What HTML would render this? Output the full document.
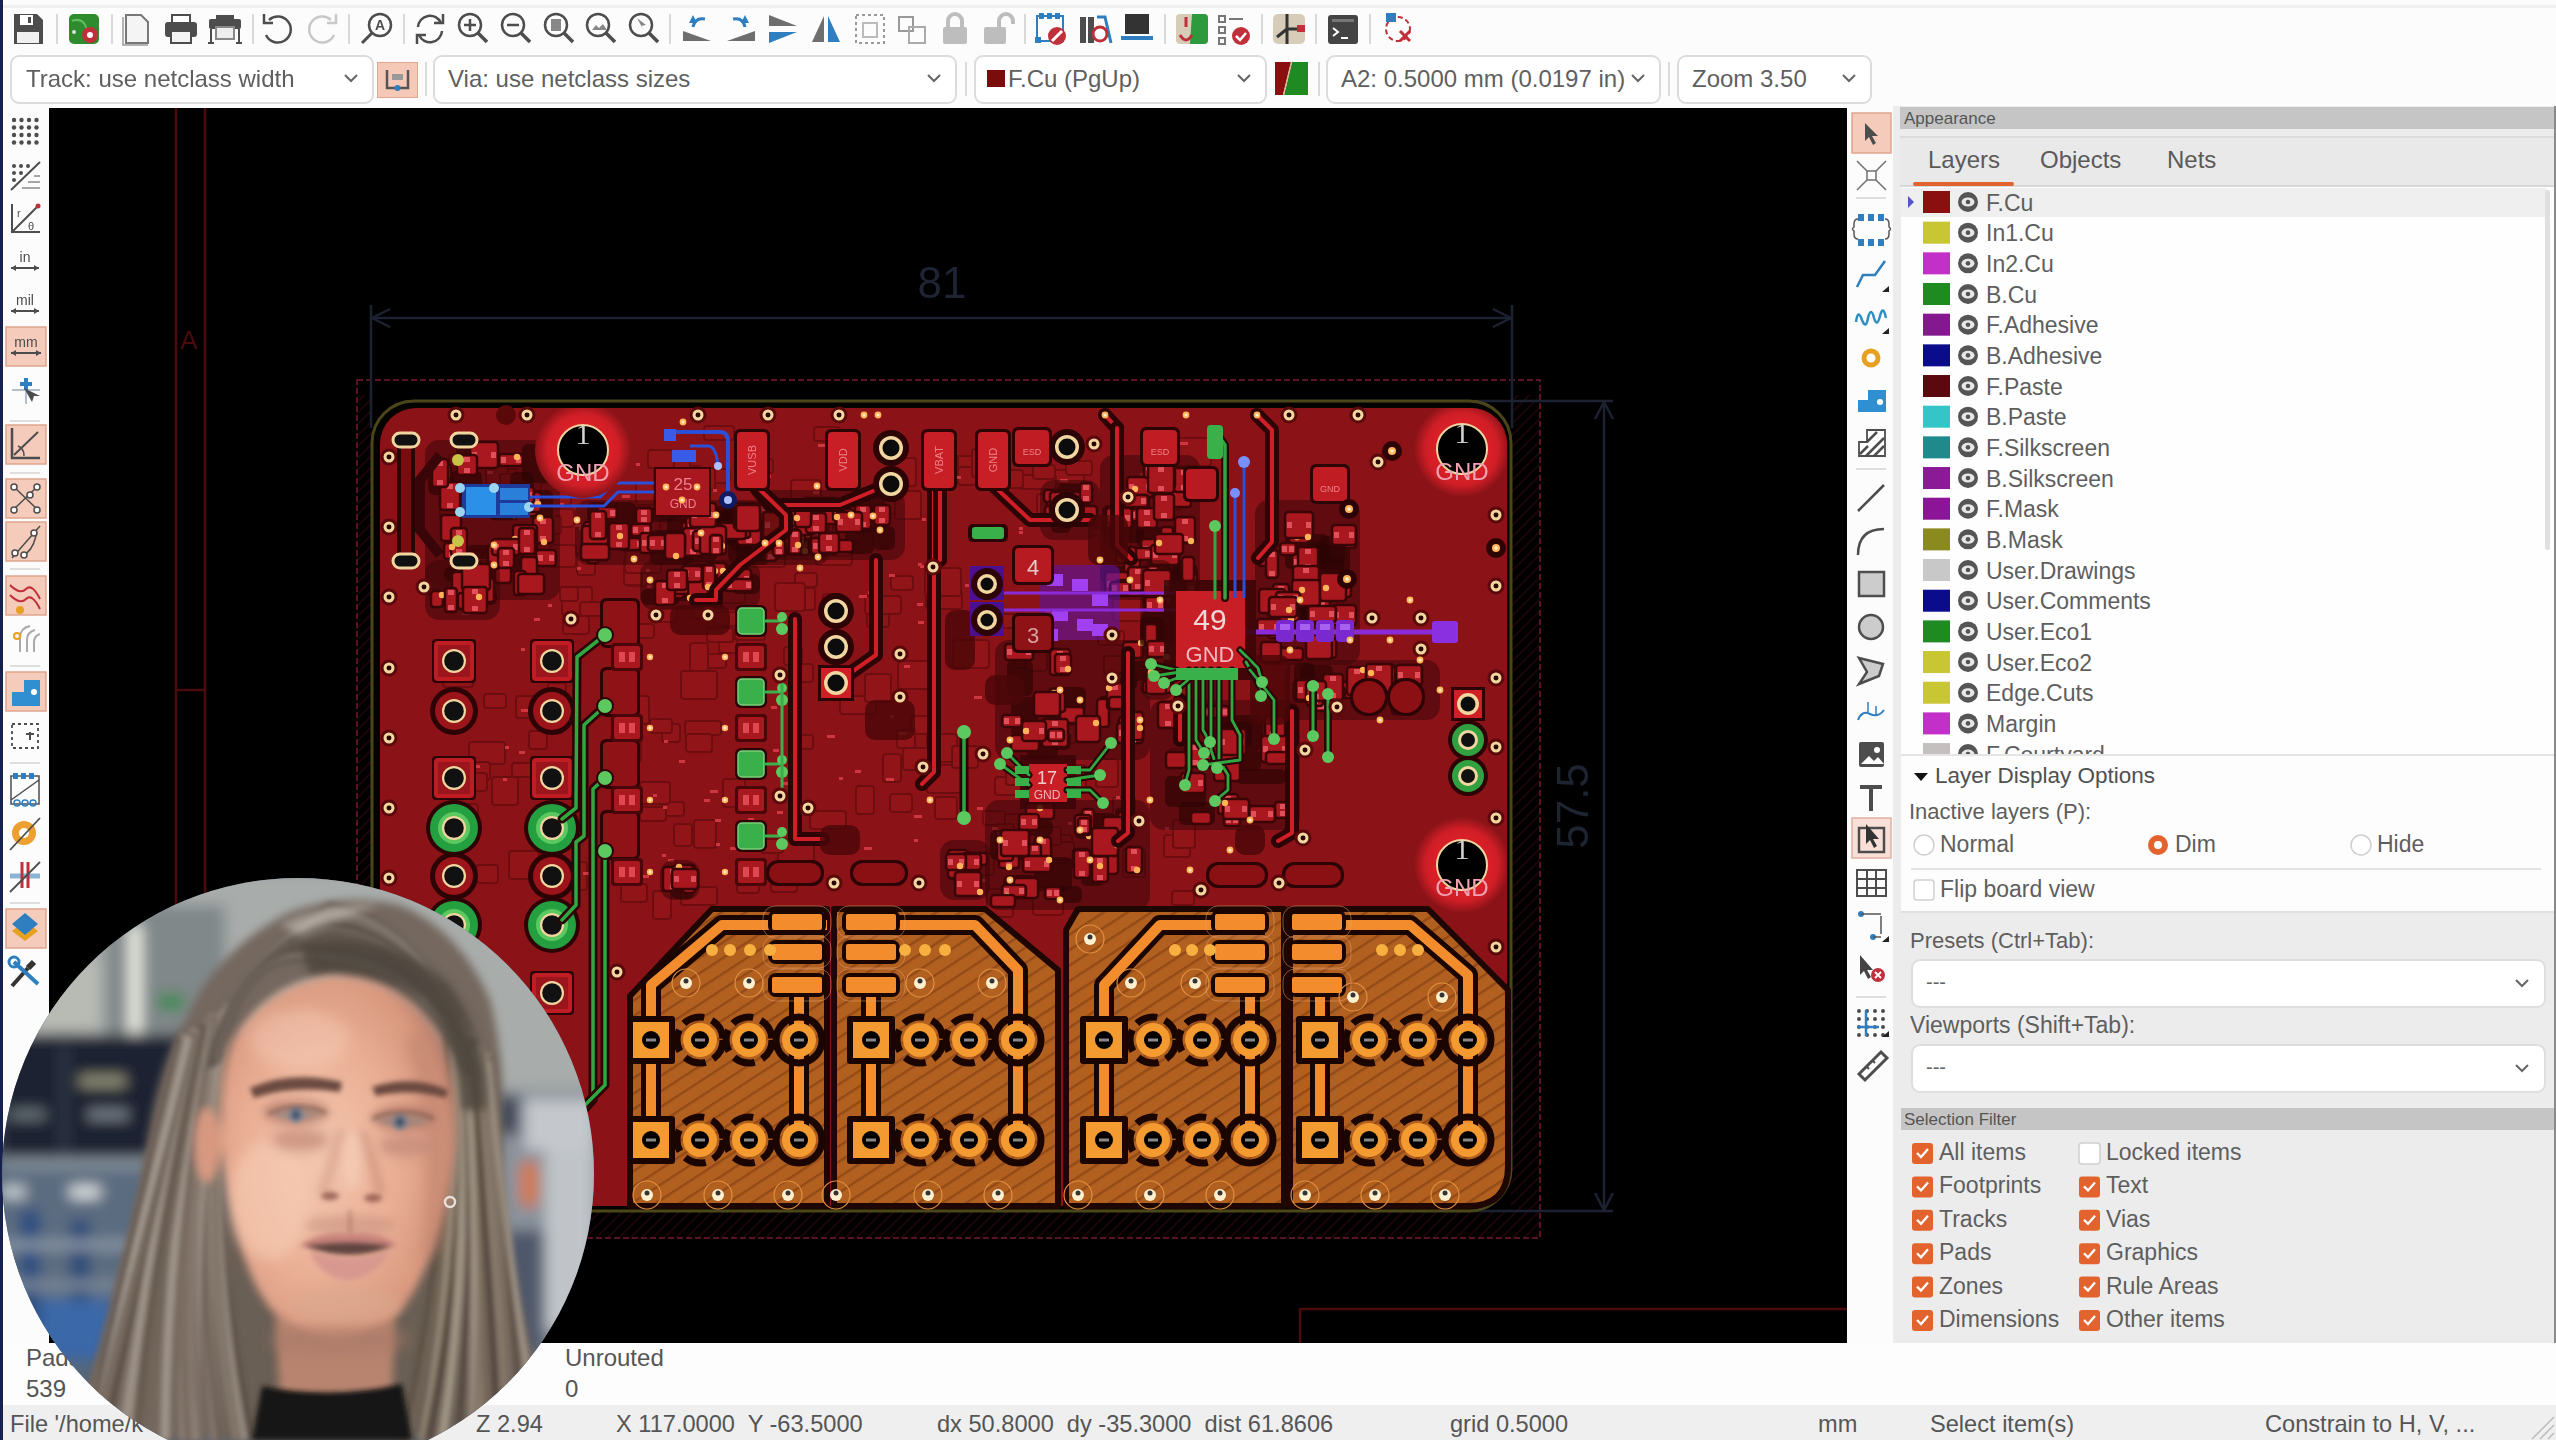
<!DOCTYPE html>
<html><head><meta charset="utf-8"><style>html,body{margin:0;padding:0;width:2556px;height:1440px;overflow:hidden;background:#fcfcfc;font-family:"Liberation Sans",sans-serif;color:#5a5a5a}
.a{position:absolute}
.t{position:absolute;white-space:nowrap;line-height:1}
.cb{position:absolute;background:#fff;border:2px solid #dcdcdc;border-radius:9px;box-sizing:border-box}
.sep{position:absolute;width:2px;background:#dadada}
</style></head><body><div id="wrap" style="position:absolute;left:0;top:0;width:2556px;height:1440px;overflow:hidden;filter:blur(0.45px)"><div class="a" style="left:0;top:0;width:3px;height:1440px;background:#16224c"></div><div class="a" style="left:3px;top:5px;width:2553px;height:3px;background:#efefef"></div><svg class="a" style="left:0;top:0" width="1420" height="52"><rect x="56" y="14" width="2" height="30" fill="#d9d9d9"/><rect x="111" y="14" width="2" height="30" fill="#d9d9d9"/><rect x="252" y="14" width="2" height="30" fill="#d9d9d9"/><rect x="348" y="14" width="2" height="30" fill="#d9d9d9"/><rect x="403" y="14" width="2" height="30" fill="#d9d9d9"/><rect x="669" y="14" width="2" height="30" fill="#d9d9d9"/><rect x="1024" y="14" width="2" height="30" fill="#d9d9d9"/><rect x="1164" y="14" width="2" height="30" fill="#d9d9d9"/><rect x="1261" y="14" width="2" height="30" fill="#d9d9d9"/><rect x="1315" y="14" width="2" height="30" fill="#d9d9d9"/><rect x="1369" y="14" width="2" height="30" fill="#d9d9d9"/><g transform="translate(28,29)"><path d="M-14 -15 H9 L15 -9 V15 H-14Z" fill="#4d4d4d"/><rect x="-8" y="-14" width="13" height="10" fill="#fff"/><rect x="-11" y="3" width="22" height="11" fill="#f0f0f0"/><rect x="0" y="-12" width="3" height="6" fill="#4d4d4d"/></g><g transform="translate(84,29)"><rect x="-15" y="-15" width="30" height="30" rx="5" fill="#2e8b2e"/><path d="M-12 -8 Q-2 -12 2 -2 Q6 8 14 6" stroke="#5fbf5f" stroke-width="2" fill="none"/><circle cx="6" cy="6" r="8" fill="#c0303a"/><circle cx="6" cy="6" r="3" fill="#fff"/><circle cx="-10" cy="3" r="2" fill="#ddd"/></g><g transform="translate(137,29)"><path d="M-11 -14 h15 l7 7 v21 h-22z" fill="#f4f4f4" stroke="#777" stroke-width="2"/><path d="M-14 -12 v28 h25" stroke="#999" stroke-width="1.5" fill="none"/></g><g transform="translate(181,29)"><rect x="-9" y="-14" width="18" height="8" fill="#fff" stroke="#4d4d4d" stroke-width="2"/><rect x="-16" y="-7" width="32" height="15" rx="3" fill="#4d4d4d"/><rect x="-10" y="2" width="20" height="12" fill="#f4f4f4" stroke="#4d4d4d" stroke-width="2"/></g><g transform="translate(225,29)"><rect x="-16" y="-10" width="32" height="10" rx="2" fill="#4d4d4d"/><rect x="-9" y="-14" width="18" height="5" fill="#4d4d4d"/><rect x="-9" y="-2" width="18" height="12" fill="#eee" stroke="#888" stroke-width="2"/><path d="M-14 0 v14 M14 0 v14 M-17 14 h6 M11 14 h6" stroke="#4d4d4d" stroke-width="2"/></g><g transform="translate(278,29)"><path d="M-9 -9 A13 13 0 1 1 -12 6" stroke="#4d4d4d" stroke-width="2.5" fill="none"/><path d="M-14 -15 v9 h9" stroke="#4d4d4d" stroke-width="2.5" fill="none"/></g><g transform="translate(322,29)"><path d="M9 -9 A13 13 0 1 0 12 6" stroke="#c8c8c8" stroke-width="2.5" fill="none"/><path d="M14 -15 v9 h-9" stroke="#c8c8c8" stroke-width="2.5" fill="none"/></g><g transform="translate(377,29)"><circle cx="3" cy="-4" r="11" stroke="#4d4d4d" stroke-width="2.5" fill="none"/><path d="M-5 4 L-15 14" stroke="#4d4d4d" stroke-width="3"/><text x="3" y="1" font-size="14" font-weight="bold" text-anchor="middle" fill="#4d4d4d" font-family="Liberation Sans">A</text></g><g transform="translate(430,29)"><path d="M-12 -2 A12 12 0 0 1 11 -6" stroke="#4d4d4d" stroke-width="2.5" fill="none"/><path d="M12 2 A12 12 0 0 1 -11 6" stroke="#4d4d4d" stroke-width="2.5" fill="none"/><path d="M13 -15 v9 h-9 M-13 15 v-9 h9" stroke="#4d4d4d" stroke-width="2.5" fill="none"/></g><g transform="translate(473,29)"><circle cx="-3" cy="-4" r="11" stroke="#4d4d4d" stroke-width="2.5" fill="none"/><path d="M5 4 L14 13" stroke="#4d4d4d" stroke-width="3.5"/><path d="M-9 -4 h12 M-3 -10 v12" stroke="#4d4d4d" stroke-width="2.5"/></g><g transform="translate(516,29)"><circle cx="-3" cy="-4" r="11" stroke="#4d4d4d" stroke-width="2.5" fill="none"/><path d="M5 4 L14 13" stroke="#4d4d4d" stroke-width="3.5"/><path d="M-9 -4 h12" stroke="#4d4d4d" stroke-width="2.5"/></g><g transform="translate(559,29)"><circle cx="-3" cy="-4" r="11" stroke="#4d4d4d" stroke-width="2.5" fill="none"/><path d="M5 4 L14 13" stroke="#4d4d4d" stroke-width="3.5"/><rect x="-8" y="-10" width="10" height="12" fill="#888"/></g><g transform="translate(601,29)"><circle cx="-3" cy="-4" r="11" stroke="#4d4d4d" stroke-width="2.5" fill="none"/><path d="M5 4 L14 13" stroke="#4d4d4d" stroke-width="3.5"/><path d="M-9 1 l4 -5 l3 3 l4 -4 l4 6z" fill="#888"/></g><g transform="translate(644,29)"><circle cx="-3" cy="-4" r="11" stroke="#4d4d4d" stroke-width="2.5" fill="none"/><path d="M5 4 L14 13" stroke="#4d4d4d" stroke-width="3.5"/><path d="M-7 -11 l9 7 l-5 1 l3 5 z" fill="#888"/></g><g transform="translate(697,29)"><path d="M-14 12 L14 12 L-14 2z" fill="#6e6e6e"/><path d="M-4 -2 Q-2 -12 8 -10" stroke="#2f7fc0" stroke-width="3" fill="none"/><path d="M-8 -6 l4 -8 l4 8z" fill="#2f7fc0"/></g><g transform="translate(741,29)"><path d="M-14 12 L14 12 L14 2z" fill="#6e6e6e"/><path d="M4 -2 Q2 -12 -8 -10" stroke="#2f7fc0" stroke-width="3" fill="none"/><path d="M8 -6 l-4 -8 l-4 8z" fill="#2f7fc0"/></g><g transform="translate(783,29)"><path d="M-14 -14 L14 -3 L-14 -3z" fill="#6e6e6e"/><path d="M-14 14 L14 3 L-14 3z" fill="#2f7fc0"/></g><g transform="translate(826,29)"><path d="M-2 -13 L-14 13 L-2 13z" fill="#6e6e6e"/><path d="M2 -13 L14 13 L2 13z" fill="#2f7fc0"/></g><g transform="translate(870,29)"><rect x="-14" y="-14" width="28" height="28" fill="none" stroke="#999" stroke-width="2" stroke-dasharray="3 3"/><rect x="-7" y="-6" width="14" height="14" fill="none" stroke="#bbb" stroke-width="2"/></g><g transform="translate(912,29)"><rect x="-13" y="-12" width="14" height="14" fill="none" stroke="#999" stroke-width="2"/><rect x="-3" y="-2" width="16" height="16" fill="none" stroke="#aaa" stroke-width="2"/></g><g transform="translate(955,29)"><path d="M-7 -2 v-6 a7 7 0 0 1 14 0 v6" stroke="#bdbdbd" stroke-width="4" fill="none"/><rect x="-12" y="-2" width="24" height="17" rx="2" fill="#bdbdbd"/></g><g transform="translate(997,29)"><path d="M2 -2 v-6 a7 7 0 0 1 14 0 v3" stroke="#bdbdbd" stroke-width="4" fill="none"/><rect x="-13" y="-2" width="22" height="17" rx="2" fill="#bdbdbd"/></g><g transform="translate(1051,29)"><rect x="-14" y="-13" width="26" height="25" fill="none" stroke="#2f7fc0" stroke-width="2"/><rect x="-12" y="-16" width="5" height="6" fill="#2f7fc0"/><rect x="-4" y="-16" width="5" height="6" fill="#2f7fc0"/><rect x="4" y="-16" width="5" height="6" fill="#2f7fc0"/><rect x="-16" y="8" width="6" height="6" fill="#2f7fc0"/><circle cx="6" cy="7" r="9" fill="#c0303a"/><path d="M1 12 l10 -10" stroke="#fff" stroke-width="3"/></g><g transform="translate(1095,29)"><rect x="-15" y="-12" width="6" height="26" fill="#4d4d4d"/><rect x="-7" y="-12" width="6" height="26" fill="#4d4d4d"/><path d="M2 -12 l8 0 l6 26" stroke="#2f7fc0" stroke-width="3" fill="none"/><circle cx="5" cy="5" r="7" stroke="#c0303a" stroke-width="3" fill="#fff"/></g><g transform="translate(1137,29)"><path d="M-12 -15 h24 v20 h-24z" fill="#333"/><rect x="-16" y="7" width="32" height="4" fill="#2f7fc0"/></g><g transform="translate(1192,29)"><rect x="-16" y="-15" width="32" height="30" rx="4" fill="#d6ccb8"/><path d="M0 -15 h12 a4 4 0 0 1 4 4 v22 a4 4 0 0 1 -4 4 h-14z" fill="#2e9a3e"/><path d="M-6 -12 v10 M-12 6 q6 10 12 0" stroke="#c0303a" stroke-width="3" fill="none"/></g><g transform="translate(1235,29)"><rect x="-16" y="-13" width="6" height="6" fill="none" stroke="#777" stroke-width="2"/><rect x="-16" y="-2" width="6" height="6" fill="none" stroke="#777" stroke-width="2"/><rect x="-16" y="9" width="6" height="6" fill="none" stroke="#777" stroke-width="2"/><path d="M-6 -10 h14" stroke="#777" stroke-width="2"/><circle cx="6" cy="7" r="9" fill="#c0303a"/><path d="M1 7 l4 4 l6 -7" stroke="#fff" stroke-width="2.5" fill="none"/></g><g transform="translate(1289,29)"><rect x="-16" y="-15" width="32" height="30" rx="5" fill="#d6ccb8"/><path d="M-2 -15 v30 M-2 0 h14 M-2 0 l-10 8" stroke="#333" stroke-width="3" fill="none"/><rect x="8" y="-4" width="8" height="7" fill="#c0303a"/></g><g transform="translate(1343,29)"><rect x="-15" y="-14" width="30" height="29" rx="3" fill="#444"/><rect x="-11" y="-10" width="22" height="3" fill="#777"/><path d="M-10 -1 l5 4 l-5 4 M-2 9 h7" stroke="#fff" stroke-width="2" fill="none"/></g><g transform="translate(1398,29)"><circle cx="0" cy="0" r="12" stroke="#c0303a" stroke-width="2" fill="none" stroke-dasharray="5 3"/><rect x="-12" y="-16" width="10" height="9" fill="#2f7fc0"/><path d="M2 2 l10 10 M12 2 l-10 10" stroke="#c0303a" stroke-width="3"/></g></svg><div class="cb" style="left:10px;top:55px;width:364px;height:49px"></div><div class="t" style="left:26px;top:67px;font-size:24px;color:#5f5f5f">Track: use netclass width</div><svg class="a" style="left:342px;top:72px" width="20" height="14"><path d="M3 3 l6 6 l6 -6" stroke="#666" stroke-width="2" fill="none"/></svg><div class="a" style="left:377px;top:62px;width:41px;height:36px;background:#f6c8b8;border:1px solid #e0a890;box-sizing:border-box"></div><svg class="a" style="left:377px;top:62px" width="41" height="36"><path d="M10 8 v18 h21 v-18" stroke="#555" stroke-width="2.5" fill="none"/><rect x="15" y="12" width="11" height="6" fill="#999"/><circle cx="20.5" cy="26" r="3" fill="#2f7fc0"/></svg><div class="sep" style="left:425px;top:62px;height:34px"></div><div class="cb" style="left:433px;top:55px;width:524px;height:49px"></div><div class="t" style="left:448px;top:67px;font-size:24px;color:#5f5f5f">Via: use netclass sizes</div><svg class="a" style="left:925px;top:72px" width="20" height="14"><path d="M3 3 l6 6 l6 -6" stroke="#666" stroke-width="2" fill="none"/></svg><div class="sep" style="left:965px;top:62px;height:34px"></div><div class="cb" style="left:974px;top:55px;width:293px;height:49px"></div><div class="t" style="left:1008px;top:67px;font-size:24px;color:#5f5f5f">F.Cu (PgUp)</div><svg class="a" style="left:1235px;top:72px" width="20" height="14"><path d="M3 3 l6 6 l6 -6" stroke="#666" stroke-width="2" fill="none"/></svg><div class="a" style="left:987px;top:70px;width:18px;height:17px;background:#7a0c0c"></div><svg class="a" style="left:1275px;top:62px" width="33" height="33"><path d="M0 0 H16 L8 33 H0Z" fill="#8a1010"/><path d="M17 0 H33 V33 H9Z" fill="#1f8a22"/><path d="M16.5 0 L8.5 33" stroke="#e8b0a0" stroke-width="1.2"/></svg><div class="sep" style="left:1318px;top:62px;height:34px"></div><div class="cb" style="left:1326px;top:55px;width:335px;height:49px"></div><div class="t" style="left:1341px;top:67px;font-size:24px;color:#5f5f5f">A2: 0.5000 mm (0.0197 in)</div><svg class="a" style="left:1629px;top:72px" width="20" height="14"><path d="M3 3 l6 6 l6 -6" stroke="#666" stroke-width="2" fill="none"/></svg><div class="sep" style="left:1668px;top:62px;height:34px"></div><div class="cb" style="left:1677px;top:55px;width:195px;height:49px"></div><div class="t" style="left:1692px;top:67px;font-size:24px;color:#5f5f5f">Zoom 3.50</div><svg class="a" style="left:1840px;top:72px" width="20" height="14"><path d="M3 3 l6 6 l6 -6" stroke="#666" stroke-width="2" fill="none"/></svg><svg class="a" style="left:0;top:0" width="49" height="1000"><g><circle cx="14.0" cy="120.0" r="2.2" fill="#4d4d4d"/><circle cx="21.5" cy="120.0" r="2.2" fill="#4d4d4d"/><circle cx="29.0" cy="120.0" r="2.2" fill="#4d4d4d"/><circle cx="36.5" cy="120.0" r="2.2" fill="#4d4d4d"/><circle cx="14.0" cy="127.5" r="2.2" fill="#4d4d4d"/><circle cx="21.5" cy="127.5" r="2.2" fill="#4d4d4d"/><circle cx="29.0" cy="127.5" r="2.2" fill="#4d4d4d"/><circle cx="36.5" cy="127.5" r="2.2" fill="#4d4d4d"/><circle cx="14.0" cy="135.0" r="2.2" fill="#4d4d4d"/><circle cx="21.5" cy="135.0" r="2.2" fill="#4d4d4d"/><circle cx="29.0" cy="135.0" r="2.2" fill="#4d4d4d"/><circle cx="36.5" cy="135.0" r="2.2" fill="#4d4d4d"/><circle cx="14.0" cy="142.5" r="2.2" fill="#4d4d4d"/><circle cx="21.5" cy="142.5" r="2.2" fill="#4d4d4d"/><circle cx="29.0" cy="142.5" r="2.2" fill="#4d4d4d"/><circle cx="36.5" cy="142.5" r="2.2" fill="#4d4d4d"/></g><g><path d="M11 190 L40 162" stroke="#4d4d4d" stroke-width="2"/><circle cx="14" cy="166" r="2" fill="#4d4d4d"/><circle cx="21" cy="166" r="2" fill="#4d4d4d"/><circle cx="28" cy="166" r="2" fill="#4d4d4d"/><circle cx="14" cy="173" r="2" fill="#4d4d4d"/><circle cx="21" cy="173" r="2" fill="#4d4d4d"/><circle cx="14" cy="180" r="2" fill="#4d4d4d"/><path d="M22 188 h18 M28 182 h12 M34 176 h6" stroke="#888" stroke-width="1.5"/></g><g><path d="M12 204 v28 h28" stroke="#4d4d4d" stroke-width="2" fill="none"/><path d="M12 232 L38 206" stroke="#4d4d4d" stroke-width="2"/><circle cx="38" cy="206" r="2.5" fill="#c0303a"/><text x="17" y="217" font-size="11" fill="#4d4d4d" font-family="Liberation Sans">r</text><text x="28" y="230" font-size="11" fill="#4d4d4d" font-family="Liberation Sans">θ</text></g><g><text x="25" y="262" font-size="14" text-anchor="middle" fill="#4d4d4d" font-family="Liberation Sans">in</text><path d="M11 268 h28" stroke="#4d4d4d" stroke-width="2"/><path d="M11 268 l5 -3 v6z M39 268 l-5 -3 v6z" fill="#4d4d4d"/></g><g><text x="25" y="305" font-size="14" text-anchor="middle" fill="#4d4d4d" font-family="Liberation Sans">mil</text><path d="M11 311 h28" stroke="#4d4d4d" stroke-width="2"/><path d="M11 311 l5 -3 v6z M39 311 l-5 -3 v6z" fill="#4d4d4d"/></g><rect x="6" y="327" width="40" height="39" fill="#f5cbbb" stroke="#dfa58e" stroke-width="1.5"/><g><text x="26" y="347" font-size="14" text-anchor="middle" fill="#4d4d4d" font-family="Liberation Sans">mm</text><path d="M11 353 h30" stroke="#4d4d4d" stroke-width="2"/><path d="M11 353 l5 -3 v6z M41 353 l-5 -3 v6z" fill="#4d4d4d"/></g><g><path d="M26 378 v26 M12 390 h28" stroke="#9ab" stroke-width="1.5"/><path d="M20 384 h12 M26 378 v12" stroke="#2f7fc0" stroke-width="4"/><path d="M24 388 l8 14 l2 -6 l6 0z" fill="#4d4d4d"/></g><rect x="10" y="420" width="30" height="2" fill="#dedede"/><rect x="6" y="425" width="40" height="39" fill="#f5cbbb" stroke="#dfa58e" stroke-width="1.5"/><g><path d="M12 428 v30 h28" stroke="#4d4d4d" stroke-width="2.5" fill="none"/><path d="M14 455 L38 432" stroke="#4d4d4d" stroke-width="2"/><path d="M18 446 a10 10 0 0 1 6 10" stroke="#4d4d4d" stroke-width="1.5" fill="none"/></g><rect x="10" y="472" width="30" height="2" fill="#dedede"/><rect x="6" y="479" width="40" height="39" fill="#f5cbbb" stroke="#dfa58e" stroke-width="1.5"/><g stroke="#4d4d4d" stroke-width="1.5" fill="#fff"><path d="M13 486 L38 510 M13 510 L38 486" /><circle cx="14" cy="487" r="3"/><circle cx="37" cy="487" r="3"/><circle cx="14" cy="510" r="3"/><circle cx="37" cy="510" r="3"/><circle cx="30" cy="495" r="3"/></g><rect x="6" y="522" width="40" height="39" fill="#f5cbbb" stroke="#dfa58e" stroke-width="1.5"/><g stroke="#4d4d4d" stroke-width="1.5" fill="#fff"><path d="M12 558 L40 526" /><circle cx="15" cy="553" r="3"/><circle cx="34" cy="533" r="3"/><path d="M22 556 q10 -4 14 -20" fill="none"/><circle cx="24" cy="555" r="3"/></g><rect x="10" y="568" width="30" height="2" fill="#dedede"/><rect x="6" y="576" width="40" height="39" fill="#f5cbbb" stroke="#dfa58e" stroke-width="1.5"/><g><path d="M10 585 q10 10 16 4 t14 10" stroke="#c0303a" stroke-width="2" fill="none"/><path d="M10 595 q10 10 16 4 t14 10" stroke="#c0303a" stroke-width="2" fill="none"/><circle cx="20" cy="610" r="4" fill="#e8a020"/></g><g stroke="#aaa" stroke-width="2" fill="none"><path d="M20 652 v-14 q0 -10 10 -12"/><path d="M27 652 v-12 q0 -8 8 -10"/><path d="M34 652 v-10 q0 -6 6 -8"/><circle cx="17" cy="636" r="3" stroke="#e8a020"/></g><rect x="10" y="665" width="30" height="2" fill="#dedede"/><rect x="6" y="672" width="40" height="39" fill="#f5cbbb" stroke="#dfa58e" stroke-width="1.5"/><g><path d="M12 706 v-14 h12 v-12 h16 v26z" fill="#2f8fd0"/><circle cx="34" cy="692" r="3" fill="#fff"/></g><g><rect x="12" y="724" width="26" height="24" fill="none" stroke="#4d4d4d" stroke-width="1.8" stroke-dasharray="3 3"/><path d="M30 732 v8 M26 734 h8" stroke="#4d4d4d" stroke-width="2"/></g><rect x="10" y="762" width="30" height="2" fill="#dedede"/><g><rect x="11" y="776" width="28" height="28" fill="none" stroke="#4d4d4d" stroke-width="1.5"/><rect x="13" y="773" width="5" height="6" fill="#2f7fc0"/><rect x="21" y="773" width="5" height="6" fill="#2f7fc0"/><rect x="29" y="773" width="5" height="6" fill="#2f7fc0"/><circle cx="17" cy="803" r="3" stroke="#2f7fc0" stroke-width="1.5" fill="none"/><circle cx="25" cy="803" r="3" stroke="#2f7fc0" stroke-width="1.5" fill="none"/><circle cx="33" cy="803" r="3" stroke="#2f7fc0" stroke-width="1.5" fill="none"/><path d="M11 800 L39 780" stroke="#4d4d4d" stroke-width="1.5"/></g><g><circle cx="24" cy="833" r="12" fill="#eba030"/><circle cx="24" cy="833" r="5" fill="#fff"/><path d="M10 850 L40 818" stroke="#4d4d4d" stroke-width="1.8"/></g><g><path d="M10 876 h30" stroke="#8ab4d4" stroke-width="5"/><path d="M22 862 v26 M28 862 v26" stroke="#c0303a" stroke-width="3"/><path d="M10 892 L40 862" stroke="#4d4d4d" stroke-width="1.8"/></g><rect x="10" y="902" width="30" height="2" fill="#dedede"/><rect x="6" y="909" width="40" height="39" fill="#f5cbbb" stroke="#dfa58e" stroke-width="1.5"/><g><path d="M25 921 l13 10 l-13 10 l-13 -10z" fill="#e8a020"/><path d="M25 913 l13 11 l-13 11 l-13 -11z" fill="#2f7fc0"/></g><g><path d="M12 986 L28 968" stroke="#333" stroke-width="4"/><path d="M28 968 l6 -6" stroke="#333" stroke-width="6"/><path d="M14 962 L38 984" stroke="#2f7fc0" stroke-width="4"/><circle cx="14" cy="962" r="5" fill="none" stroke="#2f7fc0" stroke-width="3"/></g></svg><div class="a" style="left:49px;top:108px;width:1798px;height:1235px;background:#000;overflow:hidden;filter:blur(0.6px)"><svg width="1798" height="1235" viewBox="49 108 1798 1235"><defs><pattern id="hatch" patternUnits="userSpaceOnUse" width="13" height="13" patternTransform="rotate(-33)"><rect width="13" height="13" fill="#b2601f"/><rect x="0" y="0" width="13" height="2.4" fill="#934a17"/></pattern><pattern id="thatch" patternUnits="userSpaceOnUse" width="16" height="16" patternTransform="rotate(-45)"><rect width="16" height="16" fill="#f0922a"/><rect x="0" y="0" width="16" height="1.8" fill="#a85a14"/></pattern><pattern id="chat" patternUnits="userSpaceOnUse" width="8" height="8" patternTransform="rotate(-45)"><rect width="8" height="8" fill="#000"/><rect x="0" y="0" width="8" height="1.6" fill="#4a0c18"/></pattern><radialGradient id="glow"><stop offset="0.5" stop-color="#dc2028"/><stop offset="0.75" stop-color="#d01e26"/><stop offset="1" stop-color="#8b1318"/></radialGradient><filter id="bl"><feGaussianBlur stdDeviation="0.7"/></filter><clipPath id="cu"><rect x="380" y="408" width="1127" height="798" rx="36"/></clipPath></defs><g stroke="#4a0a0e" stroke-width="2.5" fill="none"><path d="M176 108 V1343 M205 108 V1343 M176 690 H205"/></g><text x="189" y="349" font-size="26" fill="#4a0a0e" text-anchor="middle" font-family="Liberation Sans">A</text><path d="M1300 1343 V1309 H1847" stroke="#4a0a0e" stroke-width="2.5" fill="none"/><path d="M357 395 H372 V1238 H357Z M1511 395 H1540 V1238 H1511Z M372 1211 H1511 V1238 H372Z" fill="url(#chat)" opacity="0.45"/><rect x="357" y="380" width="1183" height="858" fill="none" stroke="#5a1226" stroke-width="2" stroke-dasharray="6 3"/><g stroke="#1c2232" stroke-width="2.5" fill="none"><path d="M371 318 H1512 M371 305 V428 M1512 305 V428"/><path d="M390 309 L372 318 L390 327 M1493 309 L1511 318 L1493 327"/><path d="M1604 401 V1211 M1475 401 H1613 M1475 1211 H1613"/><path d="M1595 419 L1604 402 L1613 419 M1595 1193 L1604 1210 L1613 1193"/></g><text x="942" y="298" font-size="44" fill="#1e2432" text-anchor="middle" font-family="Liberation Sans">81</text><text x="0" y="0" font-size="44" fill="#1e2432" text-anchor="middle" font-family="Liberation Sans" transform="translate(1588,806) rotate(-90)">57.5</text><rect x="372" y="401" width="1139" height="810" rx="42" fill="#050300" stroke="#4a461a" stroke-width="3"/><rect x="380" y="408" width="1127" height="798" rx="36" fill="#8b1318"/><g opacity="0.45"><rect x="680" y="497" width="18" height="14" rx="3" fill="#9a161a" stroke="#4a0608" stroke-width="2"/><rect x="1048" y="470" width="36" height="14" rx="3" fill="#9a161a" stroke="#4a0608" stroke-width="2"/><rect x="1113" y="527" width="18" height="28" rx="3" fill="#9a161a" stroke="#4a0608" stroke-width="2"/><rect x="749" y="539" width="36" height="28" rx="3" fill="#9a161a" stroke="#4a0608" stroke-width="2"/><rect x="484" y="694" width="22" height="14" rx="3" fill="#9a161a" stroke="#4a0608" stroke-width="2"/><rect x="867" y="613" width="22" height="14" rx="3" fill="#9a161a" stroke="#4a0608" stroke-width="2"/><rect x="852" y="488" width="30" height="18" rx="3" fill="#9a161a" stroke="#4a0608" stroke-width="2"/><rect x="840" y="696" width="36" height="18" rx="3" fill="#9a161a" stroke="#4a0608" stroke-width="2"/><rect x="516" y="696" width="22" height="22" rx="3" fill="#9a161a" stroke="#4a0608" stroke-width="2"/><rect x="512" y="763" width="36" height="14" rx="3" fill="#9a161a" stroke="#4a0608" stroke-width="2"/><rect x="898" y="661" width="36" height="28" rx="3" fill="#9a161a" stroke="#4a0608" stroke-width="2"/><rect x="1015" y="646" width="30" height="22" rx="3" fill="#9a161a" stroke="#4a0608" stroke-width="2"/><rect x="662" y="802" width="22" height="14" rx="3" fill="#9a161a" stroke="#4a0608" stroke-width="2"/><rect x="865" y="674" width="26" height="28" rx="3" fill="#9a161a" stroke="#4a0608" stroke-width="2"/><rect x="653" y="891" width="18" height="28" rx="3" fill="#9a161a" stroke="#4a0608" stroke-width="2"/><rect x="562" y="587" width="30" height="28" rx="3" fill="#9a161a" stroke="#4a0608" stroke-width="2"/><rect x="469" y="742" width="36" height="22" rx="3" fill="#9a161a" stroke="#4a0608" stroke-width="2"/><rect x="692" y="591" width="30" height="28" rx="3" fill="#9a161a" stroke="#4a0608" stroke-width="2"/><rect x="491" y="469" width="26" height="28" rx="3" fill="#9a161a" stroke="#4a0608" stroke-width="2"/><rect x="956" y="456" width="26" height="28" rx="3" fill="#9a161a" stroke="#4a0608" stroke-width="2"/><rect x="651" y="608" width="26" height="14" rx="3" fill="#9a161a" stroke="#4a0608" stroke-width="2"/><rect x="1136" y="594" width="36" height="14" rx="3" fill="#9a161a" stroke="#4a0608" stroke-width="2"/><rect x="805" y="529" width="26" height="18" rx="3" fill="#9a161a" stroke="#4a0608" stroke-width="2"/><rect x="986" y="614" width="30" height="14" rx="3" fill="#9a161a" stroke="#4a0608" stroke-width="2"/><rect x="563" y="616" width="26" height="18" rx="3" fill="#9a161a" stroke="#4a0608" stroke-width="2"/><rect x="1046" y="835" width="26" height="28" rx="3" fill="#9a161a" stroke="#4a0608" stroke-width="2"/><rect x="1170" y="749" width="30" height="18" rx="3" fill="#9a161a" stroke="#4a0608" stroke-width="2"/><rect x="552" y="509" width="22" height="18" rx="3" fill="#9a161a" stroke="#4a0608" stroke-width="2"/><rect x="449" y="820" width="22" height="22" rx="3" fill="#9a161a" stroke="#4a0608" stroke-width="2"/><rect x="649" y="494" width="36" height="22" rx="3" fill="#9a161a" stroke="#4a0608" stroke-width="2"/><rect x="891" y="576" width="22" height="14" rx="3" fill="#9a161a" stroke="#4a0608" stroke-width="2"/><rect x="778" y="839" width="36" height="28" rx="3" fill="#9a161a" stroke="#4a0608" stroke-width="2"/><rect x="735" y="612" width="30" height="28" rx="3" fill="#9a161a" stroke="#4a0608" stroke-width="2"/><rect x="486" y="457" width="22" height="28" rx="3" fill="#9a161a" stroke="#4a0608" stroke-width="2"/><rect x="560" y="587" width="18" height="14" rx="3" fill="#9a161a" stroke="#4a0608" stroke-width="2"/><rect x="440" y="497" width="18" height="22" rx="3" fill="#9a161a" stroke="#4a0608" stroke-width="2"/><rect x="894" y="458" width="22" height="28" rx="3" fill="#9a161a" stroke="#4a0608" stroke-width="2"/><rect x="550" y="545" width="26" height="22" rx="3" fill="#9a161a" stroke="#4a0608" stroke-width="2"/><rect x="791" y="480" width="30" height="28" rx="3" fill="#9a161a" stroke="#4a0608" stroke-width="2"/><rect x="795" y="573" width="22" height="14" rx="3" fill="#9a161a" stroke="#4a0608" stroke-width="2"/><rect x="995" y="777" width="30" height="18" rx="3" fill="#9a161a" stroke="#4a0608" stroke-width="2"/><rect x="822" y="522" width="36" height="22" rx="3" fill="#9a161a" stroke="#4a0608" stroke-width="2"/><rect x="548" y="683" width="18" height="22" rx="3" fill="#9a161a" stroke="#4a0608" stroke-width="2"/><rect x="1164" y="835" width="26" height="22" rx="3" fill="#9a161a" stroke="#4a0608" stroke-width="2"/><rect x="1112" y="594" width="22" height="22" rx="3" fill="#9a161a" stroke="#4a0608" stroke-width="2"/><rect x="911" y="716" width="22" height="18" rx="3" fill="#9a161a" stroke="#4a0608" stroke-width="2"/><rect x="1046" y="776" width="22" height="18" rx="3" fill="#9a161a" stroke="#4a0608" stroke-width="2"/><rect x="823" y="594" width="18" height="14" rx="3" fill="#9a161a" stroke="#4a0608" stroke-width="2"/><rect x="1025" y="649" width="22" height="22" rx="3" fill="#9a161a" stroke="#4a0608" stroke-width="2"/><rect x="771" y="870" width="26" height="22" rx="3" fill="#9a161a" stroke="#4a0608" stroke-width="2"/><rect x="500" y="474" width="30" height="18" rx="3" fill="#9a161a" stroke="#4a0608" stroke-width="2"/><rect x="690" y="654" width="36" height="14" rx="3" fill="#9a161a" stroke="#4a0608" stroke-width="2"/><rect x="795" y="735" width="18" height="14" rx="3" fill="#9a161a" stroke="#4a0608" stroke-width="2"/><rect x="1113" y="797" width="22" height="28" rx="3" fill="#9a161a" stroke="#4a0608" stroke-width="2"/><rect x="1098" y="631" width="26" height="14" rx="3" fill="#9a161a" stroke="#4a0608" stroke-width="2"/><rect x="1033" y="887" width="30" height="28" rx="3" fill="#9a161a" stroke="#4a0608" stroke-width="2"/><rect x="737" y="875" width="22" height="18" rx="3" fill="#9a161a" stroke="#4a0608" stroke-width="2"/><rect x="1175" y="438" width="36" height="28" rx="3" fill="#9a161a" stroke="#4a0608" stroke-width="2"/><rect x="1037" y="494" width="36" height="28" rx="3" fill="#9a161a" stroke="#4a0608" stroke-width="2"/><rect x="926" y="591" width="36" height="18" rx="3" fill="#9a161a" stroke="#4a0608" stroke-width="2"/><rect x="456" y="805" width="18" height="18" rx="3" fill="#9a161a" stroke="#4a0608" stroke-width="2"/><rect x="761" y="839" width="22" height="14" rx="3" fill="#9a161a" stroke="#4a0608" stroke-width="2"/><rect x="626" y="564" width="22" height="22" rx="3" fill="#9a161a" stroke="#4a0608" stroke-width="2"/><rect x="632" y="624" width="22" height="14" rx="3" fill="#9a161a" stroke="#4a0608" stroke-width="2"/><rect x="1113" y="593" width="30" height="28" rx="3" fill="#9a161a" stroke="#4a0608" stroke-width="2"/><rect x="1052" y="842" width="22" height="18" rx="3" fill="#9a161a" stroke="#4a0608" stroke-width="2"/><rect x="827" y="434" width="30" height="18" rx="3" fill="#9a161a" stroke="#4a0608" stroke-width="2"/><rect x="890" y="794" width="22" height="18" rx="3" fill="#9a161a" stroke="#4a0608" stroke-width="2"/><rect x="545" y="719" width="18" height="14" rx="3" fill="#9a161a" stroke="#4a0608" stroke-width="2"/><rect x="681" y="671" width="36" height="28" rx="3" fill="#9a161a" stroke="#4a0608" stroke-width="2"/><rect x="1020" y="475" width="36" height="14" rx="3" fill="#9a161a" stroke="#4a0608" stroke-width="2"/><rect x="624" y="557" width="18" height="28" rx="3" fill="#9a161a" stroke="#4a0608" stroke-width="2"/><rect x="856" y="786" width="18" height="28" rx="3" fill="#9a161a" stroke="#4a0608" stroke-width="2"/><rect x="681" y="887" width="36" height="18" rx="3" fill="#9a161a" stroke="#4a0608" stroke-width="2"/><rect x="953" y="640" width="36" height="28" rx="3" fill="#9a161a" stroke="#4a0608" stroke-width="2"/><rect x="816" y="543" width="36" height="22" rx="3" fill="#9a161a" stroke="#4a0608" stroke-width="2"/><rect x="1123" y="849" width="22" height="28" rx="3" fill="#9a161a" stroke="#4a0608" stroke-width="2"/><rect x="541" y="483" width="30" height="22" rx="3" fill="#9a161a" stroke="#4a0608" stroke-width="2"/><rect x="494" y="539" width="18" height="18" rx="3" fill="#9a161a" stroke="#4a0608" stroke-width="2"/><rect x="935" y="797" width="22" height="22" rx="3" fill="#9a161a" stroke="#4a0608" stroke-width="2"/><rect x="546" y="844" width="30" height="18" rx="3" fill="#9a161a" stroke="#4a0608" stroke-width="2"/><rect x="993" y="470" width="30" height="18" rx="3" fill="#9a161a" stroke="#4a0608" stroke-width="2"/><rect x="1173" y="820" width="22" height="28" rx="3" fill="#9a161a" stroke="#4a0608" stroke-width="2"/><rect x="1176" y="617" width="30" height="18" rx="3" fill="#9a161a" stroke="#4a0608" stroke-width="2"/><rect x="704" y="469" width="26" height="14" rx="3" fill="#9a161a" stroke="#4a0608" stroke-width="2"/><rect x="690" y="643" width="18" height="28" rx="3" fill="#9a161a" stroke="#4a0608" stroke-width="2"/><rect x="685" y="721" width="36" height="14" rx="3" fill="#9a161a" stroke="#4a0608" stroke-width="2"/><rect x="524" y="861" width="22" height="14" rx="3" fill="#9a161a" stroke="#4a0608" stroke-width="2"/><rect x="502" y="554" width="22" height="22" rx="3" fill="#9a161a" stroke="#4a0608" stroke-width="2"/><rect x="999" y="814" width="26" height="28" rx="3" fill="#9a161a" stroke="#4a0608" stroke-width="2"/><rect x="551" y="862" width="36" height="28" rx="3" fill="#9a161a" stroke="#4a0608" stroke-width="2"/><rect x="958" y="467" width="18" height="18" rx="3" fill="#9a161a" stroke="#4a0608" stroke-width="2"/><rect x="755" y="459" width="18" height="14" rx="3" fill="#9a161a" stroke="#4a0608" stroke-width="2"/><rect x="1033" y="465" width="22" height="14" rx="3" fill="#9a161a" stroke="#4a0608" stroke-width="2"/><rect x="636" y="483" width="18" height="22" rx="3" fill="#9a161a" stroke="#4a0608" stroke-width="2"/><rect x="1176" y="623" width="26" height="18" rx="3" fill="#9a161a" stroke="#4a0608" stroke-width="2"/><rect x="472" y="762" width="18" height="18" rx="3" fill="#9a161a" stroke="#4a0608" stroke-width="2"/><rect x="634" y="511" width="26" height="22" rx="3" fill="#9a161a" stroke="#4a0608" stroke-width="2"/><rect x="833" y="523" width="30" height="18" rx="3" fill="#9a161a" stroke="#4a0608" stroke-width="2"/><rect x="640" y="807" width="26" height="14" rx="3" fill="#9a161a" stroke="#4a0608" stroke-width="2"/><rect x="451" y="773" width="36" height="18" rx="3" fill="#9a161a" stroke="#4a0608" stroke-width="2"/><rect x="821" y="542" width="30" height="14" rx="3" fill="#9a161a" stroke="#4a0608" stroke-width="2"/><rect x="927" y="734" width="30" height="28" rx="3" fill="#9a161a" stroke="#4a0608" stroke-width="2"/><rect x="1158" y="571" width="22" height="18" rx="3" fill="#9a161a" stroke="#4a0608" stroke-width="2"/><rect x="694" y="820" width="22" height="28" rx="3" fill="#9a161a" stroke="#4a0608" stroke-width="2"/><rect x="1172" y="891" width="22" height="14" rx="3" fill="#9a161a" stroke="#4a0608" stroke-width="2"/><rect x="492" y="777" width="26" height="28" rx="3" fill="#9a161a" stroke="#4a0608" stroke-width="2"/><rect x="561" y="465" width="30" height="22" rx="3" fill="#9a161a" stroke="#4a0608" stroke-width="2"/><rect x="883" y="754" width="18" height="28" rx="3" fill="#9a161a" stroke="#4a0608" stroke-width="2"/><rect x="577" y="553" width="18" height="22" rx="3" fill="#9a161a" stroke="#4a0608" stroke-width="2"/><rect x="709" y="581" width="36" height="22" rx="3" fill="#9a161a" stroke="#4a0608" stroke-width="2"/><rect x="621" y="884" width="26" height="18" rx="3" fill="#9a161a" stroke="#4a0608" stroke-width="2"/><rect x="704" y="426" width="30" height="14" rx="3" fill="#9a161a" stroke="#4a0608" stroke-width="2"/><rect x="791" y="664" width="22" height="18" rx="3" fill="#9a161a" stroke="#4a0608" stroke-width="2"/><rect x="814" y="427" width="26" height="14" rx="3" fill="#9a161a" stroke="#4a0608" stroke-width="2"/><rect x="546" y="704" width="30" height="14" rx="3" fill="#9a161a" stroke="#4a0608" stroke-width="2"/><rect x="662" y="724" width="18" height="18" rx="3" fill="#9a161a" stroke="#4a0608" stroke-width="2"/><rect x="927" y="765" width="36" height="28" rx="3" fill="#9a161a" stroke="#4a0608" stroke-width="2"/><rect x="1006" y="767" width="30" height="18" rx="3" fill="#9a161a" stroke="#4a0608" stroke-width="2"/><rect x="650" y="719" width="22" height="14" rx="3" fill="#9a161a" stroke="#4a0608" stroke-width="2"/><rect x="1050" y="765" width="36" height="28" rx="3" fill="#9a161a" stroke="#4a0608" stroke-width="2"/><rect x="983" y="811" width="22" height="14" rx="3" fill="#9a161a" stroke="#4a0608" stroke-width="2"/><rect x="1052" y="702" width="22" height="14" rx="3" fill="#9a161a" stroke="#4a0608" stroke-width="2"/><rect x="463" y="488" width="26" height="14" rx="3" fill="#9a161a" stroke="#4a0608" stroke-width="2"/><rect x="719" y="639" width="18" height="14" rx="3" fill="#9a161a" stroke="#4a0608" stroke-width="2"/><rect x="903" y="748" width="30" height="22" rx="3" fill="#9a161a" stroke="#4a0608" stroke-width="2"/><rect x="442" y="804" width="36" height="14" rx="3" fill="#9a161a" stroke="#4a0608" stroke-width="2"/><rect x="928" y="456" width="30" height="22" rx="3" fill="#9a161a" stroke="#4a0608" stroke-width="2"/><rect x="1039" y="827" width="22" height="18" rx="3" fill="#9a161a" stroke="#4a0608" stroke-width="2"/><rect x="611" y="734" width="30" height="28" rx="3" fill="#9a161a" stroke="#4a0608" stroke-width="2"/><rect x="1066" y="461" width="26" height="14" rx="3" fill="#9a161a" stroke="#4a0608" stroke-width="2"/><rect x="897" y="730" width="18" height="18" rx="3" fill="#9a161a" stroke="#4a0608" stroke-width="2"/><rect x="686" y="734" width="26" height="18" rx="3" fill="#9a161a" stroke="#4a0608" stroke-width="2"/><rect x="449" y="454" width="26" height="14" rx="3" fill="#9a161a" stroke="#4a0608" stroke-width="2"/><rect x="952" y="746" width="26" height="22" rx="3" fill="#9a161a" stroke="#4a0608" stroke-width="2"/><rect x="784" y="647" width="18" height="18" rx="3" fill="#9a161a" stroke="#4a0608" stroke-width="2"/><rect x="671" y="466" width="30" height="14" rx="3" fill="#9a161a" stroke="#4a0608" stroke-width="2"/><rect x="654" y="461" width="36" height="28" rx="3" fill="#9a161a" stroke="#4a0608" stroke-width="2"/><rect x="1176" y="609" width="22" height="14" rx="3" fill="#9a161a" stroke="#4a0608" stroke-width="2"/><rect x="870" y="492" width="36" height="22" rx="3" fill="#9a161a" stroke="#4a0608" stroke-width="2"/><rect x="1145" y="488" width="36" height="22" rx="3" fill="#9a161a" stroke="#4a0608" stroke-width="2"/><rect x="1096" y="759" width="22" height="28" rx="3" fill="#9a161a" stroke="#4a0608" stroke-width="2"/><rect x="1104" y="656" width="18" height="18" rx="3" fill="#9a161a" stroke="#4a0608" stroke-width="2"/><rect x="443" y="659" width="30" height="28" rx="3" fill="#9a161a" stroke="#4a0608" stroke-width="2"/><rect x="663" y="492" width="26" height="28" rx="3" fill="#9a161a" stroke="#4a0608" stroke-width="2"/><rect x="674" y="824" width="18" height="22" rx="3" fill="#9a161a" stroke="#4a0608" stroke-width="2"/><rect x="996" y="824" width="18" height="18" rx="3" fill="#9a161a" stroke="#4a0608" stroke-width="2"/><rect x="968" y="853" width="26" height="22" rx="3" fill="#9a161a" stroke="#4a0608" stroke-width="2"/><rect x="715" y="612" width="36" height="14" rx="3" fill="#9a161a" stroke="#4a0608" stroke-width="2"/><rect x="707" y="628" width="26" height="14" rx="3" fill="#9a161a" stroke="#4a0608" stroke-width="2"/><rect x="648" y="450" width="26" height="18" rx="3" fill="#9a161a" stroke="#4a0608" stroke-width="2"/><rect x="625" y="551" width="36" height="22" rx="3" fill="#9a161a" stroke="#4a0608" stroke-width="2"/><rect x="580" y="602" width="30" height="14" rx="3" fill="#9a161a" stroke="#4a0608" stroke-width="2"/><rect x="1041" y="725" width="36" height="18" rx="3" fill="#9a161a" stroke="#4a0608" stroke-width="2"/><rect x="972" y="449" width="30" height="28" rx="3" fill="#9a161a" stroke="#4a0608" stroke-width="2"/><rect x="895" y="491" width="26" height="28" rx="3" fill="#9a161a" stroke="#4a0608" stroke-width="2"/><rect x="476" y="865" width="22" height="18" rx="3" fill="#9a161a" stroke="#4a0608" stroke-width="2"/><rect x="789" y="588" width="26" height="22" rx="3" fill="#9a161a" stroke="#4a0608" stroke-width="2"/><rect x="987" y="889" width="26" height="28" rx="3" fill="#9a161a" stroke="#4a0608" stroke-width="2"/><rect x="925" y="568" width="36" height="28" rx="3" fill="#9a161a" stroke="#4a0608" stroke-width="2"/><rect x="529" y="731" width="18" height="18" rx="3" fill="#9a161a" stroke="#4a0608" stroke-width="2"/><rect x="810" y="811" width="36" height="18" rx="3" fill="#9a161a" stroke="#4a0608" stroke-width="2"/><rect x="775" y="583" width="30" height="28" rx="3" fill="#9a161a" stroke="#4a0608" stroke-width="2"/><rect x="543" y="516" width="18" height="18" rx="3" fill="#9a161a" stroke="#4a0608" stroke-width="2"/><rect x="693" y="468" width="22" height="22" rx="3" fill="#9a161a" stroke="#4a0608" stroke-width="2"/><rect x="631" y="696" width="18" height="28" rx="3" fill="#9a161a" stroke="#4a0608" stroke-width="2"/><rect x="723" y="779" width="22" height="28" rx="3" fill="#9a161a" stroke="#4a0608" stroke-width="2"/><rect x="640" y="782" width="30" height="22" rx="3" fill="#9a161a" stroke="#4a0608" stroke-width="2"/><rect x="865" y="596" width="36" height="18" rx="3" fill="#9a161a" stroke="#4a0608" stroke-width="2"/><rect x="509" y="851" width="30" height="28" rx="3" fill="#9a161a" stroke="#4a0608" stroke-width="2"/></g><g opacity="0.8"><rect x="918" y="621" width="6" height="3" fill="#e0404a"/><rect x="1068" y="822" width="4" height="3" fill="#e0404a"/><rect x="534" y="618" width="6" height="3" fill="#e0404a"/><rect x="1157" y="648" width="4" height="3" fill="#e0404a"/><rect x="730" y="847" width="8" height="3" fill="#e0404a"/><rect x="1073" y="867" width="4" height="3" fill="#e0404a"/><rect x="1019" y="527" width="4" height="3" fill="#e0404a"/><rect x="827" y="735" width="8" height="3" fill="#e0404a"/><rect x="959" y="810" width="6" height="3" fill="#e0404a"/><rect x="503" y="778" width="4" height="3" fill="#e0404a"/><rect x="1019" y="531" width="4" height="3" fill="#e0404a"/><rect x="918" y="563" width="4" height="3" fill="#e0404a"/><rect x="904" y="665" width="6" height="3" fill="#e0404a"/><rect x="957" y="476" width="4" height="3" fill="#e0404a"/><rect x="662" y="854" width="4" height="3" fill="#e0404a"/><rect x="727" y="527" width="8" height="3" fill="#e0404a"/><rect x="441" y="670" width="6" height="3" fill="#e0404a"/><rect x="646" y="569" width="4" height="3" fill="#e0404a"/><rect x="792" y="532" width="4" height="3" fill="#e0404a"/><rect x="462" y="612" width="8" height="3" fill="#e0404a"/><rect x="667" y="435" width="6" height="3" fill="#e0404a"/><rect x="1095" y="719" width="4" height="3" fill="#e0404a"/><rect x="630" y="729" width="6" height="3" fill="#e0404a"/><rect x="608" y="441" width="6" height="3" fill="#e0404a"/><rect x="972" y="590" width="6" height="3" fill="#e0404a"/><rect x="587" y="788" width="8" height="3" fill="#e0404a"/><rect x="1065" y="456" width="6" height="3" fill="#e0404a"/><rect x="1158" y="567" width="4" height="3" fill="#e0404a"/><rect x="611" y="526" width="6" height="3" fill="#e0404a"/><rect x="521" y="709" width="8" height="3" fill="#e0404a"/><rect x="579" y="527" width="6" height="3" fill="#e0404a"/><rect x="1114" y="451" width="8" height="3" fill="#e0404a"/><rect x="548" y="604" width="4" height="3" fill="#e0404a"/><rect x="457" y="696" width="6" height="3" fill="#e0404a"/><rect x="478" y="452" width="6" height="3" fill="#e0404a"/><rect x="773" y="749" width="6" height="3" fill="#e0404a"/><rect x="982" y="879" width="4" height="3" fill="#e0404a"/><rect x="684" y="509" width="8" height="3" fill="#e0404a"/><rect x="992" y="440" width="8" height="3" fill="#e0404a"/><rect x="977" y="807" width="6" height="3" fill="#e0404a"/><rect x="767" y="475" width="4" height="3" fill="#e0404a"/><rect x="647" y="585" width="4" height="3" fill="#e0404a"/><rect x="855" y="770" width="6" height="3" fill="#e0404a"/><rect x="704" y="799" width="6" height="3" fill="#e0404a"/><rect x="505" y="746" width="4" height="3" fill="#e0404a"/><rect x="716" y="843" width="4" height="3" fill="#e0404a"/><rect x="679" y="760" width="6" height="3" fill="#e0404a"/><rect x="462" y="612" width="8" height="3" fill="#e0404a"/><rect x="1007" y="443" width="4" height="3" fill="#e0404a"/><rect x="783" y="791" width="4" height="3" fill="#e0404a"/><rect x="630" y="765" width="8" height="3" fill="#e0404a"/><rect x="691" y="549" width="8" height="3" fill="#e0404a"/><rect x="472" y="765" width="8" height="3" fill="#e0404a"/><rect x="674" y="550" width="4" height="3" fill="#e0404a"/><rect x="974" y="696" width="8" height="3" fill="#e0404a"/><rect x="1140" y="455" width="4" height="3" fill="#e0404a"/><rect x="519" y="751" width="6" height="3" fill="#e0404a"/><rect x="1146" y="601" width="6" height="3" fill="#e0404a"/><rect x="1116" y="796" width="4" height="3" fill="#e0404a"/><rect x="1127" y="508" width="8" height="3" fill="#e0404a"/><rect x="664" y="740" width="4" height="3" fill="#e0404a"/><rect x="889" y="574" width="6" height="3" fill="#e0404a"/><rect x="781" y="782" width="8" height="3" fill="#e0404a"/><rect x="498" y="515" width="4" height="3" fill="#e0404a"/><rect x="623" y="454" width="4" height="3" fill="#e0404a"/><rect x="796" y="673" width="4" height="3" fill="#e0404a"/><rect x="1165" y="827" width="4" height="3" fill="#e0404a"/><rect x="636" y="463" width="4" height="3" fill="#e0404a"/><rect x="752" y="875" width="6" height="3" fill="#e0404a"/><rect x="568" y="485" width="6" height="3" fill="#e0404a"/><rect x="899" y="732" width="8" height="3" fill="#e0404a"/><rect x="839" y="777" width="4" height="3" fill="#e0404a"/><rect x="1017" y="559" width="6" height="3" fill="#e0404a"/><rect x="859" y="595" width="8" height="3" fill="#e0404a"/><rect x="633" y="625" width="4" height="3" fill="#e0404a"/><rect x="622" y="495" width="8" height="3" fill="#e0404a"/><rect x="579" y="454" width="6" height="3" fill="#e0404a"/><rect x="1174" y="656" width="4" height="3" fill="#e0404a"/><rect x="921" y="471" width="6" height="3" fill="#e0404a"/><rect x="1173" y="472" width="6" height="3" fill="#e0404a"/><rect x="1093" y="530" width="6" height="3" fill="#e0404a"/><rect x="1117" y="443" width="6" height="3" fill="#e0404a"/><rect x="612" y="448" width="8" height="3" fill="#e0404a"/><rect x="1160" y="690" width="4" height="3" fill="#e0404a"/><rect x="715" y="819" width="6" height="3" fill="#e0404a"/><rect x="886" y="778" width="8" height="3" fill="#e0404a"/><rect x="1140" y="473" width="8" height="3" fill="#e0404a"/><rect x="965" y="584" width="4" height="3" fill="#e0404a"/><rect x="713" y="489" width="4" height="3" fill="#e0404a"/><rect x="1180" y="442" width="8" height="3" fill="#e0404a"/><rect x="922" y="518" width="4" height="3" fill="#e0404a"/><rect x="1046" y="611" width="6" height="3" fill="#e0404a"/><rect x="577" y="567" width="4" height="3" fill="#e0404a"/><rect x="463" y="651" width="6" height="3" fill="#e0404a"/><rect x="487" y="471" width="6" height="3" fill="#e0404a"/><rect x="931" y="495" width="8" height="3" fill="#e0404a"/><rect x="507" y="499" width="8" height="3" fill="#e0404a"/><rect x="641" y="875" width="8" height="3" fill="#e0404a"/><rect x="668" y="859" width="6" height="3" fill="#e0404a"/><rect x="992" y="827" width="6" height="3" fill="#e0404a"/><rect x="748" y="818" width="6" height="3" fill="#e0404a"/><rect x="917" y="603" width="6" height="3" fill="#e0404a"/><rect x="591" y="428" width="4" height="3" fill="#e0404a"/><rect x="754" y="798" width="6" height="3" fill="#e0404a"/><rect x="868" y="591" width="4" height="3" fill="#e0404a"/><rect x="536" y="449" width="4" height="3" fill="#e0404a"/><rect x="914" y="839" width="4" height="3" fill="#e0404a"/><rect x="864" y="847" width="8" height="3" fill="#e0404a"/><rect x="813" y="491" width="6" height="3" fill="#e0404a"/><rect x="560" y="503" width="4" height="3" fill="#e0404a"/><rect x="521" y="648" width="4" height="3" fill="#e0404a"/><rect x="663" y="806" width="4" height="3" fill="#e0404a"/><rect x="1162" y="645" width="4" height="3" fill="#e0404a"/><rect x="890" y="715" width="4" height="3" fill="#e0404a"/><rect x="1109" y="707" width="4" height="3" fill="#e0404a"/><rect x="914" y="815" width="8" height="3" fill="#e0404a"/><rect x="739" y="810" width="6" height="3" fill="#e0404a"/><rect x="575" y="524" width="6" height="3" fill="#e0404a"/><rect x="1135" y="496" width="6" height="3" fill="#e0404a"/><rect x="531" y="537" width="8" height="3" fill="#e0404a"/><rect x="1044" y="513" width="8" height="3" fill="#e0404a"/><rect x="1063" y="731" width="8" height="3" fill="#e0404a"/><rect x="1060" y="479" width="8" height="3" fill="#e0404a"/><rect x="777" y="811" width="6" height="3" fill="#e0404a"/><rect x="920" y="565" width="4" height="3" fill="#e0404a"/><rect x="755" y="725" width="6" height="3" fill="#e0404a"/><rect x="813" y="506" width="4" height="3" fill="#e0404a"/><rect x="898" y="648" width="4" height="3" fill="#e0404a"/><rect x="771" y="706" width="6" height="3" fill="#e0404a"/><rect x="1059" y="794" width="6" height="3" fill="#e0404a"/><rect x="519" y="483" width="6" height="3" fill="#e0404a"/><rect x="710" y="790" width="8" height="3" fill="#e0404a"/><rect x="818" y="444" width="8" height="3" fill="#e0404a"/><rect x="536" y="845" width="6" height="3" fill="#e0404a"/><rect x="1015" y="658" width="4" height="3" fill="#e0404a"/><rect x="997" y="832" width="8" height="3" fill="#e0404a"/><rect x="1144" y="487" width="4" height="3" fill="#e0404a"/><rect x="1177" y="758" width="4" height="3" fill="#e0404a"/><rect x="583" y="872" width="6" height="3" fill="#e0404a"/><rect x="653" y="794" width="4" height="3" fill="#e0404a"/></g><rect x="425" y="440" width="135" height="160" rx="14" fill="#3c0507" opacity="0.54"/><rect x="510" y="472" width="24" height="36" rx="6" fill="#2a0304" opacity="0.6"/><rect x="490" y="546" width="35" height="26" rx="6" fill="#2a0304" opacity="0.6"/><rect x="519" y="503" width="23" height="15" rx="6" fill="#2a0304" opacity="0.6"/><rect x="466" y="545" width="43" height="14" rx="6" fill="#2a0304" opacity="0.6"/><rect x="522" y="444" width="27" height="39" rx="6" fill="#2a0304" opacity="0.6"/><rect x="532" y="490" width="21" height="28" rx="6" fill="#2a0304" opacity="0.6"/><rect x="428" y="470" width="26" height="25" rx="6" fill="#2a0304" opacity="0.6"/><rect x="449" y="471" width="33" height="27" rx="6" fill="#2a0304" opacity="0.6"/><rect x="456" y="443" width="27" height="26" rx="6" fill="#2a0304" opacity="0.6"/><rect x="510" y="483" width="16" height="16" rx="3" fill="#a8181e" stroke="#3a0507" stroke-width="2.5"/><rect x="495" y="555" width="16" height="28" rx="3" fill="#a8181e" stroke="#3a0507" stroke-width="2.5"/><rect x="511" y="500" width="26" height="16" rx="3" fill="#a8181e" stroke="#3a0507" stroke-width="2.5"/><rect x="513" y="505" width="5" height="6" fill="#e0505a"/><rect x="530" y="505" width="5" height="6" fill="#e0505a"/><rect x="488" y="545" width="12" height="24" rx="3" fill="#a8181e" stroke="#3a0507" stroke-width="2.5"/><rect x="491" y="547" width="6" height="5" fill="#e0505a"/><rect x="491" y="562" width="6" height="5" fill="#e0505a"/><rect x="464" y="551" width="12" height="28" rx="3" fill="#a8181e" stroke="#3a0507" stroke-width="2.5"/><rect x="467" y="553" width="6" height="5" fill="#e0505a"/><rect x="467" y="572" width="6" height="5" fill="#e0505a"/><rect x="536" y="550" width="20" height="16" rx="3" fill="#a8181e" stroke="#3a0507" stroke-width="2.5"/><rect x="538" y="555" width="5" height="6" fill="#e0505a"/><rect x="549" y="555" width="5" height="6" fill="#e0505a"/><rect x="533" y="517" width="20" height="26" rx="3" fill="#a8181e" stroke="#3a0507" stroke-width="2.5"/><rect x="540" y="519" width="6" height="5" fill="#e0505a"/><rect x="540" y="536" width="6" height="5" fill="#e0505a"/><circle cx="544" cy="542" r="3.2" fill="#ffb45a"/><rect x="521" y="557" width="16" height="26" rx="3" fill="#a8181e" stroke="#3a0507" stroke-width="2.5"/><rect x="480" y="489" width="20" height="26" rx="3" fill="#a8181e" stroke="#3a0507" stroke-width="2.5"/><rect x="487" y="491" width="6" height="5" fill="#e0505a"/><rect x="487" y="508" width="6" height="5" fill="#e0505a"/><rect x="470" y="442" width="28" height="26" rx="3" fill="#a8181e" stroke="#3a0507" stroke-width="2.5"/><rect x="472" y="452" width="5" height="6" fill="#e0505a"/><rect x="491" y="452" width="5" height="6" fill="#e0505a"/><rect x="513" y="525" width="24" height="26" rx="3" fill="#a8181e" stroke="#3a0507" stroke-width="2.5"/><rect x="522" y="527" width="6" height="5" fill="#e0505a"/><rect x="522" y="544" width="6" height="5" fill="#e0505a"/><circle cx="515" cy="539" r="3.2" fill="#ffb45a"/><rect x="499" y="454" width="24" height="12" rx="3" fill="#a8181e" stroke="#3a0507" stroke-width="2.5"/><rect x="501" y="457" width="5" height="6" fill="#e0505a"/><rect x="516" y="457" width="5" height="6" fill="#e0505a"/><circle cx="517" cy="457" r="3.2" fill="#ffb45a"/><rect x="435" y="464" width="16" height="16" rx="3" fill="#a8181e" stroke="#3a0507" stroke-width="2.5"/><rect x="440" y="466" width="6" height="5" fill="#e0505a"/><rect x="440" y="473" width="6" height="5" fill="#e0505a"/><circle cx="439" cy="476" r="3.2" fill="#ffb45a"/><rect x="440" y="482" width="20" height="28" rx="3" fill="#a8181e" stroke="#3a0507" stroke-width="2.5"/><rect x="447" y="484" width="6" height="5" fill="#e0505a"/><rect x="447" y="503" width="6" height="5" fill="#e0505a"/><rect x="514" y="571" width="12" height="24" rx="3" fill="#a8181e" stroke="#3a0507" stroke-width="2.5"/><rect x="444" y="543" width="16" height="16" rx="3" fill="#a8181e" stroke="#3a0507" stroke-width="2.5"/><rect x="449" y="545" width="6" height="5" fill="#e0505a"/><rect x="449" y="552" width="6" height="5" fill="#e0505a"/><rect x="492" y="539" width="28" height="16" rx="3" fill="#a8181e" stroke="#3a0507" stroke-width="2.5"/><rect x="494" y="544" width="5" height="6" fill="#e0505a"/><rect x="513" y="544" width="5" height="6" fill="#e0505a"/><rect x="519" y="528" width="16" height="26" rx="3" fill="#a8181e" stroke="#3a0507" stroke-width="2.5"/><rect x="524" y="530" width="6" height="5" fill="#e0505a"/><rect x="524" y="547" width="6" height="5" fill="#e0505a"/><rect x="461" y="562" width="20" height="16" rx="3" fill="#a8181e" stroke="#3a0507" stroke-width="2.5"/><rect x="463" y="567" width="5" height="6" fill="#e0505a"/><rect x="474" y="567" width="5" height="6" fill="#e0505a"/><rect x="441" y="515" width="20" height="26" rx="3" fill="#a8181e" stroke="#3a0507" stroke-width="2.5"/><rect x="518" y="574" width="26" height="20" rx="3" fill="#a8181e" stroke="#3a0507" stroke-width="2.5"/><rect x="451" y="528" width="16" height="28" rx="3" fill="#a8181e" stroke="#3a0507" stroke-width="2.5"/><rect x="456" y="530" width="6" height="5" fill="#e0505a"/><rect x="456" y="549" width="6" height="5" fill="#e0505a"/><circle cx="452" cy="547" r="3.2" fill="#ffb45a"/><rect x="491" y="495" width="26" height="24" rx="3" fill="#a8181e" stroke="#3a0507" stroke-width="2.5"/><rect x="493" y="504" width="5" height="6" fill="#e0505a"/><rect x="510" y="504" width="5" height="6" fill="#e0505a"/><circle cx="514" cy="515" r="3.2" fill="#ffb45a"/><rect x="457" y="455" width="20" height="20" rx="3" fill="#a8181e" stroke="#3a0507" stroke-width="2.5"/><rect x="464" y="457" width="6" height="5" fill="#e0505a"/><rect x="464" y="468" width="6" height="5" fill="#e0505a"/><rect x="432" y="459" width="16" height="28" rx="3" fill="#a8181e" stroke="#3a0507" stroke-width="2.5"/><rect x="437" y="461" width="6" height="5" fill="#e0505a"/><rect x="437" y="480" width="6" height="5" fill="#e0505a"/><rect x="517" y="492" width="24" height="20" rx="3" fill="#a8181e" stroke="#3a0507" stroke-width="2.5"/><rect x="519" y="499" width="5" height="6" fill="#e0505a"/><rect x="534" y="499" width="5" height="6" fill="#e0505a"/><circle cx="538" cy="504" r="3.2" fill="#ffb45a"/><rect x="506" y="487" width="28" height="16" rx="3" fill="#a8181e" stroke="#3a0507" stroke-width="2.5"/><rect x="508" y="492" width="5" height="6" fill="#e0505a"/><rect x="527" y="492" width="5" height="6" fill="#e0505a"/><rect x="498" y="548" width="16" height="20" rx="3" fill="#a8181e" stroke="#3a0507" stroke-width="2.5"/><rect x="503" y="550" width="6" height="5" fill="#e0505a"/><rect x="503" y="561" width="6" height="5" fill="#e0505a"/><rect x="575" y="500" width="255" height="65" rx="14" fill="#3c0507" opacity="0.54"/><rect x="587" y="502" width="49" height="39" rx="6" fill="#2a0304" opacity="0.6"/><rect x="716" y="510" width="45" height="33" rx="6" fill="#2a0304" opacity="0.6"/><rect x="701" y="506" width="38" height="30" rx="6" fill="#2a0304" opacity="0.6"/><rect x="736" y="541" width="33" height="24" rx="6" fill="#2a0304" opacity="0.6"/><rect x="667" y="510" width="48" height="28" rx="6" fill="#2a0304" opacity="0.6"/><rect x="684" y="516" width="21" height="15" rx="6" fill="#2a0304" opacity="0.6"/><rect x="693" y="516" width="31" height="37" rx="6" fill="#2a0304" opacity="0.6"/><rect x="649" y="507" width="27" height="15" rx="6" fill="#2a0304" opacity="0.6"/><rect x="723" y="505" width="35" height="40" rx="6" fill="#2a0304" opacity="0.6"/><rect x="728" y="527" width="47" height="35" rx="6" fill="#2a0304" opacity="0.6"/><rect x="650" y="530" width="43" height="35" rx="6" fill="#2a0304" opacity="0.6"/><rect x="730" y="533" width="49" height="18" rx="6" fill="#2a0304" opacity="0.6"/><rect x="683" y="534" width="34" height="28" rx="6" fill="#2a0304" opacity="0.6"/><rect x="682" y="522" width="24" height="26" rx="3" fill="#a8181e" stroke="#3a0507" stroke-width="2.5"/><rect x="759" y="540" width="28" height="16" rx="3" fill="#a8181e" stroke="#3a0507" stroke-width="2.5"/><rect x="762" y="529" width="20" height="28" rx="3" fill="#a8181e" stroke="#3a0507" stroke-width="2.5"/><rect x="769" y="531" width="6" height="5" fill="#e0505a"/><rect x="769" y="550" width="6" height="5" fill="#e0505a"/><rect x="686" y="517" width="28" height="20" rx="3" fill="#a8181e" stroke="#3a0507" stroke-width="2.5"/><rect x="688" y="524" width="5" height="6" fill="#e0505a"/><rect x="707" y="524" width="5" height="6" fill="#e0505a"/><rect x="620" y="538" width="24" height="12" rx="3" fill="#a8181e" stroke="#3a0507" stroke-width="2.5"/><rect x="622" y="541" width="5" height="6" fill="#e0505a"/><rect x="637" y="541" width="5" height="6" fill="#e0505a"/><rect x="785" y="536" width="24" height="16" rx="3" fill="#a8181e" stroke="#3a0507" stroke-width="2.5"/><rect x="787" y="541" width="5" height="6" fill="#e0505a"/><rect x="802" y="541" width="5" height="6" fill="#e0505a"/><circle cx="805" cy="551" r="3.2" fill="#ffb45a"/><rect x="755" y="504" width="16" height="26" rx="3" fill="#a8181e" stroke="#3a0507" stroke-width="2.5"/><rect x="760" y="506" width="6" height="5" fill="#e0505a"/><rect x="760" y="523" width="6" height="5" fill="#e0505a"/><circle cx="756" cy="507" r="3.2" fill="#ffb45a"/><rect x="797" y="519" width="12" height="16" rx="3" fill="#a8181e" stroke="#3a0507" stroke-width="2.5"/><rect x="800" y="521" width="6" height="5" fill="#e0505a"/><rect x="800" y="528" width="6" height="5" fill="#e0505a"/><rect x="587" y="543" width="12" height="20" rx="3" fill="#a8181e" stroke="#3a0507" stroke-width="2.5"/><rect x="590" y="545" width="6" height="5" fill="#e0505a"/><rect x="590" y="556" width="6" height="5" fill="#e0505a"/><circle cx="591" cy="555" r="3.2" fill="#ffb45a"/><rect x="584" y="522" width="20" height="16" rx="3" fill="#a8181e" stroke="#3a0507" stroke-width="2.5"/><rect x="737" y="519" width="24" height="26" rx="3" fill="#a8181e" stroke="#3a0507" stroke-width="2.5"/><rect x="746" y="521" width="6" height="5" fill="#e0505a"/><rect x="746" y="538" width="6" height="5" fill="#e0505a"/><rect x="765" y="537" width="12" height="24" rx="3" fill="#a8181e" stroke="#3a0507" stroke-width="2.5"/><rect x="768" y="539" width="6" height="5" fill="#e0505a"/><rect x="768" y="554" width="6" height="5" fill="#e0505a"/><rect x="799" y="511" width="20" height="28" rx="3" fill="#a8181e" stroke="#3a0507" stroke-width="2.5"/><rect x="806" y="513" width="6" height="5" fill="#e0505a"/><rect x="806" y="532" width="6" height="5" fill="#e0505a"/><rect x="636" y="508" width="16" height="16" rx="3" fill="#a8181e" stroke="#3a0507" stroke-width="2.5"/><rect x="641" y="510" width="6" height="5" fill="#e0505a"/><rect x="641" y="517" width="6" height="5" fill="#e0505a"/><rect x="631" y="524" width="20" height="12" rx="3" fill="#a8181e" stroke="#3a0507" stroke-width="2.5"/><rect x="633" y="527" width="5" height="6" fill="#e0505a"/><rect x="644" y="527" width="5" height="6" fill="#e0505a"/><rect x="640" y="533" width="24" height="20" rx="3" fill="#a8181e" stroke="#3a0507" stroke-width="2.5"/><rect x="642" y="540" width="5" height="6" fill="#e0505a"/><rect x="657" y="540" width="5" height="6" fill="#e0505a"/><rect x="597" y="507" width="20" height="12" rx="3" fill="#a8181e" stroke="#3a0507" stroke-width="2.5"/><rect x="599" y="510" width="5" height="6" fill="#e0505a"/><rect x="610" y="510" width="5" height="6" fill="#e0505a"/><rect x="734" y="522" width="16" height="16" rx="3" fill="#a8181e" stroke="#3a0507" stroke-width="2.5"/><rect x="739" y="524" width="6" height="5" fill="#e0505a"/><rect x="739" y="531" width="6" height="5" fill="#e0505a"/><rect x="582" y="526" width="26" height="20" rx="3" fill="#a8181e" stroke="#3a0507" stroke-width="2.5"/><rect x="688" y="503" width="20" height="12" rx="3" fill="#a8181e" stroke="#3a0507" stroke-width="2.5"/><circle cx="695" cy="511" r="3.2" fill="#ffb45a"/><rect x="735" y="506" width="20" height="24" rx="3" fill="#a8181e" stroke="#3a0507" stroke-width="2.5"/><rect x="742" y="508" width="6" height="5" fill="#e0505a"/><rect x="742" y="523" width="6" height="5" fill="#e0505a"/><rect x="720" y="523" width="26" height="16" rx="3" fill="#a8181e" stroke="#3a0507" stroke-width="2.5"/><rect x="648" y="535" width="20" height="16" rx="3" fill="#a8181e" stroke="#3a0507" stroke-width="2.5"/><rect x="650" y="540" width="5" height="6" fill="#e0505a"/><rect x="661" y="540" width="5" height="6" fill="#e0505a"/><rect x="684" y="536" width="20" height="16" rx="3" fill="#a8181e" stroke="#3a0507" stroke-width="2.5"/><rect x="686" y="541" width="5" height="6" fill="#e0505a"/><rect x="697" y="541" width="5" height="6" fill="#e0505a"/><circle cx="686" cy="537" r="3.2" fill="#ffb45a"/><rect x="734" y="503" width="24" height="26" rx="3" fill="#a8181e" stroke="#3a0507" stroke-width="2.5"/><rect x="743" y="505" width="6" height="5" fill="#e0505a"/><rect x="743" y="522" width="6" height="5" fill="#e0505a"/><rect x="683" y="528" width="20" height="28" rx="3" fill="#a8181e" stroke="#3a0507" stroke-width="2.5"/><rect x="690" y="530" width="6" height="5" fill="#e0505a"/><rect x="690" y="549" width="6" height="5" fill="#e0505a"/><rect x="763" y="512" width="28" height="26" rx="3" fill="#a8181e" stroke="#3a0507" stroke-width="2.5"/><rect x="765" y="522" width="5" height="6" fill="#e0505a"/><rect x="784" y="522" width="5" height="6" fill="#e0505a"/><rect x="736" y="505" width="24" height="26" rx="3" fill="#a8181e" stroke="#3a0507" stroke-width="2.5"/><rect x="703" y="538" width="20" height="16" rx="3" fill="#a8181e" stroke="#3a0507" stroke-width="2.5"/><rect x="669" y="534" width="16" height="16" rx="3" fill="#a8181e" stroke="#3a0507" stroke-width="2.5"/><circle cx="672" cy="538" r="3.2" fill="#ffb45a"/><rect x="693" y="531" width="26" height="20" rx="3" fill="#a8181e" stroke="#3a0507" stroke-width="2.5"/><rect x="695" y="538" width="5" height="6" fill="#e0505a"/><rect x="712" y="538" width="5" height="6" fill="#e0505a"/><rect x="811" y="528" width="16" height="28" rx="3" fill="#a8181e" stroke="#3a0507" stroke-width="2.5"/><rect x="816" y="530" width="6" height="5" fill="#e0505a"/><rect x="816" y="549" width="6" height="5" fill="#e0505a"/><circle cx="818" cy="529" r="3.2" fill="#ffb45a"/><rect x="590" y="511" width="16" height="28" rx="3" fill="#a8181e" stroke="#3a0507" stroke-width="2.5"/><rect x="595" y="513" width="6" height="5" fill="#e0505a"/><rect x="595" y="532" width="6" height="5" fill="#e0505a"/><rect x="700" y="526" width="26" height="28" rx="3" fill="#a8181e" stroke="#3a0507" stroke-width="2.5"/><circle cx="722" cy="546" r="3.2" fill="#ffb45a"/><rect x="665" y="533" width="20" height="26" rx="3" fill="#a8181e" stroke="#3a0507" stroke-width="2.5"/><circle cx="676" cy="556" r="3.2" fill="#ffb45a"/><rect x="581" y="544" width="28" height="16" rx="3" fill="#a8181e" stroke="#3a0507" stroke-width="2.5"/><rect x="710" y="535" width="12" height="20" rx="3" fill="#a8181e" stroke="#3a0507" stroke-width="2.5"/><rect x="713" y="537" width="6" height="5" fill="#e0505a"/><rect x="713" y="548" width="6" height="5" fill="#e0505a"/><rect x="609" y="523" width="20" height="26" rx="3" fill="#a8181e" stroke="#3a0507" stroke-width="2.5"/><rect x="616" y="525" width="6" height="5" fill="#e0505a"/><rect x="616" y="542" width="6" height="5" fill="#e0505a"/><circle cx="620" cy="536" r="3.2" fill="#ffb45a"/><rect x="793" y="524" width="12" height="20" rx="3" fill="#a8181e" stroke="#3a0507" stroke-width="2.5"/><rect x="796" y="526" width="6" height="5" fill="#e0505a"/><rect x="796" y="537" width="6" height="5" fill="#e0505a"/><circle cx="801" cy="542" r="3.2" fill="#ffb45a"/><rect x="690" y="503" width="26" height="24" rx="3" fill="#a8181e" stroke="#3a0507" stroke-width="2.5"/><rect x="692" y="512" width="5" height="6" fill="#e0505a"/><rect x="709" y="512" width="5" height="6" fill="#e0505a"/><rect x="640" y="560" width="120" height="50" rx="14" fill="#3c0507" opacity="0.54"/><rect x="674" y="573" width="27" height="28" rx="6" fill="#2a0304" opacity="0.6"/><rect x="641" y="589" width="39" height="16" rx="6" fill="#2a0304" opacity="0.6"/><rect x="732" y="574" width="28" height="20" rx="6" fill="#2a0304" opacity="0.6"/><rect x="688" y="564" width="45" height="26" rx="6" fill="#2a0304" opacity="0.6"/><rect x="706" y="563" width="20" height="26" rx="3" fill="#a8181e" stroke="#3a0507" stroke-width="2.5"/><rect x="667" y="582" width="24" height="12" rx="3" fill="#a8181e" stroke="#3a0507" stroke-width="2.5"/><rect x="693" y="581" width="28" height="26" rx="3" fill="#a8181e" stroke="#3a0507" stroke-width="2.5"/><rect x="695" y="591" width="5" height="6" fill="#e0505a"/><rect x="714" y="591" width="5" height="6" fill="#e0505a"/><rect x="668" y="582" width="16" height="16" rx="3" fill="#a8181e" stroke="#3a0507" stroke-width="2.5"/><rect x="689" y="570" width="28" height="26" rx="3" fill="#a8181e" stroke="#3a0507" stroke-width="2.5"/><rect x="691" y="580" width="5" height="6" fill="#e0505a"/><rect x="710" y="580" width="5" height="6" fill="#e0505a"/><circle cx="715" cy="571" r="3.2" fill="#ffb45a"/><rect x="672" y="578" width="24" height="16" rx="3" fill="#a8181e" stroke="#3a0507" stroke-width="2.5"/><rect x="674" y="583" width="5" height="6" fill="#e0505a"/><rect x="689" y="583" width="5" height="6" fill="#e0505a"/><circle cx="688" cy="588" r="3.2" fill="#ffb45a"/><rect x="688" y="576" width="20" height="24" rx="3" fill="#a8181e" stroke="#3a0507" stroke-width="2.5"/><rect x="695" y="578" width="6" height="5" fill="#e0505a"/><rect x="695" y="593" width="6" height="5" fill="#e0505a"/><circle cx="690" cy="598" r="3.2" fill="#ffb45a"/><rect x="682" y="566" width="20" height="16" rx="3" fill="#a8181e" stroke="#3a0507" stroke-width="2.5"/><rect x="684" y="571" width="5" height="6" fill="#e0505a"/><rect x="695" y="571" width="5" height="6" fill="#e0505a"/><rect x="723" y="569" width="28" height="20" rx="3" fill="#a8181e" stroke="#3a0507" stroke-width="2.5"/><rect x="725" y="576" width="5" height="6" fill="#e0505a"/><rect x="744" y="576" width="5" height="6" fill="#e0505a"/><circle cx="723" cy="571" r="3.2" fill="#ffb45a"/><rect x="671" y="570" width="16" height="16" rx="3" fill="#a8181e" stroke="#3a0507" stroke-width="2.5"/><rect x="676" y="572" width="6" height="5" fill="#e0505a"/><rect x="676" y="579" width="6" height="5" fill="#e0505a"/><rect x="655" y="581" width="20" height="24" rx="3" fill="#a8181e" stroke="#3a0507" stroke-width="2.5"/><rect x="662" y="583" width="6" height="5" fill="#e0505a"/><rect x="662" y="598" width="6" height="5" fill="#e0505a"/><rect x="725" y="579" width="28" height="12" rx="3" fill="#a8181e" stroke="#3a0507" stroke-width="2.5"/><rect x="727" y="582" width="5" height="6" fill="#e0505a"/><rect x="746" y="582" width="5" height="6" fill="#e0505a"/><rect x="667" y="570" width="20" height="20" rx="3" fill="#a8181e" stroke="#3a0507" stroke-width="2.5"/><rect x="674" y="572" width="6" height="5" fill="#e0505a"/><rect x="674" y="583" width="6" height="5" fill="#e0505a"/><rect x="703" y="565" width="12" height="24" rx="3" fill="#a8181e" stroke="#3a0507" stroke-width="2.5"/><rect x="706" y="567" width="6" height="5" fill="#e0505a"/><rect x="706" y="582" width="6" height="5" fill="#e0505a"/><circle cx="708" cy="587" r="3.2" fill="#ffb45a"/><rect x="760" y="490" width="145" height="70" rx="14" fill="#3c0507" opacity="0.54"/><rect x="807" y="498" width="27" height="17" rx="6" fill="#2a0304" opacity="0.6"/><rect x="873" y="526" width="22" height="24" rx="6" fill="#2a0304" opacity="0.6"/><rect x="815" y="504" width="43" height="20" rx="6" fill="#2a0304" opacity="0.6"/><rect x="786" y="539" width="25" height="17" rx="6" fill="#2a0304" opacity="0.6"/><rect x="840" y="497" width="45" height="35" rx="6" fill="#2a0304" opacity="0.6"/><rect x="845" y="524" width="29" height="30" rx="6" fill="#2a0304" opacity="0.6"/><rect x="801" y="513" width="24" height="12" rx="3" fill="#a8181e" stroke="#3a0507" stroke-width="2.5"/><rect x="803" y="516" width="5" height="6" fill="#e0505a"/><rect x="818" y="516" width="5" height="6" fill="#e0505a"/><circle cx="808" cy="524" r="3.2" fill="#ffb45a"/><rect x="829" y="540" width="24" height="12" rx="3" fill="#a8181e" stroke="#3a0507" stroke-width="2.5"/><rect x="811" y="498" width="28" height="26" rx="3" fill="#a8181e" stroke="#3a0507" stroke-width="2.5"/><rect x="813" y="508" width="5" height="6" fill="#e0505a"/><rect x="832" y="508" width="5" height="6" fill="#e0505a"/><rect x="843" y="506" width="12" height="16" rx="3" fill="#a8181e" stroke="#3a0507" stroke-width="2.5"/><rect x="846" y="508" width="6" height="5" fill="#e0505a"/><rect x="846" y="515" width="6" height="5" fill="#e0505a"/><rect x="785" y="513" width="24" height="16" rx="3" fill="#a8181e" stroke="#3a0507" stroke-width="2.5"/><rect x="787" y="518" width="5" height="6" fill="#e0505a"/><rect x="802" y="518" width="5" height="6" fill="#e0505a"/><rect x="855" y="505" width="16" height="24" rx="3" fill="#a8181e" stroke="#3a0507" stroke-width="2.5"/><rect x="860" y="507" width="6" height="5" fill="#e0505a"/><rect x="860" y="522" width="6" height="5" fill="#e0505a"/><rect x="797" y="523" width="16" height="12" rx="3" fill="#a8181e" stroke="#3a0507" stroke-width="2.5"/><circle cx="812" cy="527" r="3.2" fill="#ffb45a"/><rect x="773" y="540" width="12" height="16" rx="3" fill="#a8181e" stroke="#3a0507" stroke-width="2.5"/><rect x="776" y="542" width="6" height="5" fill="#e0505a"/><rect x="776" y="549" width="6" height="5" fill="#e0505a"/><rect x="803" y="498" width="12" height="24" rx="3" fill="#a8181e" stroke="#3a0507" stroke-width="2.5"/><rect x="806" y="500" width="6" height="5" fill="#e0505a"/><rect x="806" y="515" width="6" height="5" fill="#e0505a"/><rect x="874" y="505" width="16" height="20" rx="3" fill="#a8181e" stroke="#3a0507" stroke-width="2.5"/><rect x="879" y="507" width="6" height="5" fill="#e0505a"/><rect x="879" y="518" width="6" height="5" fill="#e0505a"/><rect x="806" y="513" width="20" height="20" rx="3" fill="#a8181e" stroke="#3a0507" stroke-width="2.5"/><rect x="813" y="515" width="6" height="5" fill="#e0505a"/><rect x="813" y="526" width="6" height="5" fill="#e0505a"/><rect x="789" y="530" width="12" height="24" rx="3" fill="#a8181e" stroke="#3a0507" stroke-width="2.5"/><rect x="792" y="532" width="6" height="5" fill="#e0505a"/><rect x="792" y="547" width="6" height="5" fill="#e0505a"/><circle cx="798" cy="545" r="3.2" fill="#ffb45a"/><rect x="833" y="509" width="20" height="12" rx="3" fill="#a8181e" stroke="#3a0507" stroke-width="2.5"/><rect x="835" y="512" width="5" height="6" fill="#e0505a"/><rect x="846" y="512" width="5" height="6" fill="#e0505a"/><rect x="785" y="500" width="24" height="26" rx="3" fill="#a8181e" stroke="#3a0507" stroke-width="2.5"/><rect x="794" y="502" width="6" height="5" fill="#e0505a"/><rect x="794" y="519" width="6" height="5" fill="#e0505a"/><rect x="836" y="512" width="26" height="20" rx="3" fill="#a8181e" stroke="#3a0507" stroke-width="2.5"/><rect x="838" y="519" width="5" height="6" fill="#e0505a"/><rect x="855" y="519" width="5" height="6" fill="#e0505a"/><circle cx="837" cy="517" r="3.2" fill="#ffb45a"/><rect x="795" y="507" width="16" height="20" rx="3" fill="#a8181e" stroke="#3a0507" stroke-width="2.5"/><circle cx="797" cy="518" r="3.2" fill="#ffb45a"/><rect x="811" y="538" width="26" height="16" rx="3" fill="#a8181e" stroke="#3a0507" stroke-width="2.5"/><rect x="813" y="543" width="5" height="6" fill="#e0505a"/><rect x="830" y="543" width="5" height="6" fill="#e0505a"/><rect x="819" y="533" width="20" height="20" rx="3" fill="#a8181e" stroke="#3a0507" stroke-width="2.5"/><rect x="826" y="535" width="6" height="5" fill="#e0505a"/><rect x="826" y="546" width="6" height="5" fill="#e0505a"/><rect x="1100" y="455" width="100" height="145" rx="14" fill="#3c0507" opacity="0.54"/><rect x="1149" y="560" width="39" height="33" rx="6" fill="#2a0304" opacity="0.6"/><rect x="1102" y="505" width="42" height="38" rx="6" fill="#2a0304" opacity="0.6"/><rect x="1147" y="468" width="48" height="31" rx="6" fill="#2a0304" opacity="0.6"/><rect x="1136" y="527" width="34" height="20" rx="6" fill="#2a0304" opacity="0.6"/><rect x="1122" y="570" width="20" height="20" rx="6" fill="#2a0304" opacity="0.6"/><rect x="1145" y="473" width="43" height="18" rx="6" fill="#2a0304" opacity="0.6"/><rect x="1100" y="566" width="39" height="17" rx="6" fill="#2a0304" opacity="0.6"/><rect x="1172" y="564" width="26" height="20" rx="6" fill="#2a0304" opacity="0.6"/><rect x="1141" y="539" width="24" height="20" rx="3" fill="#a8181e" stroke="#3a0507" stroke-width="2.5"/><rect x="1143" y="546" width="5" height="6" fill="#e0505a"/><rect x="1158" y="546" width="5" height="6" fill="#e0505a"/><rect x="1127" y="477" width="26" height="20" rx="3" fill="#a8181e" stroke="#3a0507" stroke-width="2.5"/><rect x="1129" y="484" width="5" height="6" fill="#e0505a"/><rect x="1146" y="484" width="5" height="6" fill="#e0505a"/><circle cx="1135" cy="489" r="3.2" fill="#ffb45a"/><rect x="1129" y="495" width="20" height="16" rx="3" fill="#a8181e" stroke="#3a0507" stroke-width="2.5"/><rect x="1131" y="500" width="5" height="6" fill="#e0505a"/><rect x="1142" y="500" width="5" height="6" fill="#e0505a"/><circle cx="1138" cy="498" r="3.2" fill="#ffb45a"/><rect x="1128" y="509" width="24" height="12" rx="3" fill="#a8181e" stroke="#3a0507" stroke-width="2.5"/><rect x="1130" y="512" width="5" height="6" fill="#e0505a"/><rect x="1145" y="512" width="5" height="6" fill="#e0505a"/><rect x="1161" y="527" width="12" height="28" rx="3" fill="#a8181e" stroke="#3a0507" stroke-width="2.5"/><circle cx="1164" cy="550" r="3.2" fill="#ffb45a"/><rect x="1163" y="487" width="28" height="20" rx="3" fill="#a8181e" stroke="#3a0507" stroke-width="2.5"/><rect x="1165" y="494" width="5" height="6" fill="#e0505a"/><rect x="1184" y="494" width="5" height="6" fill="#e0505a"/><rect x="1174" y="468" width="20" height="24" rx="3" fill="#a8181e" stroke="#3a0507" stroke-width="2.5"/><rect x="1181" y="470" width="6" height="5" fill="#e0505a"/><rect x="1181" y="485" width="6" height="5" fill="#e0505a"/><rect x="1155" y="468" width="20" height="20" rx="3" fill="#a8181e" stroke="#3a0507" stroke-width="2.5"/><rect x="1162" y="470" width="6" height="5" fill="#e0505a"/><rect x="1162" y="481" width="6" height="5" fill="#e0505a"/><circle cx="1171" cy="481" r="3.2" fill="#ffb45a"/><rect x="1105" y="572" width="26" height="24" rx="3" fill="#a8181e" stroke="#3a0507" stroke-width="2.5"/><rect x="1107" y="581" width="5" height="6" fill="#e0505a"/><rect x="1124" y="581" width="5" height="6" fill="#e0505a"/><rect x="1137" y="508" width="20" height="20" rx="3" fill="#a8181e" stroke="#3a0507" stroke-width="2.5"/><rect x="1144" y="510" width="6" height="5" fill="#e0505a"/><rect x="1144" y="521" width="6" height="5" fill="#e0505a"/><rect x="1116" y="580" width="26" height="16" rx="3" fill="#a8181e" stroke="#3a0507" stroke-width="2.5"/><rect x="1118" y="585" width="5" height="6" fill="#e0505a"/><rect x="1135" y="585" width="5" height="6" fill="#e0505a"/><circle cx="1140" cy="586" r="3.2" fill="#ffb45a"/><rect x="1106" y="508" width="26" height="20" rx="3" fill="#a8181e" stroke="#3a0507" stroke-width="2.5"/><rect x="1108" y="515" width="5" height="6" fill="#e0505a"/><rect x="1125" y="515" width="5" height="6" fill="#e0505a"/><rect x="1154" y="494" width="20" height="26" rx="3" fill="#a8181e" stroke="#3a0507" stroke-width="2.5"/><rect x="1161" y="496" width="6" height="5" fill="#e0505a"/><rect x="1161" y="513" width="6" height="5" fill="#e0505a"/><rect x="1185" y="573" width="12" height="20" rx="3" fill="#a8181e" stroke="#3a0507" stroke-width="2.5"/><rect x="1188" y="575" width="6" height="5" fill="#e0505a"/><rect x="1188" y="586" width="6" height="5" fill="#e0505a"/><rect x="1124" y="548" width="16" height="24" rx="3" fill="#a8181e" stroke="#3a0507" stroke-width="2.5"/><rect x="1128" y="548" width="24" height="12" rx="3" fill="#a8181e" stroke="#3a0507" stroke-width="2.5"/><rect x="1130" y="551" width="5" height="6" fill="#e0505a"/><rect x="1145" y="551" width="5" height="6" fill="#e0505a"/><rect x="1144" y="458" width="24" height="20" rx="3" fill="#a8181e" stroke="#3a0507" stroke-width="2.5"/><rect x="1146" y="465" width="5" height="6" fill="#e0505a"/><rect x="1161" y="465" width="5" height="6" fill="#e0505a"/><circle cx="1160" cy="468" r="3.2" fill="#ffb45a"/><rect x="1128" y="567" width="20" height="24" rx="3" fill="#a8181e" stroke="#3a0507" stroke-width="2.5"/><rect x="1135" y="569" width="6" height="5" fill="#e0505a"/><rect x="1135" y="584" width="6" height="5" fill="#e0505a"/><rect x="1175" y="517" width="20" height="26" rx="3" fill="#a8181e" stroke="#3a0507" stroke-width="2.5"/><rect x="1182" y="519" width="6" height="5" fill="#e0505a"/><rect x="1182" y="536" width="6" height="5" fill="#e0505a"/><circle cx="1191" cy="541" r="3.2" fill="#ffb45a"/><rect x="1151" y="545" width="28" height="20" rx="3" fill="#a8181e" stroke="#3a0507" stroke-width="2.5"/><rect x="1153" y="552" width="5" height="6" fill="#e0505a"/><rect x="1172" y="552" width="5" height="6" fill="#e0505a"/><rect x="1155" y="534" width="28" height="20" rx="3" fill="#a8181e" stroke="#3a0507" stroke-width="2.5"/><circle cx="1159" cy="543" r="3.2" fill="#ffb45a"/><rect x="1116" y="547" width="20" height="16" rx="3" fill="#a8181e" stroke="#3a0507" stroke-width="2.5"/><rect x="1110" y="582" width="20" height="12" rx="3" fill="#a8181e" stroke="#3a0507" stroke-width="2.5"/><rect x="1112" y="585" width="5" height="6" fill="#e0505a"/><rect x="1123" y="585" width="5" height="6" fill="#e0505a"/><rect x="1148" y="465" width="26" height="28" rx="3" fill="#a8181e" stroke="#3a0507" stroke-width="2.5"/><rect x="1158" y="467" width="6" height="5" fill="#e0505a"/><rect x="1158" y="486" width="6" height="5" fill="#e0505a"/><rect x="1182" y="557" width="12" height="24" rx="3" fill="#a8181e" stroke="#3a0507" stroke-width="2.5"/><rect x="1124" y="495" width="24" height="12" rx="3" fill="#a8181e" stroke="#3a0507" stroke-width="2.5"/><rect x="1126" y="498" width="5" height="6" fill="#e0505a"/><rect x="1141" y="498" width="5" height="6" fill="#e0505a"/><rect x="1255" y="500" width="105" height="165" rx="14" fill="#3c0507" opacity="0.54"/><rect x="1285" y="534" width="44" height="35" rx="6" fill="#2a0304" opacity="0.6"/><rect x="1295" y="602" width="20" height="31" rx="6" fill="#2a0304" opacity="0.6"/><rect x="1275" y="605" width="31" height="34" rx="6" fill="#2a0304" opacity="0.6"/><rect x="1289" y="596" width="42" height="25" rx="6" fill="#2a0304" opacity="0.6"/><rect x="1319" y="536" width="26" height="28" rx="6" fill="#2a0304" opacity="0.6"/><rect x="1306" y="545" width="44" height="32" rx="6" fill="#2a0304" opacity="0.6"/><rect x="1321" y="558" width="23" height="35" rx="6" fill="#2a0304" opacity="0.6"/><rect x="1307" y="542" width="23" height="19" rx="6" fill="#2a0304" opacity="0.6"/><rect x="1266" y="589" width="49" height="29" rx="6" fill="#2a0304" opacity="0.6"/><rect x="1327" y="571" width="24" height="26" rx="3" fill="#a8181e" stroke="#3a0507" stroke-width="2.5"/><rect x="1336" y="573" width="6" height="5" fill="#e0505a"/><rect x="1336" y="590" width="6" height="5" fill="#e0505a"/><rect x="1292" y="554" width="20" height="16" rx="3" fill="#a8181e" stroke="#3a0507" stroke-width="2.5"/><rect x="1294" y="559" width="5" height="6" fill="#e0505a"/><rect x="1305" y="559" width="5" height="6" fill="#e0505a"/><rect x="1279" y="609" width="20" height="12" rx="3" fill="#a8181e" stroke="#3a0507" stroke-width="2.5"/><rect x="1281" y="612" width="5" height="6" fill="#e0505a"/><rect x="1292" y="612" width="5" height="6" fill="#e0505a"/><circle cx="1291" cy="619" r="3.2" fill="#ffb45a"/><rect x="1258" y="550" width="16" height="16" rx="3" fill="#a8181e" stroke="#3a0507" stroke-width="2.5"/><rect x="1289" y="519" width="20" height="24" rx="3" fill="#a8181e" stroke="#3a0507" stroke-width="2.5"/><circle cx="1297" cy="537" r="3.2" fill="#ffb45a"/><rect x="1275" y="648" width="28" height="12" rx="3" fill="#a8181e" stroke="#3a0507" stroke-width="2.5"/><rect x="1285" y="512" width="28" height="26" rx="3" fill="#a8181e" stroke="#3a0507" stroke-width="2.5"/><rect x="1287" y="522" width="5" height="6" fill="#e0505a"/><rect x="1306" y="522" width="5" height="6" fill="#e0505a"/><circle cx="1308" cy="537" r="3.2" fill="#ffb45a"/><rect x="1316" y="638" width="20" height="20" rx="3" fill="#a8181e" stroke="#3a0507" stroke-width="2.5"/><rect x="1323" y="640" width="6" height="5" fill="#e0505a"/><rect x="1323" y="651" width="6" height="5" fill="#e0505a"/><rect x="1298" y="547" width="20" height="24" rx="3" fill="#a8181e" stroke="#3a0507" stroke-width="2.5"/><rect x="1305" y="549" width="6" height="5" fill="#e0505a"/><rect x="1305" y="564" width="6" height="5" fill="#e0505a"/><rect x="1293" y="566" width="26" height="28" rx="3" fill="#a8181e" stroke="#3a0507" stroke-width="2.5"/><rect x="1303" y="568" width="6" height="5" fill="#e0505a"/><rect x="1303" y="587" width="6" height="5" fill="#e0505a"/><rect x="1306" y="635" width="26" height="24" rx="3" fill="#a8181e" stroke="#3a0507" stroke-width="2.5"/><rect x="1332" y="605" width="24" height="20" rx="3" fill="#a8181e" stroke="#3a0507" stroke-width="2.5"/><rect x="1334" y="612" width="5" height="6" fill="#e0505a"/><rect x="1349" y="612" width="5" height="6" fill="#e0505a"/><rect x="1273" y="584" width="16" height="26" rx="3" fill="#a8181e" stroke="#3a0507" stroke-width="2.5"/><rect x="1278" y="586" width="6" height="5" fill="#e0505a"/><rect x="1278" y="603" width="6" height="5" fill="#e0505a"/><rect x="1295" y="585" width="24" height="20" rx="3" fill="#a8181e" stroke="#3a0507" stroke-width="2.5"/><circle cx="1302" cy="585" r="3.2" fill="#ffb45a"/><rect x="1266" y="550" width="12" height="28" rx="3" fill="#a8181e" stroke="#3a0507" stroke-width="2.5"/><rect x="1269" y="552" width="6" height="5" fill="#e0505a"/><rect x="1269" y="571" width="6" height="5" fill="#e0505a"/><rect x="1314" y="600" width="16" height="24" rx="3" fill="#a8181e" stroke="#3a0507" stroke-width="2.5"/><rect x="1319" y="602" width="6" height="5" fill="#e0505a"/><rect x="1319" y="617" width="6" height="5" fill="#e0505a"/><rect x="1268" y="626" width="16" height="12" rx="3" fill="#a8181e" stroke="#3a0507" stroke-width="2.5"/><rect x="1270" y="629" width="5" height="6" fill="#e0505a"/><rect x="1277" y="629" width="5" height="6" fill="#e0505a"/><rect x="1259" y="589" width="26" height="24" rx="3" fill="#a8181e" stroke="#3a0507" stroke-width="2.5"/><circle cx="1283" cy="601" r="3.2" fill="#ffb45a"/><rect x="1292" y="580" width="28" height="26" rx="3" fill="#a8181e" stroke="#3a0507" stroke-width="2.5"/><circle cx="1302" cy="590" r="3.2" fill="#ffb45a"/><rect x="1280" y="543" width="16" height="12" rx="3" fill="#a8181e" stroke="#3a0507" stroke-width="2.5"/><rect x="1282" y="546" width="5" height="6" fill="#e0505a"/><rect x="1289" y="546" width="5" height="6" fill="#e0505a"/><rect x="1276" y="592" width="24" height="12" rx="3" fill="#a8181e" stroke="#3a0507" stroke-width="2.5"/><rect x="1278" y="595" width="5" height="6" fill="#e0505a"/><rect x="1293" y="595" width="5" height="6" fill="#e0505a"/><rect x="1261" y="642" width="20" height="20" rx="3" fill="#a8181e" stroke="#3a0507" stroke-width="2.5"/><rect x="1269" y="597" width="28" height="20" rx="3" fill="#a8181e" stroke="#3a0507" stroke-width="2.5"/><rect x="1271" y="604" width="5" height="6" fill="#e0505a"/><rect x="1290" y="604" width="5" height="6" fill="#e0505a"/><circle cx="1289" cy="610" r="3.2" fill="#ffb45a"/><rect x="1344" y="528" width="12" height="20" rx="3" fill="#a8181e" stroke="#3a0507" stroke-width="2.5"/><circle cx="1353" cy="538" r="3.2" fill="#ffb45a"/><rect x="1308" y="606" width="28" height="16" rx="3" fill="#a8181e" stroke="#3a0507" stroke-width="2.5"/><rect x="1310" y="611" width="5" height="6" fill="#e0505a"/><rect x="1329" y="611" width="5" height="6" fill="#e0505a"/><rect x="1257" y="619" width="24" height="16" rx="3" fill="#a8181e" stroke="#3a0507" stroke-width="2.5"/><rect x="1259" y="624" width="5" height="6" fill="#e0505a"/><rect x="1274" y="624" width="5" height="6" fill="#e0505a"/><rect x="1320" y="573" width="26" height="28" rx="3" fill="#a8181e" stroke="#3a0507" stroke-width="2.5"/><circle cx="1326" cy="588" r="3.2" fill="#ffb45a"/><rect x="1332" y="525" width="24" height="20" rx="3" fill="#a8181e" stroke="#3a0507" stroke-width="2.5"/><rect x="1334" y="532" width="5" height="6" fill="#e0505a"/><rect x="1349" y="532" width="5" height="6" fill="#e0505a"/><rect x="1285" y="660" width="155" height="60" rx="14" fill="#3c0507" opacity="0.54"/><rect x="1367" y="663" width="30" height="18" rx="6" fill="#2a0304" opacity="0.6"/><rect x="1292" y="679" width="36" height="24" rx="6" fill="#2a0304" opacity="0.6"/><rect x="1294" y="663" width="21" height="25" rx="6" fill="#2a0304" opacity="0.6"/><rect x="1300" y="665" width="33" height="35" rx="6" fill="#2a0304" opacity="0.6"/><rect x="1315" y="684" width="26" height="16" rx="3" fill="#a8181e" stroke="#3a0507" stroke-width="2.5"/><rect x="1317" y="689" width="5" height="6" fill="#e0505a"/><rect x="1334" y="689" width="5" height="6" fill="#e0505a"/><rect x="1379" y="666" width="16" height="20" rx="3" fill="#a8181e" stroke="#3a0507" stroke-width="2.5"/><rect x="1384" y="668" width="6" height="5" fill="#e0505a"/><rect x="1384" y="679" width="6" height="5" fill="#e0505a"/><circle cx="1381" cy="680" r="3.2" fill="#ffb45a"/><rect x="1359" y="693" width="16" height="16" rx="3" fill="#a8181e" stroke="#3a0507" stroke-width="2.5"/><rect x="1364" y="695" width="6" height="5" fill="#e0505a"/><rect x="1364" y="702" width="6" height="5" fill="#e0505a"/><rect x="1311" y="687" width="20" height="24" rx="3" fill="#a8181e" stroke="#3a0507" stroke-width="2.5"/><rect x="1318" y="689" width="6" height="5" fill="#e0505a"/><rect x="1318" y="704" width="6" height="5" fill="#e0505a"/><circle cx="1320" cy="695" r="3.2" fill="#ffb45a"/><rect x="1296" y="680" width="28" height="20" rx="3" fill="#a8181e" stroke="#3a0507" stroke-width="2.5"/><rect x="1298" y="687" width="5" height="6" fill="#e0505a"/><rect x="1317" y="687" width="5" height="6" fill="#e0505a"/><circle cx="1322" cy="689" r="3.2" fill="#ffb45a"/><rect x="1333" y="682" width="20" height="16" rx="3" fill="#a8181e" stroke="#3a0507" stroke-width="2.5"/><circle cx="1335" cy="686" r="3.2" fill="#ffb45a"/><rect x="1329" y="687" width="16" height="12" rx="3" fill="#a8181e" stroke="#3a0507" stroke-width="2.5"/><rect x="1331" y="690" width="5" height="6" fill="#e0505a"/><rect x="1338" y="690" width="5" height="6" fill="#e0505a"/><rect x="1347" y="667" width="20" height="28" rx="3" fill="#a8181e" stroke="#3a0507" stroke-width="2.5"/><rect x="1354" y="669" width="6" height="5" fill="#e0505a"/><rect x="1354" y="688" width="6" height="5" fill="#e0505a"/><circle cx="1363" cy="670" r="3.2" fill="#ffb45a"/><rect x="1396" y="665" width="26" height="20" rx="3" fill="#a8181e" stroke="#3a0507" stroke-width="2.5"/><rect x="1398" y="672" width="5" height="6" fill="#e0505a"/><rect x="1415" y="672" width="5" height="6" fill="#e0505a"/><rect x="1323" y="674" width="20" height="26" rx="3" fill="#a8181e" stroke="#3a0507" stroke-width="2.5"/><rect x="1330" y="676" width="6" height="5" fill="#e0505a"/><rect x="1330" y="693" width="6" height="5" fill="#e0505a"/><rect x="1307" y="686" width="16" height="20" rx="3" fill="#a8181e" stroke="#3a0507" stroke-width="2.5"/><rect x="1312" y="688" width="6" height="5" fill="#e0505a"/><rect x="1312" y="699" width="6" height="5" fill="#e0505a"/><rect x="1306" y="681" width="20" height="20" rx="3" fill="#a8181e" stroke="#3a0507" stroke-width="2.5"/><rect x="1313" y="683" width="6" height="5" fill="#e0505a"/><rect x="1313" y="694" width="6" height="5" fill="#e0505a"/><circle cx="1309" cy="698" r="3.2" fill="#ffb45a"/><rect x="1392" y="688" width="16" height="26" rx="3" fill="#a8181e" stroke="#3a0507" stroke-width="2.5"/><rect x="1366" y="664" width="26" height="28" rx="3" fill="#a8181e" stroke="#3a0507" stroke-width="2.5"/><rect x="1376" y="666" width="6" height="5" fill="#e0505a"/><rect x="1376" y="685" width="6" height="5" fill="#e0505a"/><circle cx="1371" cy="673" r="3.2" fill="#ffb45a"/><rect x="995" y="640" width="155" height="120" rx="14" fill="#3c0507" opacity="0.54"/><rect x="1011" y="697" width="27" height="39" rx="6" fill="#2a0304" opacity="0.6"/><rect x="1127" y="661" width="23" height="20" rx="6" fill="#2a0304" opacity="0.6"/><rect x="1047" y="687" width="39" height="26" rx="6" fill="#2a0304" opacity="0.6"/><rect x="1007" y="660" width="26" height="36" rx="6" fill="#2a0304" opacity="0.6"/><rect x="1050" y="729" width="21" height="21" rx="6" fill="#2a0304" opacity="0.6"/><rect x="1027" y="742" width="31" height="17" rx="6" fill="#2a0304" opacity="0.6"/><rect x="1045" y="699" width="22" height="30" rx="6" fill="#2a0304" opacity="0.6"/><rect x="1060" y="707" width="24" height="16" rx="3" fill="#a8181e" stroke="#3a0507" stroke-width="2.5"/><rect x="1002" y="715" width="20" height="12" rx="3" fill="#a8181e" stroke="#3a0507" stroke-width="2.5"/><rect x="1004" y="718" width="5" height="6" fill="#e0505a"/><rect x="1015" y="718" width="5" height="6" fill="#e0505a"/><rect x="1042" y="719" width="26" height="28" rx="3" fill="#a8181e" stroke="#3a0507" stroke-width="2.5"/><rect x="1052" y="721" width="6" height="5" fill="#e0505a"/><rect x="1052" y="740" width="6" height="5" fill="#e0505a"/><rect x="1125" y="723" width="16" height="20" rx="3" fill="#a8181e" stroke="#3a0507" stroke-width="2.5"/><rect x="1130" y="725" width="6" height="5" fill="#e0505a"/><rect x="1130" y="736" width="6" height="5" fill="#e0505a"/><circle cx="1128" cy="734" r="3.2" fill="#ffb45a"/><rect x="1120" y="672" width="16" height="16" rx="3" fill="#a8181e" stroke="#3a0507" stroke-width="2.5"/><rect x="1125" y="674" width="6" height="5" fill="#e0505a"/><rect x="1125" y="681" width="6" height="5" fill="#e0505a"/><circle cx="1124" cy="676" r="3.2" fill="#ffb45a"/><rect x="1011" y="735" width="28" height="16" rx="3" fill="#a8181e" stroke="#3a0507" stroke-width="2.5"/><circle cx="1039" cy="738" r="3.2" fill="#ffb45a"/><rect x="1048" y="729" width="16" height="12" rx="3" fill="#a8181e" stroke="#3a0507" stroke-width="2.5"/><rect x="1050" y="732" width="5" height="6" fill="#e0505a"/><rect x="1057" y="732" width="5" height="6" fill="#e0505a"/><rect x="1050" y="649" width="20" height="26" rx="3" fill="#a8181e" stroke="#3a0507" stroke-width="2.5"/><rect x="1057" y="651" width="6" height="5" fill="#e0505a"/><rect x="1057" y="668" width="6" height="5" fill="#e0505a"/><rect x="1100" y="697" width="16" height="12" rx="3" fill="#a8181e" stroke="#3a0507" stroke-width="2.5"/><rect x="1102" y="700" width="5" height="6" fill="#e0505a"/><rect x="1109" y="700" width="5" height="6" fill="#e0505a"/><rect x="1005" y="644" width="28" height="16" rx="3" fill="#a8181e" stroke="#3a0507" stroke-width="2.5"/><rect x="1007" y="649" width="5" height="6" fill="#e0505a"/><rect x="1026" y="649" width="5" height="6" fill="#e0505a"/><rect x="1123" y="642" width="20" height="16" rx="3" fill="#a8181e" stroke="#3a0507" stroke-width="2.5"/><circle cx="1141" cy="643" r="3.2" fill="#ffb45a"/><rect x="1055" y="654" width="16" height="20" rx="3" fill="#a8181e" stroke="#3a0507" stroke-width="2.5"/><rect x="1060" y="656" width="6" height="5" fill="#e0505a"/><rect x="1060" y="667" width="6" height="5" fill="#e0505a"/><circle cx="1068" cy="669" r="3.2" fill="#ffb45a"/><rect x="1097" y="699" width="12" height="28" rx="3" fill="#a8181e" stroke="#3a0507" stroke-width="2.5"/><rect x="1107" y="683" width="16" height="26" rx="3" fill="#a8181e" stroke="#3a0507" stroke-width="2.5"/><rect x="1112" y="685" width="6" height="5" fill="#e0505a"/><rect x="1112" y="702" width="6" height="5" fill="#e0505a"/><circle cx="1109" cy="688" r="3.2" fill="#ffb45a"/><rect x="1109" y="697" width="16" height="12" rx="3" fill="#a8181e" stroke="#3a0507" stroke-width="2.5"/><rect x="1049" y="692" width="16" height="20" rx="3" fill="#a8181e" stroke="#3a0507" stroke-width="2.5"/><rect x="1054" y="694" width="6" height="5" fill="#e0505a"/><rect x="1054" y="705" width="6" height="5" fill="#e0505a"/><circle cx="1054" cy="693" r="3.2" fill="#ffb45a"/><rect x="1034" y="692" width="26" height="24" rx="3" fill="#a8181e" stroke="#3a0507" stroke-width="2.5"/><rect x="1119" y="717" width="24" height="20" rx="3" fill="#a8181e" stroke="#3a0507" stroke-width="2.5"/><rect x="1121" y="724" width="5" height="6" fill="#e0505a"/><rect x="1136" y="724" width="5" height="6" fill="#e0505a"/><rect x="1117" y="723" width="26" height="20" rx="3" fill="#a8181e" stroke="#3a0507" stroke-width="2.5"/><rect x="1119" y="730" width="5" height="6" fill="#e0505a"/><rect x="1136" y="730" width="5" height="6" fill="#e0505a"/><circle cx="1133" cy="740" r="3.2" fill="#ffb45a"/><rect x="1022" y="721" width="24" height="20" rx="3" fill="#a8181e" stroke="#3a0507" stroke-width="2.5"/><rect x="1024" y="728" width="5" height="6" fill="#e0505a"/><rect x="1039" y="728" width="5" height="6" fill="#e0505a"/><circle cx="1026" cy="731" r="3.2" fill="#ffb45a"/><rect x="1076" y="716" width="24" height="26" rx="3" fill="#a8181e" stroke="#3a0507" stroke-width="2.5"/><circle cx="1096" cy="723" r="3.2" fill="#ffb45a"/><rect x="1127" y="712" width="16" height="28" rx="3" fill="#a8181e" stroke="#3a0507" stroke-width="2.5"/><circle cx="1140" cy="728" r="3.2" fill="#ffb45a"/><rect x="985" y="800" width="165" height="110" rx="14" fill="#3c0507" opacity="0.54"/><rect x="1003" y="875" width="34" height="24" rx="6" fill="#2a0304" opacity="0.6"/><rect x="1115" y="807" width="20" height="27" rx="6" fill="#2a0304" opacity="0.6"/><rect x="990" y="830" width="37" height="30" rx="6" fill="#2a0304" opacity="0.6"/><rect x="1075" y="813" width="41" height="26" rx="6" fill="#2a0304" opacity="0.6"/><rect x="1055" y="886" width="27" height="17" rx="6" fill="#2a0304" opacity="0.6"/><rect x="1034" y="857" width="38" height="34" rx="6" fill="#2a0304" opacity="0.6"/><rect x="1081" y="864" width="23" height="22" rx="6" fill="#2a0304" opacity="0.6"/><rect x="1020" y="820" width="33" height="16" rx="6" fill="#2a0304" opacity="0.6"/><rect x="1014" y="878" width="24" height="20" rx="3" fill="#a8181e" stroke="#3a0507" stroke-width="2.5"/><circle cx="1023" cy="888" r="3.2" fill="#ffb45a"/><rect x="1118" y="812" width="16" height="16" rx="3" fill="#a8181e" stroke="#3a0507" stroke-width="2.5"/><rect x="1123" y="814" width="6" height="5" fill="#e0505a"/><rect x="1123" y="821" width="6" height="5" fill="#e0505a"/><circle cx="1128" cy="826" r="3.2" fill="#ffb45a"/><rect x="999" y="848" width="20" height="20" rx="3" fill="#a8181e" stroke="#3a0507" stroke-width="2.5"/><rect x="1006" y="850" width="6" height="5" fill="#e0505a"/><rect x="1006" y="861" width="6" height="5" fill="#e0505a"/><circle cx="1009" cy="867" r="3.2" fill="#ffb45a"/><rect x="1082" y="809" width="12" height="28" rx="3" fill="#a8181e" stroke="#3a0507" stroke-width="2.5"/><rect x="1085" y="811" width="6" height="5" fill="#e0505a"/><rect x="1085" y="830" width="6" height="5" fill="#e0505a"/><circle cx="1089" cy="836" r="3.2" fill="#ffb45a"/><rect x="1075" y="815" width="16" height="20" rx="3" fill="#a8181e" stroke="#3a0507" stroke-width="2.5"/><rect x="1080" y="817" width="6" height="5" fill="#e0505a"/><rect x="1080" y="828" width="6" height="5" fill="#e0505a"/><rect x="1045" y="887" width="16" height="12" rx="3" fill="#a8181e" stroke="#3a0507" stroke-width="2.5"/><rect x="1047" y="890" width="5" height="6" fill="#e0505a"/><rect x="1054" y="890" width="5" height="6" fill="#e0505a"/><rect x="1002" y="885" width="24" height="12" rx="3" fill="#a8181e" stroke="#3a0507" stroke-width="2.5"/><rect x="1004" y="888" width="5" height="6" fill="#e0505a"/><rect x="1019" y="888" width="5" height="6" fill="#e0505a"/><circle cx="1007" cy="896" r="3.2" fill="#ffb45a"/><rect x="1035" y="837" width="16" height="26" rx="3" fill="#a8181e" stroke="#3a0507" stroke-width="2.5"/><rect x="1040" y="839" width="6" height="5" fill="#e0505a"/><rect x="1040" y="856" width="6" height="5" fill="#e0505a"/><rect x="1029" y="844" width="12" height="24" rx="3" fill="#a8181e" stroke="#3a0507" stroke-width="2.5"/><rect x="1032" y="846" width="6" height="5" fill="#e0505a"/><rect x="1032" y="861" width="6" height="5" fill="#e0505a"/><rect x="1092" y="846" width="26" height="28" rx="3" fill="#a8181e" stroke="#3a0507" stroke-width="2.5"/><rect x="1102" y="848" width="6" height="5" fill="#e0505a"/><rect x="1102" y="867" width="6" height="5" fill="#e0505a"/><rect x="1126" y="847" width="16" height="26" rx="3" fill="#a8181e" stroke="#3a0507" stroke-width="2.5"/><rect x="1131" y="849" width="6" height="5" fill="#e0505a"/><rect x="1131" y="866" width="6" height="5" fill="#e0505a"/><circle cx="1137" cy="870" r="3.2" fill="#ffb45a"/><rect x="1104" y="827" width="16" height="12" rx="3" fill="#a8181e" stroke="#3a0507" stroke-width="2.5"/><rect x="1106" y="830" width="5" height="6" fill="#e0505a"/><rect x="1113" y="830" width="5" height="6" fill="#e0505a"/><circle cx="1107" cy="827" r="3.2" fill="#ffb45a"/><rect x="1026" y="803" width="28" height="16" rx="3" fill="#a8181e" stroke="#3a0507" stroke-width="2.5"/><circle cx="1040" cy="808" r="3.2" fill="#ffb45a"/><rect x="997" y="841" width="16" height="20" rx="3" fill="#a8181e" stroke="#3a0507" stroke-width="2.5"/><rect x="1023" y="856" width="28" height="16" rx="3" fill="#a8181e" stroke="#3a0507" stroke-width="2.5"/><rect x="1025" y="861" width="5" height="6" fill="#e0505a"/><rect x="1044" y="861" width="5" height="6" fill="#e0505a"/><circle cx="1049" cy="860" r="3.2" fill="#ffb45a"/><rect x="1103" y="817" width="20" height="16" rx="3" fill="#a8181e" stroke="#3a0507" stroke-width="2.5"/><rect x="1073" y="849" width="16" height="20" rx="3" fill="#a8181e" stroke="#3a0507" stroke-width="2.5"/><rect x="1078" y="851" width="6" height="5" fill="#e0505a"/><rect x="1078" y="862" width="6" height="5" fill="#e0505a"/><rect x="991" y="895" width="24" height="12" rx="3" fill="#a8181e" stroke="#3a0507" stroke-width="2.5"/><rect x="1019" y="814" width="20" height="16" rx="3" fill="#a8181e" stroke="#3a0507" stroke-width="2.5"/><rect x="1021" y="819" width="5" height="6" fill="#e0505a"/><rect x="1032" y="819" width="5" height="6" fill="#e0505a"/><rect x="1092" y="856" width="16" height="26" rx="3" fill="#a8181e" stroke="#3a0507" stroke-width="2.5"/><rect x="1097" y="858" width="6" height="5" fill="#e0505a"/><rect x="1097" y="875" width="6" height="5" fill="#e0505a"/><circle cx="1100" cy="866" r="3.2" fill="#ffb45a"/><rect x="1074" y="850" width="16" height="28" rx="3" fill="#a8181e" stroke="#3a0507" stroke-width="2.5"/><rect x="1079" y="852" width="6" height="5" fill="#e0505a"/><rect x="1079" y="871" width="6" height="5" fill="#e0505a"/><rect x="1078" y="818" width="12" height="16" rx="3" fill="#a8181e" stroke="#3a0507" stroke-width="2.5"/><rect x="1081" y="820" width="6" height="5" fill="#e0505a"/><rect x="1081" y="827" width="6" height="5" fill="#e0505a"/><rect x="1092" y="828" width="26" height="28" rx="3" fill="#a8181e" stroke="#3a0507" stroke-width="2.5"/><circle cx="1117" cy="845" r="3.2" fill="#ffb45a"/><rect x="1001" y="830" width="28" height="26" rx="3" fill="#a8181e" stroke="#3a0507" stroke-width="2.5"/><rect x="1003" y="840" width="5" height="6" fill="#e0505a"/><rect x="1022" y="840" width="5" height="6" fill="#e0505a"/><rect x="1150" y="700" width="150" height="130" rx="14" fill="#3c0507" opacity="0.54"/><rect x="1215" y="722" width="37" height="25" rx="6" fill="#2a0304" opacity="0.6"/><rect x="1219" y="715" width="44" height="35" rx="6" fill="#2a0304" opacity="0.6"/><rect x="1179" y="802" width="36" height="23" rx="6" fill="#2a0304" opacity="0.6"/><rect x="1236" y="769" width="50" height="15" rx="6" fill="#2a0304" opacity="0.6"/><rect x="1230" y="750" width="31" height="21" rx="6" fill="#2a0304" opacity="0.6"/><rect x="1165" y="776" width="41" height="31" rx="6" fill="#2a0304" opacity="0.6"/><rect x="1158" y="702" width="20" height="26" rx="3" fill="#a8181e" stroke="#3a0507" stroke-width="2.5"/><rect x="1165" y="704" width="6" height="5" fill="#e0505a"/><rect x="1165" y="721" width="6" height="5" fill="#e0505a"/><rect x="1181" y="773" width="24" height="20" rx="3" fill="#a8181e" stroke="#3a0507" stroke-width="2.5"/><rect x="1183" y="780" width="5" height="6" fill="#e0505a"/><rect x="1198" y="780" width="5" height="6" fill="#e0505a"/><rect x="1270" y="728" width="24" height="16" rx="3" fill="#a8181e" stroke="#3a0507" stroke-width="2.5"/><rect x="1272" y="733" width="5" height="6" fill="#e0505a"/><rect x="1287" y="733" width="5" height="6" fill="#e0505a"/><circle cx="1285" cy="729" r="3.2" fill="#ffb45a"/><rect x="1275" y="802" width="16" height="16" rx="3" fill="#a8181e" stroke="#3a0507" stroke-width="2.5"/><rect x="1280" y="804" width="6" height="5" fill="#e0505a"/><rect x="1280" y="811" width="6" height="5" fill="#e0505a"/><rect x="1249" y="806" width="26" height="16" rx="3" fill="#a8181e" stroke="#3a0507" stroke-width="2.5"/><rect x="1251" y="811" width="5" height="6" fill="#e0505a"/><rect x="1268" y="811" width="5" height="6" fill="#e0505a"/><rect x="1218" y="794" width="20" height="20" rx="3" fill="#a8181e" stroke="#3a0507" stroke-width="2.5"/><rect x="1225" y="796" width="6" height="5" fill="#e0505a"/><rect x="1225" y="807" width="6" height="5" fill="#e0505a"/><circle cx="1231" cy="813" r="3.2" fill="#ffb45a"/><rect x="1197" y="748" width="16" height="20" rx="3" fill="#a8181e" stroke="#3a0507" stroke-width="2.5"/><rect x="1202" y="750" width="6" height="5" fill="#e0505a"/><rect x="1202" y="761" width="6" height="5" fill="#e0505a"/><rect x="1185" y="743" width="20" height="24" rx="3" fill="#a8181e" stroke="#3a0507" stroke-width="2.5"/><rect x="1192" y="745" width="6" height="5" fill="#e0505a"/><rect x="1192" y="760" width="6" height="5" fill="#e0505a"/><rect x="1269" y="732" width="28" height="16" rx="3" fill="#a8181e" stroke="#3a0507" stroke-width="2.5"/><rect x="1271" y="737" width="5" height="6" fill="#e0505a"/><rect x="1290" y="737" width="5" height="6" fill="#e0505a"/><rect x="1265" y="716" width="20" height="26" rx="3" fill="#a8181e" stroke="#3a0507" stroke-width="2.5"/><rect x="1272" y="718" width="6" height="5" fill="#e0505a"/><rect x="1272" y="735" width="6" height="5" fill="#e0505a"/><circle cx="1273" cy="734" r="3.2" fill="#ffb45a"/><rect x="1201" y="706" width="28" height="12" rx="3" fill="#a8181e" stroke="#3a0507" stroke-width="2.5"/><rect x="1203" y="709" width="5" height="6" fill="#e0505a"/><rect x="1222" y="709" width="5" height="6" fill="#e0505a"/><rect x="1166" y="752" width="20" height="16" rx="3" fill="#a8181e" stroke="#3a0507" stroke-width="2.5"/><rect x="1261" y="736" width="28" height="26" rx="3" fill="#a8181e" stroke="#3a0507" stroke-width="2.5"/><rect x="1263" y="746" width="5" height="6" fill="#e0505a"/><rect x="1282" y="746" width="5" height="6" fill="#e0505a"/><rect x="1214" y="753" width="26" height="28" rx="3" fill="#a8181e" stroke="#3a0507" stroke-width="2.5"/><circle cx="1215" cy="759" r="3.2" fill="#ffb45a"/><rect x="1266" y="752" width="28" height="12" rx="3" fill="#a8181e" stroke="#3a0507" stroke-width="2.5"/><rect x="1224" y="814" width="16" height="12" rx="3" fill="#a8181e" stroke="#3a0507" stroke-width="2.5"/><rect x="1226" y="817" width="5" height="6" fill="#e0505a"/><rect x="1233" y="817" width="5" height="6" fill="#e0505a"/><rect x="1223" y="799" width="26" height="20" rx="3" fill="#a8181e" stroke="#3a0507" stroke-width="2.5"/><rect x="1225" y="806" width="5" height="6" fill="#e0505a"/><rect x="1242" y="806" width="5" height="6" fill="#e0505a"/><circle cx="1225" cy="803" r="3.2" fill="#ffb45a"/><rect x="1191" y="812" width="20" height="12" rx="3" fill="#a8181e" stroke="#3a0507" stroke-width="2.5"/><rect x="1218" y="729" width="28" height="26" rx="3" fill="#a8181e" stroke="#3a0507" stroke-width="2.5"/><rect x="1220" y="739" width="5" height="6" fill="#e0505a"/><rect x="1239" y="739" width="5" height="6" fill="#e0505a"/><rect x="1205" y="744" width="16" height="16" rx="3" fill="#a8181e" stroke="#3a0507" stroke-width="2.5"/><circle cx="1217" cy="757" r="3.2" fill="#ffb45a"/><rect x="1140" y="560" width="35" height="140" rx="14" fill="#3c0507" opacity="0.54"/><rect x="1141" y="612" width="34" height="29" rx="6" fill="#2a0304" opacity="0.6"/><rect x="1140" y="617" width="35" height="29" rx="6" fill="#2a0304" opacity="0.6"/><rect x="1145" y="624" width="12" height="20" rx="3" fill="#a8181e" stroke="#3a0507" stroke-width="2.5"/><rect x="1144" y="579" width="28" height="26" rx="3" fill="#a8181e" stroke="#3a0507" stroke-width="2.5"/><rect x="1146" y="589" width="5" height="6" fill="#e0505a"/><rect x="1165" y="589" width="5" height="6" fill="#e0505a"/><rect x="1147" y="566" width="12" height="16" rx="3" fill="#a8181e" stroke="#3a0507" stroke-width="2.5"/><rect x="1150" y="568" width="6" height="5" fill="#e0505a"/><rect x="1150" y="575" width="6" height="5" fill="#e0505a"/><rect x="1147" y="641" width="20" height="16" rx="3" fill="#a8181e" stroke="#3a0507" stroke-width="2.5"/><rect x="1149" y="646" width="5" height="6" fill="#e0505a"/><rect x="1160" y="646" width="5" height="6" fill="#e0505a"/><circle cx="1167" cy="657" r="3.2" fill="#ffb45a"/><rect x="1145" y="597" width="20" height="16" rx="3" fill="#a8181e" stroke="#3a0507" stroke-width="2.5"/><rect x="1147" y="602" width="5" height="6" fill="#e0505a"/><rect x="1158" y="602" width="5" height="6" fill="#e0505a"/><rect x="1143" y="681" width="28" height="12" rx="3" fill="#a8181e" stroke="#3a0507" stroke-width="2.5"/><circle cx="1149" cy="692" r="3.2" fill="#ffb45a"/><rect x="1143" y="570" width="28" height="26" rx="3" fill="#a8181e" stroke="#3a0507" stroke-width="2.5"/><rect x="1145" y="580" width="5" height="6" fill="#e0505a"/><rect x="1164" y="580" width="5" height="6" fill="#e0505a"/><rect x="1146" y="670" width="20" height="24" rx="3" fill="#a8181e" stroke="#3a0507" stroke-width="2.5"/><circle cx="1151" cy="672" r="3.2" fill="#ffb45a"/><rect x="1040" y="480" width="60" height="60" rx="14" fill="#3c0507" opacity="0.54"/><rect x="1057" y="484" width="34" height="31" rx="6" fill="#2a0304" opacity="0.6"/><rect x="1051" y="509" width="20" height="24" rx="6" fill="#2a0304" opacity="0.6"/><rect x="1047" y="501" width="20" height="12" rx="3" fill="#a8181e" stroke="#3a0507" stroke-width="2.5"/><rect x="1049" y="504" width="5" height="6" fill="#e0505a"/><rect x="1060" y="504" width="5" height="6" fill="#e0505a"/><rect x="1069" y="495" width="16" height="16" rx="3" fill="#a8181e" stroke="#3a0507" stroke-width="2.5"/><rect x="1074" y="497" width="6" height="5" fill="#e0505a"/><rect x="1074" y="504" width="6" height="5" fill="#e0505a"/><rect x="1068" y="492" width="16" height="12" rx="3" fill="#a8181e" stroke="#3a0507" stroke-width="2.5"/><rect x="1069" y="506" width="28" height="12" rx="3" fill="#a8181e" stroke="#3a0507" stroke-width="2.5"/><rect x="1045" y="506" width="16" height="16" rx="3" fill="#a8181e" stroke="#3a0507" stroke-width="2.5"/><rect x="1050" y="508" width="6" height="5" fill="#e0505a"/><rect x="1050" y="515" width="6" height="5" fill="#e0505a"/><rect x="1044" y="490" width="28" height="12" rx="3" fill="#a8181e" stroke="#3a0507" stroke-width="2.5"/><circle cx="1071" cy="501" r="3.2" fill="#ffb45a"/><rect x="1050" y="492" width="20" height="28" rx="3" fill="#a8181e" stroke="#3a0507" stroke-width="2.5"/><rect x="1057" y="494" width="6" height="5" fill="#e0505a"/><rect x="1057" y="513" width="6" height="5" fill="#e0505a"/><rect x="1080" y="483" width="12" height="20" rx="3" fill="#a8181e" stroke="#3a0507" stroke-width="2.5"/><rect x="1083" y="485" width="6" height="5" fill="#e0505a"/><rect x="1083" y="496" width="6" height="5" fill="#e0505a"/><rect x="660" y="860" width="40" height="40" rx="14" fill="#3c0507" opacity="0.54"/><rect x="671" y="867" width="23" height="32" rx="6" fill="#2a0304" opacity="0.6"/><rect x="663" y="867" width="20" height="24" rx="3" fill="#a8181e" stroke="#3a0507" stroke-width="2.5"/><rect x="670" y="869" width="6" height="5" fill="#e0505a"/><rect x="670" y="884" width="6" height="5" fill="#e0505a"/><rect x="683" y="865" width="12" height="28" rx="3" fill="#a8181e" stroke="#3a0507" stroke-width="2.5"/><rect x="673" y="865" width="20" height="16" rx="3" fill="#a8181e" stroke="#3a0507" stroke-width="2.5"/><rect x="675" y="870" width="5" height="6" fill="#e0505a"/><rect x="686" y="870" width="5" height="6" fill="#e0505a"/><circle cx="679" cy="867" r="3.2" fill="#ffb45a"/><rect x="672" y="869" width="26" height="20" rx="3" fill="#a8181e" stroke="#3a0507" stroke-width="2.5"/><rect x="674" y="876" width="5" height="6" fill="#e0505a"/><rect x="691" y="876" width="5" height="6" fill="#e0505a"/><rect x="425" y="560" width="75" height="60" rx="14" fill="#3c0507" opacity="0.54"/><rect x="444" y="567" width="49" height="14" rx="6" fill="#2a0304" opacity="0.6"/><rect x="447" y="591" width="50" height="14" rx="6" fill="#2a0304" opacity="0.6"/><rect x="453" y="573" width="16" height="24" rx="3" fill="#a8181e" stroke="#3a0507" stroke-width="2.5"/><rect x="458" y="575" width="6" height="5" fill="#e0505a"/><rect x="458" y="590" width="6" height="5" fill="#e0505a"/><circle cx="468" cy="578" r="3.2" fill="#ffb45a"/><rect x="474" y="578" width="20" height="24" rx="3" fill="#a8181e" stroke="#3a0507" stroke-width="2.5"/><rect x="481" y="580" width="6" height="5" fill="#e0505a"/><rect x="481" y="595" width="6" height="5" fill="#e0505a"/><rect x="452" y="572" width="26" height="28" rx="3" fill="#a8181e" stroke="#3a0507" stroke-width="2.5"/><rect x="462" y="574" width="6" height="5" fill="#e0505a"/><rect x="462" y="593" width="6" height="5" fill="#e0505a"/><rect x="462" y="564" width="28" height="26" rx="3" fill="#a8181e" stroke="#3a0507" stroke-width="2.5"/><rect x="458" y="593" width="20" height="16" rx="3" fill="#a8181e" stroke="#3a0507" stroke-width="2.5"/><circle cx="469" cy="596" r="3.2" fill="#ffb45a"/><rect x="431" y="591" width="12" height="16" rx="3" fill="#a8181e" stroke="#3a0507" stroke-width="2.5"/><circle cx="442" cy="595" r="3.2" fill="#ffb45a"/><rect x="445" y="588" width="12" height="24" rx="3" fill="#a8181e" stroke="#3a0507" stroke-width="2.5"/><rect x="448" y="590" width="6" height="5" fill="#e0505a"/><rect x="448" y="605" width="6" height="5" fill="#e0505a"/><rect x="463" y="587" width="24" height="26" rx="3" fill="#a8181e" stroke="#3a0507" stroke-width="2.5"/><rect x="472" y="589" width="6" height="5" fill="#e0505a"/><rect x="472" y="606" width="6" height="5" fill="#e0505a"/><circle cx="479" cy="597" r="3.2" fill="#ffb45a"/><rect x="940" y="840" width="50" height="60" rx="14" fill="#3c0507" opacity="0.54"/><rect x="948" y="855" width="31" height="26" rx="6" fill="#2a0304" opacity="0.6"/><rect x="948" y="850" width="20" height="28" rx="3" fill="#a8181e" stroke="#3a0507" stroke-width="2.5"/><rect x="963" y="853" width="24" height="12" rx="3" fill="#a8181e" stroke="#3a0507" stroke-width="2.5"/><rect x="955" y="854" width="26" height="16" rx="3" fill="#a8181e" stroke="#3a0507" stroke-width="2.5"/><rect x="957" y="859" width="5" height="6" fill="#e0505a"/><rect x="974" y="859" width="5" height="6" fill="#e0505a"/><circle cx="961" cy="866" r="3.2" fill="#ffb45a"/><rect x="955" y="872" width="26" height="24" rx="3" fill="#a8181e" stroke="#3a0507" stroke-width="2.5"/><rect x="957" y="881" width="5" height="6" fill="#e0505a"/><rect x="974" y="881" width="5" height="6" fill="#e0505a"/><circle cx="980" cy="892" r="3.2" fill="#ffb45a"/><rect x="946" y="854" width="20" height="16" rx="3" fill="#a8181e" stroke="#3a0507" stroke-width="2.5"/><rect x="948" y="859" width="5" height="6" fill="#e0505a"/><rect x="959" y="859" width="5" height="6" fill="#e0505a"/><circle cx="960" cy="866" r="3.2" fill="#ffb45a"/><path d="M934 470 L934 772 L922 784" stroke="#2c0406" stroke-width="14" fill="none" stroke-linejoin="round" stroke-linecap="round"/><path d="M934 470 L934 772 L922 784" stroke="#d01e26" stroke-width="4" fill="none" stroke-linejoin="round" stroke-linecap="round"/><path d="M1117 428 L1105 415" stroke="#2c0406" stroke-width="14" fill="none" stroke-linejoin="round" stroke-linecap="round"/><path d="M1117 428 L1105 415" stroke="#d01e26" stroke-width="4" fill="none" stroke-linejoin="round" stroke-linecap="round"/><path d="M1117 428 L1117 545 L1131 559" stroke="#2c0406" stroke-width="14" fill="none" stroke-linejoin="round" stroke-linecap="round"/><path d="M1117 428 L1117 545 L1131 559" stroke="#d01e26" stroke-width="4" fill="none" stroke-linejoin="round" stroke-linecap="round"/><path d="M1257 415 L1272 430 L1272 542 L1258 558" stroke="#2c0406" stroke-width="14" fill="none" stroke-linejoin="round" stroke-linecap="round"/><path d="M1257 415 L1272 430 L1272 542 L1258 558" stroke="#d01e26" stroke-width="4" fill="none" stroke-linejoin="round" stroke-linecap="round"/><path d="M1128 653 L1128 833 L1118 841" stroke="#2c0406" stroke-width="14" fill="none" stroke-linejoin="round" stroke-linecap="round"/><path d="M1128 653 L1128 833 L1118 841" stroke="#d01e26" stroke-width="4" fill="none" stroke-linejoin="round" stroke-linecap="round"/><path d="M1292 711 L1292 833 L1278 841" stroke="#2c0406" stroke-width="14" fill="none" stroke-linejoin="round" stroke-linecap="round"/><path d="M1292 711 L1292 833 L1278 841" stroke="#d01e26" stroke-width="4" fill="none" stroke-linejoin="round" stroke-linecap="round"/><path d="M795 619 L795 839 L823 839" stroke="#2c0406" stroke-width="14" fill="none" stroke-linejoin="round" stroke-linecap="round"/><path d="M795 619 L795 839 L823 839" stroke="#d01e26" stroke-width="4" fill="none" stroke-linejoin="round" stroke-linecap="round"/><path d="M836 683 L876 655 L876 560" stroke="#2c0406" stroke-width="14" fill="none" stroke-linejoin="round" stroke-linecap="round"/><path d="M836 683 L876 655 L876 560" stroke="#d01e26" stroke-width="4" fill="none" stroke-linejoin="round" stroke-linecap="round"/><path d="M756 488 L770 505 L840 505 L890 484" stroke="#2c0406" stroke-width="14" fill="none" stroke-linejoin="round" stroke-linecap="round"/><path d="M756 488 L770 505 L840 505 L890 484" stroke="#d01e26" stroke-width="4" fill="none" stroke-linejoin="round" stroke-linecap="round"/><path d="M940 487 L940 560" stroke="#2c0406" stroke-width="14" fill="none" stroke-linejoin="round" stroke-linecap="round"/><path d="M940 487 L940 560" stroke="#d01e26" stroke-width="4" fill="none" stroke-linejoin="round" stroke-linecap="round"/><path d="M995 487 L1030 520 L1090 520" stroke="#2c0406" stroke-width="14" fill="none" stroke-linejoin="round" stroke-linecap="round"/><path d="M995 487 L1030 520 L1090 520" stroke="#d01e26" stroke-width="4" fill="none" stroke-linejoin="round" stroke-linecap="round"/><path d="M757 487 L786 515 L786 530 L740 565 L716 590 L716 600 L696 600" stroke="#2c0406" stroke-width="14" fill="none" stroke-linejoin="round" stroke-linecap="round"/><path d="M757 487 L786 515 L786 530 L740 565 L716 590 L716 600 L696 600" stroke="#d01e26" stroke-width="4" fill="none" stroke-linejoin="round" stroke-linecap="round"/><path d="M1180 700 L1180 740" stroke="#2c0406" stroke-width="14" fill="none" stroke-linejoin="round" stroke-linecap="round"/><path d="M1180 700 L1180 740" stroke="#d01e26" stroke-width="4" fill="none" stroke-linejoin="round" stroke-linecap="round"/><rect x="1250.0" y="655.0" width="40" height="70" rx="10" fill="#4a0608" opacity="0.8"/><rect x="1088.0" y="515.0" width="40" height="50" rx="10" fill="#4a0608" opacity="0.8"/><rect x="1235.0" y="825.0" width="30" height="30" rx="10" fill="#4a0608" opacity="0.8"/><rect x="865.0" y="700.0" width="50" height="40" rx="10" fill="#4a0608" opacity="0.8"/><rect x="670.0" y="605.0" width="60" height="30" rx="10" fill="#4a0608" opacity="0.8"/><rect x="985.0" y="675.0" width="40" height="30" rx="10" fill="#4a0608" opacity="0.8"/><rect x="820.0" y="825.0" width="40" height="30" rx="10" fill="#4a0608" opacity="0.8"/><rect x="945.0" y="610.0" width="30" height="60" rx="10" fill="#4a0608" opacity="0.8"/><rect x="397" y="440" width="18" height="121" fill="#2c0406"/><rect x="401" y="445" width="10" height="111" fill="#7a0c10"/><rect x="393" y="433" width="26" height="14" rx="7" fill="#111" stroke="#f1d6a0" stroke-width="3"/><rect x="451" y="433" width="26" height="14" rx="7" fill="#111" stroke="#f1d6a0" stroke-width="3"/><rect x="393" y="554" width="26" height="14" rx="7" fill="#111" stroke="#f1d6a0" stroke-width="3"/><rect x="451" y="554" width="26" height="14" rx="7" fill="#111" stroke="#f1d6a0" stroke-width="3"/><path d="M440 455 L420 480 L420 530 L440 555" stroke="#3a0508" stroke-width="10" fill="none"/><circle cx="458" cy="460" r="6" fill="#c8c448"/><circle cx="458" cy="541" r="6" fill="#c8c448"/><rect x="462" y="484" width="68" height="34" fill="#1e3a9a"/><rect x="466" y="487" width="30" height="28" fill="#2a90e8"/><rect x="500" y="488" width="28" height="12" fill="#2a80d8"/><rect x="500" y="503" width="28" height="12" fill="#2a80d8"/><circle cx="460" cy="488" r="5" fill="#9ad4ee"/><circle cx="460" cy="512" r="5" fill="#9ad4ee"/><circle cx="494" cy="488" r="5" fill="#9ad4ee"/><circle cx="529" cy="507" r="5" fill="#9ad4ee"/><path d="M530 497 H600 L614 483 H662 M530 506 H604 L618 492 H662" stroke="#2a4fd8" stroke-width="3" fill="none"/><rect x="663" y="480" width="10" height="16" fill="#3a5ad8" opacity="0.8"/><path d="M672 432 H720 Q728 432 728 442 V500" stroke="#2a4fd8" stroke-width="4" fill="none"/><path d="M690 446 H708 Q716 446 718 466" stroke="#2a4fd8" stroke-width="3" fill="none"/><rect x="664" y="429" width="12" height="12" fill="#3a5ae8"/><rect x="672" y="450" width="24" height="12" fill="#3a5ae8"/><circle cx="728" cy="500" r="9" fill="#101a60"/><circle cx="728" cy="500" r="4" fill="#b0c0ff"/><circle cx="718" cy="466" r="4" fill="#b0c0ff"/><rect x="655" y="468" width="55" height="48" fill="#a8181e" stroke="#3a0507" stroke-width="2"/><text x="683" y="490" font-size="17" fill="#f08090" text-anchor="middle" font-family="Liberation Sans">25</text><text x="683" y="508" font-size="12" fill="#f08090" text-anchor="middle" font-family="Liberation Sans">GND</text><rect x="734.0" y="429.0" width="36" height="62" rx="6" fill="#2c0406"/><rect x="737.0" y="432.0" width="30" height="56" rx="4" fill="#c81e26"/><text x="0" y="0" font-size="11" fill="#f08088" text-anchor="middle" font-family="Liberation Sans" transform="translate(756,460) rotate(-90)">VUSB</text><rect x="825.0" y="429.0" width="36" height="62" rx="6" fill="#2c0406"/><rect x="828.0" y="432.0" width="30" height="56" rx="4" fill="#c81e26"/><text x="0" y="0" font-size="11" fill="#f08088" text-anchor="middle" font-family="Liberation Sans" transform="translate(847,460) rotate(-90)">VDD</text><rect x="921.0" y="429.0" width="36" height="62" rx="6" fill="#2c0406"/><rect x="924.0" y="432.0" width="30" height="56" rx="4" fill="#c81e26"/><text x="0" y="0" font-size="11" fill="#f08088" text-anchor="middle" font-family="Liberation Sans" transform="translate(943,460) rotate(-90)">VBAT</text><rect x="975.0" y="429.0" width="36" height="62" rx="6" fill="#2c0406"/><rect x="978.0" y="432.0" width="30" height="56" rx="4" fill="#c81e26"/><text x="0" y="0" font-size="11" fill="#f08088" text-anchor="middle" font-family="Liberation Sans" transform="translate(997,460) rotate(-90)">GND</text><rect x="1012.0" y="427.0" width="40" height="40" rx="6" fill="#2c0406"/><rect x="1015.0" y="430.0" width="34" height="34" rx="4" fill="#c01c24"/><text x="1032" y="455" font-size="9" fill="#f08088" text-anchor="middle" font-family="Liberation Sans">ESD</text><rect x="1140.0" y="427.0" width="40" height="40" rx="6" fill="#2c0406"/><rect x="1143.0" y="430.0" width="34" height="34" rx="4" fill="#c01c24"/><text x="1160" y="455" font-size="9" fill="#f08088" text-anchor="middle" font-family="Liberation Sans">ESD</text><rect x="1310.0" y="464.0" width="40" height="40" rx="6" fill="#2c0406"/><rect x="1313.0" y="467.0" width="34" height="34" rx="4" fill="#c01c24"/><text x="1330" y="492" font-size="9" fill="#f08088" text-anchor="middle" font-family="Liberation Sans">GND</text><rect x="1183.0" y="466.0" width="36" height="36" rx="6" fill="#2c0406"/><rect x="1186.0" y="469.0" width="30" height="30" rx="4" fill="#b81a22"/><circle cx="891" cy="448" r="18" fill="#2c0406"/><circle cx="891" cy="448" r="12" fill="#f1d6a0"/><circle cx="891" cy="448" r="8.5" fill="#0c0c0c"/><circle cx="891" cy="484" r="18" fill="#2c0406"/><circle cx="891" cy="484" r="12" fill="#f1d6a0"/><circle cx="891" cy="484" r="8.5" fill="#0c0c0c"/><circle cx="1067" cy="447" r="18" fill="#2c0406"/><circle cx="1067" cy="447" r="12" fill="#f1d6a0"/><circle cx="1067" cy="447" r="8.5" fill="#0c0c0c"/><circle cx="1067" cy="510" r="18" fill="#2c0406"/><circle cx="1067" cy="510" r="12" fill="#f1d6a0"/><circle cx="1067" cy="510" r="8.5" fill="#0c0c0c"/><circle cx="836" cy="611" r="18" fill="#2c0406"/><circle cx="836" cy="611" r="12" fill="#f1d6a0"/><circle cx="836" cy="611" r="8.5" fill="#0c0c0c"/><circle cx="836" cy="647" r="18" fill="#2c0406"/><circle cx="836" cy="647" r="12" fill="#f1d6a0"/><circle cx="836" cy="647" r="8.5" fill="#0c0c0c"/><rect x="818" y="665" width="36" height="36" fill="#2c0406"/><rect x="821" y="668" width="30" height="30" fill="#d01e26"/><circle cx="836" cy="683" r="12" fill="#f1d6a0"/><circle cx="836" cy="683" r="8.5" fill="#0c0c0c"/><rect x="432.0" y="639.0" width="44" height="44" rx="4" fill="#2c0406"/><rect x="436.0" y="643.0" width="36" height="36" rx="2" fill="#9a161c" stroke="#c01c24" stroke-width="4"/><circle cx="454" cy="661" r="12" fill="#f1d6a0"/><circle cx="454" cy="661" r="9.8" fill="#111"/><circle cx="454" cy="711" r="24.0" fill="#2c0406"/><circle cx="454" cy="711" r="19.0" fill="#9a141a"/><circle cx="454" cy="711" r="12" fill="#f1d6a0"/><circle cx="454" cy="711" r="9.8" fill="#111"/><rect x="432.0" y="756.0" width="44" height="44" rx="4" fill="#2c0406"/><rect x="436.0" y="760.0" width="36" height="36" rx="2" fill="#9a161c" stroke="#c01c24" stroke-width="4"/><circle cx="454" cy="778" r="12" fill="#f1d6a0"/><circle cx="454" cy="778" r="9.8" fill="#111"/><circle cx="454" cy="828" r="28" fill="#2c0406"/><circle cx="454" cy="828" r="24" fill="#25a040"/><circle cx="454" cy="828" r="16" fill="#5cc860"/><circle cx="454" cy="828" r="12" fill="#f1d6a0"/><circle cx="454" cy="828" r="9.8" fill="#111"/><circle cx="454" cy="876" r="24.0" fill="#2c0406"/><circle cx="454" cy="876" r="19.0" fill="#9a141a"/><circle cx="454" cy="876" r="12" fill="#f1d6a0"/><circle cx="454" cy="876" r="9.8" fill="#111"/><circle cx="454" cy="925" r="28" fill="#2c0406"/><circle cx="454" cy="925" r="24" fill="#25a040"/><circle cx="454" cy="925" r="16" fill="#5cc860"/><circle cx="454" cy="925" r="12" fill="#f1d6a0"/><circle cx="454" cy="925" r="9.8" fill="#111"/><rect x="530.0" y="639.0" width="44" height="44" rx="4" fill="#2c0406"/><rect x="534.0" y="643.0" width="36" height="36" rx="2" fill="#9a161c" stroke="#c01c24" stroke-width="4"/><circle cx="552" cy="661" r="12" fill="#f1d6a0"/><circle cx="552" cy="661" r="9.8" fill="#111"/><circle cx="552" cy="711" r="24.0" fill="#2c0406"/><circle cx="552" cy="711" r="19.0" fill="#9a141a"/><circle cx="552" cy="711" r="12" fill="#f1d6a0"/><circle cx="552" cy="711" r="9.8" fill="#111"/><rect x="530.0" y="756.0" width="44" height="44" rx="4" fill="#2c0406"/><rect x="534.0" y="760.0" width="36" height="36" rx="2" fill="#9a161c" stroke="#c01c24" stroke-width="4"/><circle cx="552" cy="778" r="12" fill="#f1d6a0"/><circle cx="552" cy="778" r="9.8" fill="#111"/><circle cx="552" cy="828" r="28" fill="#2c0406"/><circle cx="552" cy="828" r="24" fill="#25a040"/><circle cx="552" cy="828" r="16" fill="#5cc860"/><circle cx="552" cy="828" r="12" fill="#f1d6a0"/><circle cx="552" cy="828" r="9.8" fill="#111"/><circle cx="552" cy="876" r="24.0" fill="#2c0406"/><circle cx="552" cy="876" r="19.0" fill="#9a141a"/><circle cx="552" cy="876" r="12" fill="#f1d6a0"/><circle cx="552" cy="876" r="9.8" fill="#111"/><circle cx="552" cy="925" r="28" fill="#2c0406"/><circle cx="552" cy="925" r="24" fill="#25a040"/><circle cx="552" cy="925" r="16" fill="#5cc860"/><circle cx="552" cy="925" r="12" fill="#f1d6a0"/><circle cx="552" cy="925" r="9.8" fill="#111"/><rect x="530.0" y="971.0" width="44" height="44" rx="4" fill="#2c0406"/><rect x="534.0" y="975.0" width="36" height="36" rx="2" fill="#9a161c" stroke="#c01c24" stroke-width="4"/><circle cx="552" cy="993" r="12" fill="#f1d6a0"/><circle cx="552" cy="993" r="9.8" fill="#111"/><rect x="600.0" y="598.0" width="40" height="50" rx="6" fill="#2c0406"/><rect x="603.0" y="601.0" width="34" height="44" rx="4" fill="#8e1216"/><rect x="600.0" y="667.0" width="40" height="50" rx="6" fill="#2c0406"/><rect x="603.0" y="670.0" width="34" height="44" rx="4" fill="#8e1216"/><rect x="600.0" y="739.0" width="40" height="50" rx="6" fill="#2c0406"/><rect x="603.0" y="742.0" width="34" height="44" rx="4" fill="#8e1216"/><rect x="600.0" y="810.0" width="40" height="50" rx="6" fill="#2c0406"/><rect x="603.0" y="813.0" width="34" height="44" rx="4" fill="#8e1216"/><rect x="611.0" y="643.0" width="32" height="28" rx="4" fill="#4a0608"/><rect x="614.0" y="646.0" width="26" height="22" rx="2" fill="#a8181e"/><rect x="619" y="652" width="6" height="10" fill="#e04850"/><rect x="629" y="652" width="6" height="10" fill="#e04850"/><circle cx="650" cy="657" r="3.2" fill="#ffb45a"/><circle cx="650" cy="657" r="1.4400000000000002" fill="#fff0c8"/><rect x="735.0" y="643.0" width="32" height="28" rx="4" fill="#4a0608"/><rect x="738.0" y="646.0" width="26" height="22" rx="2" fill="#a8181e"/><rect x="743" y="652" width="6" height="10" fill="#e04850"/><rect x="753" y="652" width="6" height="10" fill="#e04850"/><circle cx="725" cy="657" r="3.2" fill="#ffb45a"/><circle cx="725" cy="657" r="1.4400000000000002" fill="#fff0c8"/><rect x="611.0" y="714.0" width="32" height="28" rx="4" fill="#4a0608"/><rect x="614.0" y="717.0" width="26" height="22" rx="2" fill="#a8181e"/><rect x="619" y="723" width="6" height="10" fill="#e04850"/><rect x="629" y="723" width="6" height="10" fill="#e04850"/><circle cx="650" cy="728" r="3.2" fill="#ffb45a"/><circle cx="650" cy="728" r="1.4400000000000002" fill="#fff0c8"/><rect x="735.0" y="714.0" width="32" height="28" rx="4" fill="#4a0608"/><rect x="738.0" y="717.0" width="26" height="22" rx="2" fill="#a8181e"/><rect x="743" y="723" width="6" height="10" fill="#e04850"/><rect x="753" y="723" width="6" height="10" fill="#e04850"/><circle cx="725" cy="728" r="3.2" fill="#ffb45a"/><circle cx="725" cy="728" r="1.4400000000000002" fill="#fff0c8"/><rect x="611.0" y="786.0" width="32" height="28" rx="4" fill="#4a0608"/><rect x="614.0" y="789.0" width="26" height="22" rx="2" fill="#a8181e"/><rect x="619" y="795" width="6" height="10" fill="#e04850"/><rect x="629" y="795" width="6" height="10" fill="#e04850"/><circle cx="650" cy="800" r="3.2" fill="#ffb45a"/><circle cx="650" cy="800" r="1.4400000000000002" fill="#fff0c8"/><rect x="735.0" y="786.0" width="32" height="28" rx="4" fill="#4a0608"/><rect x="738.0" y="789.0" width="26" height="22" rx="2" fill="#a8181e"/><rect x="743" y="795" width="6" height="10" fill="#e04850"/><rect x="753" y="795" width="6" height="10" fill="#e04850"/><circle cx="725" cy="800" r="3.2" fill="#ffb45a"/><circle cx="725" cy="800" r="1.4400000000000002" fill="#fff0c8"/><rect x="611.0" y="858.0" width="32" height="28" rx="4" fill="#4a0608"/><rect x="614.0" y="861.0" width="26" height="22" rx="2" fill="#a8181e"/><rect x="619" y="867" width="6" height="10" fill="#e04850"/><rect x="629" y="867" width="6" height="10" fill="#e04850"/><circle cx="650" cy="872" r="3.2" fill="#ffb45a"/><circle cx="650" cy="872" r="1.4400000000000002" fill="#fff0c8"/><rect x="735.0" y="858.0" width="32" height="28" rx="4" fill="#4a0608"/><rect x="738.0" y="861.0" width="26" height="22" rx="2" fill="#a8181e"/><rect x="743" y="867" width="6" height="10" fill="#e04850"/><rect x="753" y="867" width="6" height="10" fill="#e04850"/><circle cx="725" cy="872" r="3.2" fill="#ffb45a"/><circle cx="725" cy="872" r="1.4400000000000002" fill="#fff0c8"/><path d="M605 635 L577 657 L576 808 L562 819" stroke="#2c0406" stroke-width="9" fill="none" stroke-linejoin="round" stroke-linecap="round"/><path d="M605 635 L577 657 L576 808 L562 819" stroke="#2fa842" stroke-width="3.5" fill="none" stroke-linejoin="round" stroke-linecap="round"/><path d="M605 706 L584 725 L584 836 L576 842 L576 905 L562 920" stroke="#2c0406" stroke-width="9" fill="none" stroke-linejoin="round" stroke-linecap="round"/><path d="M605 706 L584 725 L584 836 L576 842 L576 905 L562 920" stroke="#2fa842" stroke-width="3.5" fill="none" stroke-linejoin="round" stroke-linecap="round"/><path d="M605 778 L593 789 L593 1100 L570 1125" stroke="#2c0406" stroke-width="9" fill="none" stroke-linejoin="round" stroke-linecap="round"/><path d="M605 778 L593 789 L593 1100 L570 1125" stroke="#2fa842" stroke-width="3.5" fill="none" stroke-linejoin="round" stroke-linecap="round"/><path d="M605 851 L605 1085 L578 1112" stroke="#2c0406" stroke-width="9" fill="none" stroke-linejoin="round" stroke-linecap="round"/><path d="M605 851 L605 1085 L578 1112" stroke="#2fa842" stroke-width="3.5" fill="none" stroke-linejoin="round" stroke-linecap="round"/><circle cx="605" cy="635" r="9" fill="#2c0406"/><circle cx="605" cy="635" r="7" fill="#5cc860"/><circle cx="605" cy="706" r="9" fill="#2c0406"/><circle cx="605" cy="706" r="7" fill="#5cc860"/><circle cx="605" cy="778" r="9" fill="#2c0406"/><circle cx="605" cy="778" r="7" fill="#5cc860"/><circle cx="605" cy="851" r="9" fill="#2c0406"/><circle cx="605" cy="851" r="7" fill="#5cc860"/><rect x="735" y="605" width="32" height="32" rx="6" fill="#2c0406"/><rect x="738" y="608" width="26" height="26" rx="4" fill="#3ab04a" stroke="#7ad07a" stroke-width="1.5"/><path d="M764 621 H782" stroke="#3ab04a" stroke-width="3"/><circle cx="782" cy="629" r="6" fill="#5cc860"/><circle cx="782" cy="617" r="5" fill="#5cc860"/><rect x="735" y="676" width="32" height="32" rx="6" fill="#2c0406"/><rect x="738" y="679" width="26" height="26" rx="4" fill="#3ab04a" stroke="#7ad07a" stroke-width="1.5"/><path d="M764 692 H782" stroke="#3ab04a" stroke-width="3"/><circle cx="782" cy="700" r="6" fill="#5cc860"/><circle cx="782" cy="688" r="5" fill="#5cc860"/><rect x="735" y="748" width="32" height="32" rx="6" fill="#2c0406"/><rect x="738" y="751" width="26" height="26" rx="4" fill="#3ab04a" stroke="#7ad07a" stroke-width="1.5"/><path d="M764 764 H782" stroke="#3ab04a" stroke-width="3"/><circle cx="782" cy="772" r="6" fill="#5cc860"/><circle cx="782" cy="760" r="5" fill="#5cc860"/><rect x="735" y="820" width="32" height="32" rx="6" fill="#2c0406"/><rect x="738" y="823" width="26" height="26" rx="4" fill="#3ab04a" stroke="#7ad07a" stroke-width="1.5"/><path d="M764 836 H782" stroke="#3ab04a" stroke-width="3"/><circle cx="782" cy="844" r="6" fill="#5cc860"/><circle cx="782" cy="832" r="5" fill="#5cc860"/><path d="M782 680 V800" stroke="#3ab04a" stroke-width="3"/><path d="M964 732 L964 818" stroke="#2c0406" stroke-width="9" fill="none" stroke-linejoin="round" stroke-linecap="round"/><path d="M964 732 L964 818" stroke="#2fa842" stroke-width="3.5" fill="none" stroke-linejoin="round" stroke-linecap="round"/><circle cx="964" cy="732" r="7" fill="#5cc860"/><circle cx="964" cy="818" r="7" fill="#5cc860"/><rect x="766.0" y="860.0" width="58" height="26" rx="12" fill="#2c0406"/><rect x="769.0" y="863.0" width="52" height="20" rx="10" fill="#8a1014"/><rect x="850.0" y="860.0" width="58" height="26" rx="12" fill="#2c0406"/><rect x="853.0" y="863.0" width="52" height="20" rx="10" fill="#8a1014"/><rect x="1206.0" y="862.0" width="62" height="26" rx="12" fill="#2c0406"/><rect x="1209.0" y="865.0" width="56" height="20" rx="10" fill="#8a1014"/><rect x="1282.0" y="862.0" width="62" height="26" rx="12" fill="#2c0406"/><rect x="1285.0" y="865.0" width="56" height="20" rx="10" fill="#8a1014"/><rect x="968" y="524" width="40" height="18" rx="5" fill="#2c0406"/><rect x="972" y="527" width="32" height="12" rx="3" fill="#3ab04a"/><rect x="1040" y="565" width="80" height="75" rx="8" fill="#5a14a0" opacity="0.6"/><rect x="1047" y="574" width="16" height="12" fill="#a040f0"/><rect x="1072" y="579" width="16" height="12" fill="#a040f0"/><rect x="1092" y="594" width="16" height="12" fill="#a040f0"/><rect x="1052" y="609" width="16" height="12" fill="#a040f0"/><rect x="1077" y="619" width="16" height="12" fill="#a040f0"/><rect x="1042" y="629" width="16" height="12" fill="#a040f0"/><rect x="1092" y="624" width="16" height="12" fill="#a040f0"/><path d="M1000 593 H1178 M1000 610 H1178" stroke="#8a2ad8" stroke-width="3"/><rect x="970" y="566" width="34" height="34" fill="#4a1090"/><rect x="970" y="602" width="34" height="34" fill="#4a1090"/><circle cx="987" cy="584" r="16" fill="#2c0406"/><circle cx="987" cy="584" r="10" fill="#f1d6a0"/><circle cx="987" cy="584" r="6.5" fill="#0c0c0c"/><circle cx="987" cy="620" r="16" fill="#2c0406"/><circle cx="987" cy="620" r="10" fill="#f1d6a0"/><circle cx="987" cy="620" r="6.5" fill="#0c0c0c"/><rect x="1012.0" y="545.0" width="42" height="40" rx="6" fill="#2c0406"/><rect x="1015.0" y="548.0" width="36" height="34" rx="4" fill="#b81a22"/><text x="1033" y="575" font-size="22" fill="#e8c8c8" text-anchor="middle" font-family="Liberation Sans">4</text><rect x="1012.0" y="613.0" width="42" height="40" rx="6" fill="#2c0406"/><rect x="1015.0" y="616.0" width="36" height="34" rx="4" fill="#8e1216"/><text x="1033" y="643" font-size="22" fill="#d8a0a0" text-anchor="middle" font-family="Liberation Sans">3</text><path d="M1244 632 H1455" stroke="#8a2ad8" stroke-width="5"/><rect x="1276" y="620" width="18" height="22" rx="4" fill="#7a28d0"/><rect x="1280" y="624" width="10" height="6" fill="#a860f0"/><rect x="1296" y="620" width="18" height="22" rx="4" fill="#7a28d0"/><rect x="1300" y="624" width="10" height="6" fill="#a860f0"/><rect x="1316" y="620" width="18" height="22" rx="4" fill="#7a28d0"/><rect x="1320" y="624" width="10" height="6" fill="#a860f0"/><rect x="1336" y="620" width="18" height="22" rx="4" fill="#7a28d0"/><rect x="1340" y="624" width="10" height="6" fill="#a860f0"/><rect x="1432" y="621" width="26" height="22" rx="3" fill="#8a30e0"/><rect x="1164" y="580" width="92" height="100" fill="#3a0507" opacity="0.9"/><rect x="1176" y="591" width="69" height="77" fill="#c81e26"/><text x="1210" y="630" font-size="30" fill="#f0d8d8" text-anchor="middle" font-family="Liberation Sans">49</text><text x="1210" y="662" font-size="22" fill="#f4b8c0" text-anchor="middle" font-family="Liberation Sans">GND</text><path d="M1214 429 L1225 445 L1225 598" stroke="#2c0406" stroke-width="8" fill="none" stroke-linejoin="round" stroke-linecap="round"/><path d="M1214 429 L1225 445 L1225 598" stroke="#2fa842" stroke-width="3.5" fill="none" stroke-linejoin="round" stroke-linecap="round"/><rect x="1207" y="425" width="16" height="34" rx="4" fill="#3ab04a"/><path d="M1215 526 L1215 598" stroke="#2fa842" stroke-width="3" fill="none" stroke-linejoin="round" stroke-linecap="round"/><circle cx="1215" cy="526" r="6" fill="#5cc860"/><path d="M1235 493 V598 M1244 462 V598" stroke="#2a4fd8" stroke-width="3"/><circle cx="1244" cy="462" r="6" fill="#7890ff"/><circle cx="1235" cy="493" r="5" fill="#7890ff"/><path d="M1189 670 L1189 770 L1185 785" stroke="#2c0406" stroke-width="7" fill="none" stroke-linejoin="round" stroke-linecap="round"/><path d="M1189 670 L1189 770 L1185 785" stroke="#2fa842" stroke-width="2.8" fill="none" stroke-linejoin="round" stroke-linecap="round"/><path d="M1196 670 L1196 740 L1204 753" stroke="#2c0406" stroke-width="7" fill="none" stroke-linejoin="round" stroke-linecap="round"/><path d="M1196 670 L1196 740 L1204 753" stroke="#2fa842" stroke-width="2.8" fill="none" stroke-linejoin="round" stroke-linecap="round"/><path d="M1203 670 L1203 730 L1210 742" stroke="#2c0406" stroke-width="7" fill="none" stroke-linejoin="round" stroke-linecap="round"/><path d="M1203 670 L1203 730 L1210 742" stroke="#2fa842" stroke-width="2.8" fill="none" stroke-linejoin="round" stroke-linecap="round"/><path d="M1211 670 L1211 750 L1217 768" stroke="#2c0406" stroke-width="7" fill="none" stroke-linejoin="round" stroke-linecap="round"/><path d="M1211 670 L1211 750 L1217 768" stroke="#2fa842" stroke-width="2.8" fill="none" stroke-linejoin="round" stroke-linecap="round"/><path d="M1219 670 L1219 760 L1228 775 L1228 790 L1215 801" stroke="#2c0406" stroke-width="7" fill="none" stroke-linejoin="round" stroke-linecap="round"/><path d="M1219 670 L1219 760 L1228 775 L1228 790 L1215 801" stroke="#2fa842" stroke-width="2.8" fill="none" stroke-linejoin="round" stroke-linecap="round"/><path d="M1232 670 L1232 720 L1240 735 L1240 760 L1203 765" stroke="#2c0406" stroke-width="7" fill="none" stroke-linejoin="round" stroke-linecap="round"/><path d="M1232 670 L1232 720 L1240 735 L1240 760 L1203 765" stroke="#2fa842" stroke-width="2.8" fill="none" stroke-linejoin="round" stroke-linecap="round"/><path d="M1240 650 L1258 668 L1262 682" stroke="#2c0406" stroke-width="7" fill="none" stroke-linejoin="round" stroke-linecap="round"/><path d="M1240 650 L1258 668 L1262 682" stroke="#2fa842" stroke-width="2.8" fill="none" stroke-linejoin="round" stroke-linecap="round"/><path d="M1246 662 L1262 690 L1261 696" stroke="#2c0406" stroke-width="7" fill="none" stroke-linejoin="round" stroke-linecap="round"/><path d="M1246 662 L1262 690 L1261 696" stroke="#2fa842" stroke-width="2.8" fill="none" stroke-linejoin="round" stroke-linecap="round"/><path d="M1250 670 L1274 700 L1274 739" stroke="#2c0406" stroke-width="7" fill="none" stroke-linejoin="round" stroke-linecap="round"/><path d="M1250 670 L1274 700 L1274 739" stroke="#2fa842" stroke-width="2.8" fill="none" stroke-linejoin="round" stroke-linecap="round"/><path d="M1176 670 L1151 664" stroke="#2c0406" stroke-width="7" fill="none" stroke-linejoin="round" stroke-linecap="round"/><path d="M1176 670 L1151 664" stroke="#2fa842" stroke-width="2.8" fill="none" stroke-linejoin="round" stroke-linecap="round"/><path d="M1180 672 L1154 676" stroke="#2c0406" stroke-width="7" fill="none" stroke-linejoin="round" stroke-linecap="round"/><path d="M1180 672 L1154 676" stroke="#2fa842" stroke-width="2.8" fill="none" stroke-linejoin="round" stroke-linecap="round"/><path d="M1185 675 L1164 683" stroke="#2c0406" stroke-width="7" fill="none" stroke-linejoin="round" stroke-linecap="round"/><path d="M1185 675 L1164 683" stroke="#2fa842" stroke-width="2.8" fill="none" stroke-linejoin="round" stroke-linecap="round"/><path d="M1188 680 L1176 690" stroke="#2c0406" stroke-width="7" fill="none" stroke-linejoin="round" stroke-linecap="round"/><path d="M1188 680 L1176 690" stroke="#2fa842" stroke-width="2.8" fill="none" stroke-linejoin="round" stroke-linecap="round"/><circle cx="1185" cy="785" r="6" fill="#5cc860"/><circle cx="1215" cy="801" r="6" fill="#5cc860"/><circle cx="1203" cy="765" r="6" fill="#5cc860"/><circle cx="1217" cy="768" r="6" fill="#5cc860"/><circle cx="1210" cy="742" r="6" fill="#5cc860"/><circle cx="1204" cy="753" r="6" fill="#5cc860"/><circle cx="1151" cy="664" r="6" fill="#5cc860"/><circle cx="1154" cy="676" r="6" fill="#5cc860"/><circle cx="1164" cy="683" r="6" fill="#5cc860"/><circle cx="1176" cy="690" r="6" fill="#5cc860"/><circle cx="1262" cy="682" r="6" fill="#5cc860"/><circle cx="1261" cy="696" r="6" fill="#5cc860"/><circle cx="1274" cy="739" r="6" fill="#5cc860"/><rect x="1176" y="668" width="62" height="12" fill="#3ab04a"/><path d="M1313 686 L1313 736" stroke="#2c0406" stroke-width="8" fill="none" stroke-linejoin="round" stroke-linecap="round"/><path d="M1313 686 L1313 736" stroke="#2fa842" stroke-width="3" fill="none" stroke-linejoin="round" stroke-linecap="round"/><path d="M1328 694 L1328 757" stroke="#2c0406" stroke-width="8" fill="none" stroke-linejoin="round" stroke-linecap="round"/><path d="M1328 694 L1328 757" stroke="#2fa842" stroke-width="3" fill="none" stroke-linejoin="round" stroke-linecap="round"/><circle cx="1313" cy="686" r="6" fill="#5cc860"/><circle cx="1313" cy="736" r="6" fill="#5cc860"/><circle cx="1328" cy="694" r="6" fill="#5cc860"/><circle cx="1328" cy="757" r="6" fill="#5cc860"/><rect x="1020" y="755" width="56" height="54" fill="#3a0507" opacity="0.85"/><rect x="1029" y="764" width="38" height="38" fill="#c81e26"/><text x="1047" y="784" font-size="18" fill="#f0c8c8" text-anchor="middle" font-family="Liberation Sans">17</text><text x="1047" y="799" font-size="12" fill="#f4b0b8" text-anchor="middle" font-family="Liberation Sans">GND</text><path d="M1067 770 L1090 770 L1111 743" stroke="#2c0406" stroke-width="7" fill="none" stroke-linejoin="round" stroke-linecap="round"/><path d="M1067 770 L1090 770 L1111 743" stroke="#2fa842" stroke-width="2.8" fill="none" stroke-linejoin="round" stroke-linecap="round"/><path d="M1067 780 L1100 775" stroke="#2c0406" stroke-width="7" fill="none" stroke-linejoin="round" stroke-linecap="round"/><path d="M1067 780 L1100 775" stroke="#2fa842" stroke-width="2.8" fill="none" stroke-linejoin="round" stroke-linecap="round"/><path d="M1067 790 L1090 790 L1103 803" stroke="#2c0406" stroke-width="7" fill="none" stroke-linejoin="round" stroke-linecap="round"/><path d="M1067 790 L1090 790 L1103 803" stroke="#2fa842" stroke-width="2.8" fill="none" stroke-linejoin="round" stroke-linecap="round"/><path d="M1029 775 L1007 753" stroke="#2c0406" stroke-width="7" fill="none" stroke-linejoin="round" stroke-linecap="round"/><path d="M1029 775 L1007 753" stroke="#2fa842" stroke-width="2.8" fill="none" stroke-linejoin="round" stroke-linecap="round"/><path d="M1029 785 L1000 764" stroke="#2c0406" stroke-width="7" fill="none" stroke-linejoin="round" stroke-linecap="round"/><path d="M1029 785 L1000 764" stroke="#2fa842" stroke-width="2.8" fill="none" stroke-linejoin="round" stroke-linecap="round"/><circle cx="1111" cy="743" r="6" fill="#5cc860"/><circle cx="1100" cy="775" r="6" fill="#5cc860"/><circle cx="1103" cy="803" r="6" fill="#5cc860"/><circle cx="1007" cy="753" r="6" fill="#5cc860"/><circle cx="1000" cy="764" r="6" fill="#5cc860"/><rect x="1067" y="766" width="14" height="8" fill="#3ab04a"/><rect x="1015" y="766" width="14" height="8" fill="#3ab04a"/><rect x="1067" y="778" width="14" height="8" fill="#3ab04a"/><rect x="1015" y="778" width="14" height="8" fill="#3ab04a"/><rect x="1067" y="790" width="14" height="8" fill="#3ab04a"/><rect x="1015" y="790" width="14" height="8" fill="#3ab04a"/><rect x="1451" y="687" width="34" height="34" fill="#2c0406"/><rect x="1454" y="690" width="28" height="28" fill="#d01e26"/><circle cx="1468" cy="704" r="11" fill="#f1d6a0"/><circle cx="1468" cy="704" r="7.5" fill="#0c0c0c"/><circle cx="1468" cy="740" r="20" fill="#2c0406"/><circle cx="1468" cy="740" r="16" fill="#30a040"/><circle cx="1468" cy="740" r="10" fill="#f1d6a0"/><circle cx="1468" cy="740" r="7" fill="#111"/><circle cx="1468" cy="776" r="20" fill="#2c0406"/><circle cx="1468" cy="776" r="16" fill="#30a040"/><circle cx="1468" cy="776" r="10" fill="#f1d6a0"/><circle cx="1468" cy="776" r="7" fill="#111"/><rect x="1350.0" y="678.0" width="38" height="38" rx="18" fill="#2c0406"/><rect x="1353.0" y="681.0" width="32" height="32" rx="16" fill="#8a1014"/><rect x="1387.0" y="678.0" width="38" height="38" rx="18" fill="#2c0406"/><rect x="1390.0" y="681.0" width="32" height="32" rx="16" fill="#8a1014"/><circle cx="1392" cy="451" r="10" fill="#2c0406"/><circle cx="1392" cy="451" r="4" fill="#ffb45a"/><circle cx="1392" cy="451" r="1.8" fill="#fff0c8"/><circle cx="1349" cy="509" r="10" fill="#2c0406"/><circle cx="1349" cy="509" r="4" fill="#ffb45a"/><circle cx="1349" cy="509" r="1.8" fill="#fff0c8"/><circle cx="1347" cy="579" r="10" fill="#2c0406"/><circle cx="1347" cy="579" r="4" fill="#ffb45a"/><circle cx="1347" cy="579" r="1.8" fill="#fff0c8"/><circle cx="1496" cy="548" r="10" fill="#2c0406"/><circle cx="1496" cy="548" r="4" fill="#ffb45a"/><circle cx="1496" cy="548" r="1.8" fill="#fff0c8"/><circle cx="456" cy="415" r="8.5" fill="#5a080a"/><circle cx="456" cy="415" r="5.5" fill="#f1d6a0"/><circle cx="456" cy="415" r="2.475" fill="#2a0404"/><circle cx="527" cy="415" r="8.5" fill="#5a080a"/><circle cx="527" cy="415" r="5.5" fill="#f1d6a0"/><circle cx="527" cy="415" r="2.475" fill="#2a0404"/><circle cx="698" cy="415" r="8.5" fill="#5a080a"/><circle cx="698" cy="415" r="5.5" fill="#f1d6a0"/><circle cx="698" cy="415" r="2.475" fill="#2a0404"/><circle cx="768" cy="415" r="8.5" fill="#5a080a"/><circle cx="768" cy="415" r="5.5" fill="#f1d6a0"/><circle cx="768" cy="415" r="2.475" fill="#2a0404"/><circle cx="839" cy="415" r="8.5" fill="#5a080a"/><circle cx="839" cy="415" r="5.5" fill="#f1d6a0"/><circle cx="839" cy="415" r="2.475" fill="#2a0404"/><circle cx="1289" cy="415" r="8.5" fill="#5a080a"/><circle cx="1289" cy="415" r="5.5" fill="#f1d6a0"/><circle cx="1289" cy="415" r="2.475" fill="#2a0404"/><circle cx="1358" cy="415" r="8.5" fill="#5a080a"/><circle cx="1358" cy="415" r="5.5" fill="#f1d6a0"/><circle cx="1358" cy="415" r="2.475" fill="#2a0404"/><circle cx="389" cy="457" r="8.5" fill="#5a080a"/><circle cx="389" cy="457" r="5.5" fill="#f1d6a0"/><circle cx="389" cy="457" r="2.475" fill="#2a0404"/><circle cx="389" cy="527" r="8.5" fill="#5a080a"/><circle cx="389" cy="527" r="5.5" fill="#f1d6a0"/><circle cx="389" cy="527" r="2.475" fill="#2a0404"/><circle cx="389" cy="597" r="8.5" fill="#5a080a"/><circle cx="389" cy="597" r="5.5" fill="#f1d6a0"/><circle cx="389" cy="597" r="2.475" fill="#2a0404"/><circle cx="389" cy="668" r="8.5" fill="#5a080a"/><circle cx="389" cy="668" r="5.5" fill="#f1d6a0"/><circle cx="389" cy="668" r="2.475" fill="#2a0404"/><circle cx="389" cy="738" r="8.5" fill="#5a080a"/><circle cx="389" cy="738" r="5.5" fill="#f1d6a0"/><circle cx="389" cy="738" r="2.475" fill="#2a0404"/><circle cx="389" cy="808" r="8.5" fill="#5a080a"/><circle cx="389" cy="808" r="5.5" fill="#f1d6a0"/><circle cx="389" cy="808" r="2.475" fill="#2a0404"/><circle cx="389" cy="878" r="8.5" fill="#5a080a"/><circle cx="389" cy="878" r="5.5" fill="#f1d6a0"/><circle cx="389" cy="878" r="2.475" fill="#2a0404"/><circle cx="389" cy="932" r="8.5" fill="#5a080a"/><circle cx="389" cy="932" r="5.5" fill="#f1d6a0"/><circle cx="389" cy="932" r="2.475" fill="#2a0404"/><circle cx="424" cy="587" r="8.5" fill="#5a080a"/><circle cx="424" cy="587" r="5.5" fill="#f1d6a0"/><circle cx="424" cy="587" r="2.475" fill="#2a0404"/><circle cx="571" cy="619" r="8.5" fill="#5a080a"/><circle cx="571" cy="619" r="5.5" fill="#f1d6a0"/><circle cx="571" cy="619" r="2.475" fill="#2a0404"/><circle cx="656" cy="615" r="8.5" fill="#5a080a"/><circle cx="656" cy="615" r="5.5" fill="#f1d6a0"/><circle cx="656" cy="615" r="2.475" fill="#2a0404"/><circle cx="708" cy="615" r="8.5" fill="#5a080a"/><circle cx="708" cy="615" r="5.5" fill="#f1d6a0"/><circle cx="708" cy="615" r="2.475" fill="#2a0404"/><circle cx="780" cy="675" r="8.5" fill="#5a080a"/><circle cx="780" cy="675" r="5.5" fill="#f1d6a0"/><circle cx="780" cy="675" r="2.475" fill="#2a0404"/><circle cx="780" cy="796" r="8.5" fill="#5a080a"/><circle cx="780" cy="796" r="5.5" fill="#f1d6a0"/><circle cx="780" cy="796" r="2.475" fill="#2a0404"/><circle cx="808" cy="808" r="8.5" fill="#5a080a"/><circle cx="808" cy="808" r="5.5" fill="#f1d6a0"/><circle cx="808" cy="808" r="2.475" fill="#2a0404"/><circle cx="617" cy="972" r="8.5" fill="#5a080a"/><circle cx="617" cy="972" r="5.5" fill="#f1d6a0"/><circle cx="617" cy="972" r="2.475" fill="#2a0404"/><circle cx="834" cy="883" r="8.5" fill="#5a080a"/><circle cx="834" cy="883" r="5.5" fill="#f1d6a0"/><circle cx="834" cy="883" r="2.475" fill="#2a0404"/><circle cx="919" cy="883" r="8.5" fill="#5a080a"/><circle cx="919" cy="883" r="5.5" fill="#f1d6a0"/><circle cx="919" cy="883" r="2.475" fill="#2a0404"/><circle cx="900" cy="654" r="8.5" fill="#5a080a"/><circle cx="900" cy="654" r="5.5" fill="#f1d6a0"/><circle cx="900" cy="654" r="2.475" fill="#2a0404"/><circle cx="900" cy="697" r="8.5" fill="#5a080a"/><circle cx="900" cy="697" r="5.5" fill="#f1d6a0"/><circle cx="900" cy="697" r="2.475" fill="#2a0404"/><circle cx="923" cy="767" r="8.5" fill="#5a080a"/><circle cx="923" cy="767" r="5.5" fill="#f1d6a0"/><circle cx="923" cy="767" r="2.475" fill="#2a0404"/><circle cx="983" cy="754" r="8.5" fill="#5a080a"/><circle cx="983" cy="754" r="5.5" fill="#f1d6a0"/><circle cx="983" cy="754" r="2.475" fill="#2a0404"/><circle cx="1094" cy="444" r="8.5" fill="#5a080a"/><circle cx="1094" cy="444" r="5.5" fill="#f1d6a0"/><circle cx="1094" cy="444" r="2.475" fill="#2a0404"/><circle cx="1128" cy="497" r="8.5" fill="#5a080a"/><circle cx="1128" cy="497" r="5.5" fill="#f1d6a0"/><circle cx="1128" cy="497" r="2.475" fill="#2a0404"/><circle cx="1378" cy="462" r="8.5" fill="#5a080a"/><circle cx="1378" cy="462" r="5.5" fill="#f1d6a0"/><circle cx="1378" cy="462" r="2.475" fill="#2a0404"/><circle cx="1496" cy="515" r="8.5" fill="#5a080a"/><circle cx="1496" cy="515" r="5.5" fill="#f1d6a0"/><circle cx="1496" cy="515" r="2.475" fill="#2a0404"/><circle cx="1496" cy="586" r="8.5" fill="#5a080a"/><circle cx="1496" cy="586" r="5.5" fill="#f1d6a0"/><circle cx="1496" cy="586" r="2.475" fill="#2a0404"/><circle cx="1372" cy="618" r="8.5" fill="#5a080a"/><circle cx="1372" cy="618" r="5.5" fill="#f1d6a0"/><circle cx="1372" cy="618" r="2.475" fill="#2a0404"/><circle cx="1421" cy="618" r="8.5" fill="#5a080a"/><circle cx="1421" cy="618" r="5.5" fill="#f1d6a0"/><circle cx="1421" cy="618" r="2.475" fill="#2a0404"/><circle cx="1421" cy="649" r="8.5" fill="#5a080a"/><circle cx="1421" cy="649" r="5.5" fill="#f1d6a0"/><circle cx="1421" cy="649" r="2.475" fill="#2a0404"/><circle cx="1496" cy="678" r="8.5" fill="#5a080a"/><circle cx="1496" cy="678" r="5.5" fill="#f1d6a0"/><circle cx="1496" cy="678" r="2.475" fill="#2a0404"/><circle cx="1337" cy="707" r="8.5" fill="#5a080a"/><circle cx="1337" cy="707" r="5.5" fill="#f1d6a0"/><circle cx="1337" cy="707" r="2.475" fill="#2a0404"/><circle cx="1305" cy="750" r="8.5" fill="#5a080a"/><circle cx="1305" cy="750" r="5.5" fill="#f1d6a0"/><circle cx="1305" cy="750" r="2.475" fill="#2a0404"/><circle cx="1496" cy="747" r="8.5" fill="#5a080a"/><circle cx="1496" cy="747" r="5.5" fill="#f1d6a0"/><circle cx="1496" cy="747" r="2.475" fill="#2a0404"/><circle cx="1496" cy="818" r="8.5" fill="#5a080a"/><circle cx="1496" cy="818" r="5.5" fill="#f1d6a0"/><circle cx="1496" cy="818" r="2.475" fill="#2a0404"/><circle cx="1303" cy="838" r="8.5" fill="#5a080a"/><circle cx="1303" cy="838" r="5.5" fill="#f1d6a0"/><circle cx="1303" cy="838" r="2.475" fill="#2a0404"/><circle cx="1201" cy="890" r="8.5" fill="#5a080a"/><circle cx="1201" cy="890" r="5.5" fill="#f1d6a0"/><circle cx="1201" cy="890" r="2.475" fill="#2a0404"/><circle cx="1279" cy="883" r="8.5" fill="#5a080a"/><circle cx="1279" cy="883" r="5.5" fill="#f1d6a0"/><circle cx="1279" cy="883" r="2.475" fill="#2a0404"/><circle cx="1496" cy="947" r="8.5" fill="#5a080a"/><circle cx="1496" cy="947" r="5.5" fill="#f1d6a0"/><circle cx="1496" cy="947" r="2.475" fill="#2a0404"/><circle cx="1112" cy="635" r="8.5" fill="#5a080a"/><circle cx="1112" cy="635" r="5.5" fill="#f1d6a0"/><circle cx="1112" cy="635" r="2.475" fill="#2a0404"/><circle cx="1112" cy="678" r="8.5" fill="#5a080a"/><circle cx="1112" cy="678" r="5.5" fill="#f1d6a0"/><circle cx="1112" cy="678" r="2.475" fill="#2a0404"/><circle cx="1178" cy="706" r="8.5" fill="#5a080a"/><circle cx="1178" cy="706" r="5.5" fill="#f1d6a0"/><circle cx="1178" cy="706" r="2.475" fill="#2a0404"/><circle cx="1139" cy="821" r="8.5" fill="#5a080a"/><circle cx="1139" cy="821" r="5.5" fill="#f1d6a0"/><circle cx="1139" cy="821" r="2.475" fill="#2a0404"/><circle cx="933" cy="567" r="8.5" fill="#5a080a"/><circle cx="933" cy="567" r="5.5" fill="#f1d6a0"/><circle cx="933" cy="567" r="2.475" fill="#2a0404"/><circle cx="506" cy="415" r="10" fill="#5a080a"/><circle cx="864" cy="415" r="3.4" fill="#ffb45a"/><circle cx="864" cy="415" r="1.53" fill="#fff0c8"/><circle cx="878" cy="415" r="3.4" fill="#ffb45a"/><circle cx="878" cy="415" r="1.53" fill="#fff0c8"/><circle cx="1105" cy="415" r="3.4" fill="#ffb45a"/><circle cx="1105" cy="415" r="1.53" fill="#fff0c8"/><circle cx="1186" cy="415" r="3.4" fill="#ffb45a"/><circle cx="1186" cy="415" r="1.53" fill="#fff0c8"/><circle cx="1257" cy="415" r="3.4" fill="#ffb45a"/><circle cx="1257" cy="415" r="1.53" fill="#fff0c8"/><circle cx="817" cy="486" r="3.4" fill="#ffb45a"/><circle cx="817" cy="486" r="1.53" fill="#fff0c8"/><circle cx="851" cy="515" r="3.4" fill="#ffb45a"/><circle cx="851" cy="515" r="1.53" fill="#fff0c8"/><circle cx="873" cy="516" r="3.4" fill="#ffb45a"/><circle cx="873" cy="516" r="1.53" fill="#fff0c8"/><circle cx="880" cy="530" r="3.4" fill="#ffb45a"/><circle cx="880" cy="530" r="1.53" fill="#fff0c8"/><circle cx="701" cy="533" r="3.4" fill="#ffb45a"/><circle cx="701" cy="533" r="1.53" fill="#fff0c8"/><circle cx="716" cy="515" r="3.4" fill="#ffb45a"/><circle cx="716" cy="515" r="1.53" fill="#fff0c8"/><circle cx="682" cy="500" r="3.4" fill="#ffb45a"/><circle cx="682" cy="500" r="1.53" fill="#fff0c8"/><circle cx="666" cy="487" r="3.4" fill="#ffb45a"/><circle cx="666" cy="487" r="1.53" fill="#fff0c8"/><circle cx="697" cy="487" r="3.4" fill="#ffb45a"/><circle cx="697" cy="487" r="1.53" fill="#fff0c8"/><circle cx="650" cy="580" r="3.4" fill="#ffb45a"/><circle cx="650" cy="580" r="1.53" fill="#fff0c8"/><circle cx="634" cy="559" r="3.4" fill="#ffb45a"/><circle cx="634" cy="559" r="1.53" fill="#fff0c8"/><circle cx="683" cy="422" r="3.4" fill="#ffb45a"/><circle cx="683" cy="422" r="1.53" fill="#fff0c8"/><circle cx="765" cy="543" r="3.4" fill="#ffb45a"/><circle cx="765" cy="543" r="1.53" fill="#fff0c8"/><circle cx="779" cy="543" r="3.4" fill="#ffb45a"/><circle cx="779" cy="543" r="1.53" fill="#fff0c8"/><circle cx="800" cy="568" r="3.4" fill="#ffb45a"/><circle cx="800" cy="568" r="1.53" fill="#fff0c8"/><circle cx="818" cy="557" r="3.4" fill="#ffb45a"/><circle cx="818" cy="557" r="1.53" fill="#fff0c8"/><circle cx="577" cy="520" r="3.4" fill="#ffb45a"/><circle cx="577" cy="520" r="1.53" fill="#fff0c8"/><circle cx="540" cy="518" r="3.4" fill="#ffb45a"/><circle cx="540" cy="518" r="1.53" fill="#fff0c8"/><circle cx="494" cy="545" r="3.4" fill="#ffb45a"/><circle cx="494" cy="545" r="1.53" fill="#fff0c8"/><circle cx="494" cy="565" r="3.4" fill="#ffb45a"/><circle cx="494" cy="565" r="1.53" fill="#fff0c8"/><circle cx="1060" cy="690" r="3.4" fill="#ffb45a"/><circle cx="1060" cy="690" r="1.53" fill="#fff0c8"/><circle cx="1080" cy="700" r="3.4" fill="#ffb45a"/><circle cx="1080" cy="700" r="1.53" fill="#fff0c8"/><circle cx="1140" cy="720" r="3.4" fill="#ffb45a"/><circle cx="1140" cy="720" r="1.53" fill="#fff0c8"/><circle cx="1160" cy="600" r="3.4" fill="#ffb45a"/><circle cx="1160" cy="600" r="1.53" fill="#fff0c8"/><circle cx="1130" cy="580" r="3.4" fill="#ffb45a"/><circle cx="1130" cy="580" r="1.53" fill="#fff0c8"/><circle cx="1100" cy="560" r="3.4" fill="#ffb45a"/><circle cx="1100" cy="560" r="1.53" fill="#fff0c8"/><circle cx="1290" cy="650" r="3.4" fill="#ffb45a"/><circle cx="1290" cy="650" r="1.53" fill="#fff0c8"/><circle cx="1300" cy="600" r="3.4" fill="#ffb45a"/><circle cx="1300" cy="600" r="1.53" fill="#fff0c8"/><circle cx="1350" cy="640" r="3.4" fill="#ffb45a"/><circle cx="1350" cy="640" r="1.53" fill="#fff0c8"/><circle cx="1390" cy="640" r="3.4" fill="#ffb45a"/><circle cx="1390" cy="640" r="1.53" fill="#fff0c8"/><circle cx="1410" cy="600" r="3.4" fill="#ffb45a"/><circle cx="1410" cy="600" r="1.53" fill="#fff0c8"/><circle cx="1420" cy="660" r="3.4" fill="#ffb45a"/><circle cx="1420" cy="660" r="1.53" fill="#fff0c8"/><circle cx="1440" cy="690" r="3.4" fill="#ffb45a"/><circle cx="1440" cy="690" r="1.53" fill="#fff0c8"/><circle cx="1380" cy="720" r="3.4" fill="#ffb45a"/><circle cx="1380" cy="720" r="1.53" fill="#fff0c8"/><circle cx="1250" cy="820" r="3.4" fill="#ffb45a"/><circle cx="1250" cy="820" r="1.53" fill="#fff0c8"/><circle cx="1230" cy="850" r="3.4" fill="#ffb45a"/><circle cx="1230" cy="850" r="1.53" fill="#fff0c8"/><circle cx="1190" cy="870" r="3.4" fill="#ffb45a"/><circle cx="1190" cy="870" r="1.53" fill="#fff0c8"/><circle cx="1080" cy="830" r="3.4" fill="#ffb45a"/><circle cx="1080" cy="830" r="1.53" fill="#fff0c8"/><circle cx="1010" cy="740" r="3.4" fill="#ffb45a"/><circle cx="1010" cy="740" r="1.53" fill="#fff0c8"/><circle cx="1040" cy="840" r="3.4" fill="#ffb45a"/><circle cx="1040" cy="840" r="1.53" fill="#fff0c8"/><circle cx="1090" cy="860" r="3.4" fill="#ffb45a"/><circle cx="1090" cy="860" r="1.53" fill="#fff0c8"/><circle cx="1060" cy="900" r="3.4" fill="#ffb45a"/><circle cx="1060" cy="900" r="1.53" fill="#fff0c8"/><circle cx="1010" cy="880" r="3.4" fill="#ffb45a"/><circle cx="1010" cy="880" r="1.53" fill="#fff0c8"/><circle cx="930" cy="800" r="3.4" fill="#ffb45a"/><circle cx="930" cy="800" r="1.53" fill="#fff0c8"/><circle cx="1000" cy="840" r="3.4" fill="#ffb45a"/><circle cx="1000" cy="840" r="1.53" fill="#fff0c8"/><circle cx="1150" cy="800" r="3.4" fill="#ffb45a"/><circle cx="1150" cy="800" r="1.53" fill="#fff0c8"/><circle cx="583" cy="450" r="48" fill="url(#glow)" clip-path="url(#cu)"/><circle cx="583" cy="450" r="25" fill="#000" stroke="#f1d6a0" stroke-width="2"/><text x="583" y="444" font-size="30" fill="#d8d0d0" text-anchor="middle" font-family="Liberation Serif">1</text><text x="583" y="481" font-size="24" fill="#f0a0b0" text-anchor="middle" font-family="Liberation Sans">GND</text><circle cx="1462" cy="449" r="48" fill="url(#glow)" clip-path="url(#cu)"/><circle cx="1462" cy="449" r="25" fill="#000" stroke="#f1d6a0" stroke-width="2"/><text x="1462" y="443" font-size="30" fill="#d8d0d0" text-anchor="middle" font-family="Liberation Serif">1</text><text x="1462" y="480" font-size="24" fill="#f0a0b0" text-anchor="middle" font-family="Liberation Sans">GND</text><circle cx="1462" cy="865" r="48" fill="url(#glow)" clip-path="url(#cu)"/><circle cx="1462" cy="865" r="25" fill="#000" stroke="#f1d6a0" stroke-width="2"/><text x="1462" y="859" font-size="30" fill="#d8d0d0" text-anchor="middle" font-family="Liberation Serif">1</text><text x="1462" y="896" font-size="24" fill="#f0a0b0" text-anchor="middle" font-family="Liberation Sans">GND</text><path d="M630 996 L712 909 L827 909 L827 1206 L630 1206Z" fill="url(#hatch)" stroke="#1e0602" stroke-width="6" stroke-linejoin="round"/><path d="M834 909 L985 909 L1058 970 L1058 1206 L834 1206Z" fill="url(#hatch)" stroke="#1e0602" stroke-width="6" stroke-linejoin="round"/><path d="M1066 930 L1078 909 L1284 909 L1284 1206 L1066 1206Z" fill="url(#hatch)" stroke="#1e0602" stroke-width="6" stroke-linejoin="round"/><path d="M1290 909 L1428 909 L1508 990 L1508 1166 Q1508 1206 1468 1206 L1290 1206Z" fill="url(#hatch)" stroke="#1e0602" stroke-width="6" stroke-linejoin="round"/><path d="M651 1140 L651 985 L722 925 L827 925" stroke="#1a0500" stroke-width="20" fill="none" stroke-linejoin="round"/><path d="M799 985 L799 1140" stroke="#1a0500" stroke-width="20" fill="none" stroke-linejoin="round"/><path d="M871 1140 L871 985" stroke="#1a0500" stroke-width="20" fill="none" stroke-linejoin="round"/><path d="M1018 1140 L1018 970 L975 925 L845 925" stroke="#1a0500" stroke-width="20" fill="none" stroke-linejoin="round"/><path d="M1104 1140 L1104 985 L1160 925 L1265 925" stroke="#1a0500" stroke-width="20" fill="none" stroke-linejoin="round"/><path d="M1250 985 L1250 1140" stroke="#1a0500" stroke-width="20" fill="none" stroke-linejoin="round"/><path d="M1320 1140 L1320 985" stroke="#1a0500" stroke-width="20" fill="none" stroke-linejoin="round"/><path d="M1468 1140 L1468 975 L1410 925 L1290 925" stroke="#1a0500" stroke-width="20" fill="none" stroke-linejoin="round"/><path d="M651 1140 L651 985 L722 925 L827 925" stroke="#f28c2c" stroke-width="10" fill="none" stroke-linejoin="round"/><path d="M799 985 L799 1140" stroke="#f28c2c" stroke-width="10" fill="none" stroke-linejoin="round"/><path d="M871 1140 L871 985" stroke="#f28c2c" stroke-width="10" fill="none" stroke-linejoin="round"/><path d="M1018 1140 L1018 970 L975 925 L845 925" stroke="#f28c2c" stroke-width="10" fill="none" stroke-linejoin="round"/><path d="M1104 1140 L1104 985 L1160 925 L1265 925" stroke="#f28c2c" stroke-width="10" fill="none" stroke-linejoin="round"/><path d="M1250 985 L1250 1140" stroke="#f28c2c" stroke-width="10" fill="none" stroke-linejoin="round"/><path d="M1320 1140 L1320 985" stroke="#f28c2c" stroke-width="10" fill="none" stroke-linejoin="round"/><path d="M1468 1140 L1468 975 L1410 925 L1290 925" stroke="#f28c2c" stroke-width="10" fill="none" stroke-linejoin="round"/><rect x="768" y="910" width="58" height="24" rx="8" fill="#1a0500"/><rect x="772" y="914" width="50" height="16" rx="2" fill="#f28c2c"/><rect x="763" y="906" width="68" height="32" rx="12" fill="none" stroke="#e8a070" stroke-width="1" opacity="0.5"/><rect x="768" y="940" width="58" height="24" rx="8" fill="#1a0500"/><rect x="772" y="944" width="50" height="16" rx="2" fill="#f28c2c"/><rect x="763" y="936" width="68" height="32" rx="12" fill="none" stroke="#e8a070" stroke-width="1" opacity="0.5"/><rect x="768" y="973" width="58" height="24" rx="8" fill="#1a0500"/><rect x="772" y="977" width="50" height="16" rx="2" fill="#f28c2c"/><rect x="763" y="969" width="68" height="32" rx="12" fill="none" stroke="#e8a070" stroke-width="1" opacity="0.5"/><rect x="842" y="910" width="58" height="24" rx="8" fill="#1a0500"/><rect x="846" y="914" width="50" height="16" rx="2" fill="#f28c2c"/><rect x="837" y="906" width="68" height="32" rx="12" fill="none" stroke="#e8a070" stroke-width="1" opacity="0.5"/><rect x="842" y="940" width="58" height="24" rx="8" fill="#1a0500"/><rect x="846" y="944" width="50" height="16" rx="2" fill="#f28c2c"/><rect x="837" y="936" width="68" height="32" rx="12" fill="none" stroke="#e8a070" stroke-width="1" opacity="0.5"/><rect x="842" y="973" width="58" height="24" rx="8" fill="#1a0500"/><rect x="846" y="977" width="50" height="16" rx="2" fill="#f28c2c"/><rect x="837" y="969" width="68" height="32" rx="12" fill="none" stroke="#e8a070" stroke-width="1" opacity="0.5"/><rect x="1211" y="910" width="58" height="24" rx="8" fill="#1a0500"/><rect x="1215" y="914" width="50" height="16" rx="2" fill="#f28c2c"/><rect x="1206" y="906" width="68" height="32" rx="12" fill="none" stroke="#e8a070" stroke-width="1" opacity="0.5"/><rect x="1211" y="940" width="58" height="24" rx="8" fill="#1a0500"/><rect x="1215" y="944" width="50" height="16" rx="2" fill="#f28c2c"/><rect x="1206" y="936" width="68" height="32" rx="12" fill="none" stroke="#e8a070" stroke-width="1" opacity="0.5"/><rect x="1211" y="973" width="58" height="24" rx="8" fill="#1a0500"/><rect x="1215" y="977" width="50" height="16" rx="2" fill="#f28c2c"/><rect x="1206" y="969" width="68" height="32" rx="12" fill="none" stroke="#e8a070" stroke-width="1" opacity="0.5"/><rect x="1288" y="910" width="58" height="24" rx="8" fill="#1a0500"/><rect x="1292" y="914" width="50" height="16" rx="2" fill="#f28c2c"/><rect x="1283" y="906" width="68" height="32" rx="12" fill="none" stroke="#e8a070" stroke-width="1" opacity="0.5"/><rect x="1288" y="940" width="58" height="24" rx="8" fill="#1a0500"/><rect x="1292" y="944" width="50" height="16" rx="2" fill="#f28c2c"/><rect x="1283" y="936" width="68" height="32" rx="12" fill="none" stroke="#e8a070" stroke-width="1" opacity="0.5"/><rect x="1288" y="973" width="58" height="24" rx="8" fill="#1a0500"/><rect x="1292" y="977" width="50" height="16" rx="2" fill="#f28c2c"/><rect x="1283" y="969" width="68" height="32" rx="12" fill="none" stroke="#e8a070" stroke-width="1" opacity="0.5"/><circle cx="712" cy="950" r="6" fill="#f7b040"/><circle cx="730" cy="950" r="6" fill="#f7b040"/><circle cx="750" cy="950" r="6" fill="#f7b040"/><circle cx="770" cy="950" r="6" fill="#f7b040"/><circle cx="905" cy="950" r="6" fill="#f7b040"/><circle cx="925" cy="950" r="6" fill="#f7b040"/><circle cx="945" cy="950" r="6" fill="#f7b040"/><circle cx="1175" cy="950" r="6" fill="#f7b040"/><circle cx="1192" cy="950" r="6" fill="#f7b040"/><circle cx="1210" cy="950" r="6" fill="#f7b040"/><circle cx="1382" cy="950" r="6" fill="#f7b040"/><circle cx="1400" cy="950" r="6" fill="#f7b040"/><circle cx="1418" cy="950" r="6" fill="#f7b040"/><rect x="627" y="1016" width="48" height="48" rx="3" fill="#1a0500"/><rect x="633" y="1022" width="36" height="36" fill="#f39a30"/><circle cx="651" cy="1040" r="9" fill="#050000"/><rect x="646" y="1038.5" width="10" height="3" fill="#888"/><circle cx="700" cy="1040" r="23" fill="none" stroke="#1a0500" stroke-width="7" stroke-dasharray="22 8"/><circle cx="700" cy="1040" r="17" fill="#f39a30"/><circle cx="700" cy="1040" r="9" fill="#050000"/><rect x="695" y="1038.5" width="10" height="3" fill="#888"/><circle cx="749" cy="1040" r="23" fill="none" stroke="#1a0500" stroke-width="7" stroke-dasharray="22 8"/><circle cx="749" cy="1040" r="17" fill="#f39a30"/><circle cx="749" cy="1040" r="9" fill="#050000"/><rect x="744" y="1038.5" width="10" height="3" fill="#888"/><circle cx="799" cy="1040" r="23" fill="none" stroke="#1a0500" stroke-width="7" stroke-dasharray="200 0"/><circle cx="799" cy="1040" r="17" fill="#f39a30"/><circle cx="799" cy="1040" r="9" fill="#050000"/><rect x="794" y="1038.5" width="10" height="3" fill="#888"/><rect x="627" y="1116" width="48" height="48" rx="3" fill="#1a0500"/><rect x="633" y="1122" width="36" height="36" fill="#f39a30"/><circle cx="651" cy="1140" r="9" fill="#050000"/><rect x="646" y="1138.5" width="10" height="3" fill="#888"/><circle cx="700" cy="1140" r="23" fill="none" stroke="#1a0500" stroke-width="7" stroke-dasharray="22 8"/><circle cx="700" cy="1140" r="17" fill="#f39a30"/><circle cx="700" cy="1140" r="9" fill="#050000"/><rect x="695" y="1138.5" width="10" height="3" fill="#888"/><circle cx="749" cy="1140" r="23" fill="none" stroke="#1a0500" stroke-width="7" stroke-dasharray="22 8"/><circle cx="749" cy="1140" r="17" fill="#f39a30"/><circle cx="749" cy="1140" r="9" fill="#050000"/><rect x="744" y="1138.5" width="10" height="3" fill="#888"/><circle cx="799" cy="1140" r="23" fill="none" stroke="#1a0500" stroke-width="7" stroke-dasharray="200 0"/><circle cx="799" cy="1140" r="17" fill="#f39a30"/><circle cx="799" cy="1140" r="9" fill="#050000"/><rect x="794" y="1138.5" width="10" height="3" fill="#888"/><rect x="847" y="1016" width="48" height="48" rx="3" fill="#1a0500"/><rect x="853" y="1022" width="36" height="36" fill="#f39a30"/><circle cx="871" cy="1040" r="9" fill="#050000"/><rect x="866" y="1038.5" width="10" height="3" fill="#888"/><circle cx="920" cy="1040" r="23" fill="none" stroke="#1a0500" stroke-width="7" stroke-dasharray="22 8"/><circle cx="920" cy="1040" r="17" fill="#f39a30"/><circle cx="920" cy="1040" r="9" fill="#050000"/><rect x="915" y="1038.5" width="10" height="3" fill="#888"/><circle cx="969" cy="1040" r="23" fill="none" stroke="#1a0500" stroke-width="7" stroke-dasharray="22 8"/><circle cx="969" cy="1040" r="17" fill="#f39a30"/><circle cx="969" cy="1040" r="9" fill="#050000"/><rect x="964" y="1038.5" width="10" height="3" fill="#888"/><circle cx="1018" cy="1040" r="23" fill="none" stroke="#1a0500" stroke-width="7" stroke-dasharray="200 0"/><circle cx="1018" cy="1040" r="17" fill="#f39a30"/><circle cx="1018" cy="1040" r="9" fill="#050000"/><rect x="1013" y="1038.5" width="10" height="3" fill="#888"/><rect x="847" y="1116" width="48" height="48" rx="3" fill="#1a0500"/><rect x="853" y="1122" width="36" height="36" fill="#f39a30"/><circle cx="871" cy="1140" r="9" fill="#050000"/><rect x="866" y="1138.5" width="10" height="3" fill="#888"/><circle cx="920" cy="1140" r="23" fill="none" stroke="#1a0500" stroke-width="7" stroke-dasharray="22 8"/><circle cx="920" cy="1140" r="17" fill="#f39a30"/><circle cx="920" cy="1140" r="9" fill="#050000"/><rect x="915" y="1138.5" width="10" height="3" fill="#888"/><circle cx="969" cy="1140" r="23" fill="none" stroke="#1a0500" stroke-width="7" stroke-dasharray="22 8"/><circle cx="969" cy="1140" r="17" fill="#f39a30"/><circle cx="969" cy="1140" r="9" fill="#050000"/><rect x="964" y="1138.5" width="10" height="3" fill="#888"/><circle cx="1018" cy="1140" r="23" fill="none" stroke="#1a0500" stroke-width="7" stroke-dasharray="200 0"/><circle cx="1018" cy="1140" r="17" fill="#f39a30"/><circle cx="1018" cy="1140" r="9" fill="#050000"/><rect x="1013" y="1138.5" width="10" height="3" fill="#888"/><rect x="1080" y="1016" width="48" height="48" rx="3" fill="#1a0500"/><rect x="1086" y="1022" width="36" height="36" fill="#f39a30"/><circle cx="1104" cy="1040" r="9" fill="#050000"/><rect x="1099" y="1038.5" width="10" height="3" fill="#888"/><circle cx="1153" cy="1040" r="23" fill="none" stroke="#1a0500" stroke-width="7" stroke-dasharray="22 8"/><circle cx="1153" cy="1040" r="17" fill="#f39a30"/><circle cx="1153" cy="1040" r="9" fill="#050000"/><rect x="1148" y="1038.5" width="10" height="3" fill="#888"/><circle cx="1202" cy="1040" r="23" fill="none" stroke="#1a0500" stroke-width="7" stroke-dasharray="22 8"/><circle cx="1202" cy="1040" r="17" fill="#f39a30"/><circle cx="1202" cy="1040" r="9" fill="#050000"/><rect x="1197" y="1038.5" width="10" height="3" fill="#888"/><circle cx="1250" cy="1040" r="23" fill="none" stroke="#1a0500" stroke-width="7" stroke-dasharray="200 0"/><circle cx="1250" cy="1040" r="17" fill="#f39a30"/><circle cx="1250" cy="1040" r="9" fill="#050000"/><rect x="1245" y="1038.5" width="10" height="3" fill="#888"/><rect x="1080" y="1116" width="48" height="48" rx="3" fill="#1a0500"/><rect x="1086" y="1122" width="36" height="36" fill="#f39a30"/><circle cx="1104" cy="1140" r="9" fill="#050000"/><rect x="1099" y="1138.5" width="10" height="3" fill="#888"/><circle cx="1153" cy="1140" r="23" fill="none" stroke="#1a0500" stroke-width="7" stroke-dasharray="22 8"/><circle cx="1153" cy="1140" r="17" fill="#f39a30"/><circle cx="1153" cy="1140" r="9" fill="#050000"/><rect x="1148" y="1138.5" width="10" height="3" fill="#888"/><circle cx="1202" cy="1140" r="23" fill="none" stroke="#1a0500" stroke-width="7" stroke-dasharray="22 8"/><circle cx="1202" cy="1140" r="17" fill="#f39a30"/><circle cx="1202" cy="1140" r="9" fill="#050000"/><rect x="1197" y="1138.5" width="10" height="3" fill="#888"/><circle cx="1250" cy="1140" r="23" fill="none" stroke="#1a0500" stroke-width="7" stroke-dasharray="200 0"/><circle cx="1250" cy="1140" r="17" fill="#f39a30"/><circle cx="1250" cy="1140" r="9" fill="#050000"/><rect x="1245" y="1138.5" width="10" height="3" fill="#888"/><rect x="1296" y="1016" width="48" height="48" rx="3" fill="#1a0500"/><rect x="1302" y="1022" width="36" height="36" fill="#f39a30"/><circle cx="1320" cy="1040" r="9" fill="#050000"/><rect x="1315" y="1038.5" width="10" height="3" fill="#888"/><circle cx="1369" cy="1040" r="23" fill="none" stroke="#1a0500" stroke-width="7" stroke-dasharray="22 8"/><circle cx="1369" cy="1040" r="17" fill="#f39a30"/><circle cx="1369" cy="1040" r="9" fill="#050000"/><rect x="1364" y="1038.5" width="10" height="3" fill="#888"/><circle cx="1418" cy="1040" r="23" fill="none" stroke="#1a0500" stroke-width="7" stroke-dasharray="22 8"/><circle cx="1418" cy="1040" r="17" fill="#f39a30"/><circle cx="1418" cy="1040" r="9" fill="#050000"/><rect x="1413" y="1038.5" width="10" height="3" fill="#888"/><circle cx="1468" cy="1040" r="23" fill="none" stroke="#1a0500" stroke-width="7" stroke-dasharray="200 0"/><circle cx="1468" cy="1040" r="17" fill="#f39a30"/><circle cx="1468" cy="1040" r="9" fill="#050000"/><rect x="1463" y="1038.5" width="10" height="3" fill="#888"/><rect x="1296" y="1116" width="48" height="48" rx="3" fill="#1a0500"/><rect x="1302" y="1122" width="36" height="36" fill="#f39a30"/><circle cx="1320" cy="1140" r="9" fill="#050000"/><rect x="1315" y="1138.5" width="10" height="3" fill="#888"/><circle cx="1369" cy="1140" r="23" fill="none" stroke="#1a0500" stroke-width="7" stroke-dasharray="22 8"/><circle cx="1369" cy="1140" r="17" fill="#f39a30"/><circle cx="1369" cy="1140" r="9" fill="#050000"/><rect x="1364" y="1138.5" width="10" height="3" fill="#888"/><circle cx="1418" cy="1140" r="23" fill="none" stroke="#1a0500" stroke-width="7" stroke-dasharray="22 8"/><circle cx="1418" cy="1140" r="17" fill="#f39a30"/><circle cx="1418" cy="1140" r="9" fill="#050000"/><rect x="1413" y="1138.5" width="10" height="3" fill="#888"/><circle cx="1468" cy="1140" r="23" fill="none" stroke="#1a0500" stroke-width="7" stroke-dasharray="200 0"/><circle cx="1468" cy="1140" r="17" fill="#f39a30"/><circle cx="1468" cy="1140" r="9" fill="#050000"/><rect x="1463" y="1138.5" width="10" height="3" fill="#888"/><circle cx="647" cy="1195" r="14" fill="none" stroke="#e09040" stroke-width="1.2"/><circle cx="647" cy="1195" r="6" fill="#fff0d0"/><circle cx="647" cy="1193" r="2.5" fill="#333"/><circle cx="718" cy="1195" r="14" fill="none" stroke="#e09040" stroke-width="1.2"/><circle cx="718" cy="1195" r="6" fill="#fff0d0"/><circle cx="718" cy="1193" r="2.5" fill="#333"/><circle cx="788" cy="1195" r="14" fill="none" stroke="#e09040" stroke-width="1.2"/><circle cx="788" cy="1195" r="6" fill="#fff0d0"/><circle cx="788" cy="1193" r="2.5" fill="#333"/><circle cx="836" cy="1195" r="14" fill="none" stroke="#e09040" stroke-width="1.2"/><circle cx="836" cy="1195" r="6" fill="#fff0d0"/><circle cx="836" cy="1193" r="2.5" fill="#333"/><circle cx="928" cy="1195" r="14" fill="none" stroke="#e09040" stroke-width="1.2"/><circle cx="928" cy="1195" r="6" fill="#fff0d0"/><circle cx="928" cy="1193" r="2.5" fill="#333"/><circle cx="998" cy="1195" r="14" fill="none" stroke="#e09040" stroke-width="1.2"/><circle cx="998" cy="1195" r="6" fill="#fff0d0"/><circle cx="998" cy="1193" r="2.5" fill="#333"/><circle cx="1078" cy="1195" r="14" fill="none" stroke="#e09040" stroke-width="1.2"/><circle cx="1078" cy="1195" r="6" fill="#fff0d0"/><circle cx="1078" cy="1193" r="2.5" fill="#333"/><circle cx="1150" cy="1195" r="14" fill="none" stroke="#e09040" stroke-width="1.2"/><circle cx="1150" cy="1195" r="6" fill="#fff0d0"/><circle cx="1150" cy="1193" r="2.5" fill="#333"/><circle cx="1220" cy="1195" r="14" fill="none" stroke="#e09040" stroke-width="1.2"/><circle cx="1220" cy="1195" r="6" fill="#fff0d0"/><circle cx="1220" cy="1193" r="2.5" fill="#333"/><circle cx="1305" cy="1195" r="14" fill="none" stroke="#e09040" stroke-width="1.2"/><circle cx="1305" cy="1195" r="6" fill="#fff0d0"/><circle cx="1305" cy="1193" r="2.5" fill="#333"/><circle cx="1375" cy="1195" r="14" fill="none" stroke="#e09040" stroke-width="1.2"/><circle cx="1375" cy="1195" r="6" fill="#fff0d0"/><circle cx="1375" cy="1193" r="2.5" fill="#333"/><circle cx="1445" cy="1195" r="14" fill="none" stroke="#e09040" stroke-width="1.2"/><circle cx="1445" cy="1195" r="6" fill="#fff0d0"/><circle cx="1445" cy="1193" r="2.5" fill="#333"/><circle cx="686" cy="983" r="14" fill="none" stroke="#e09040" stroke-width="1.2"/><circle cx="686" cy="983" r="6" fill="#fff0d0"/><circle cx="686" cy="981" r="2.5" fill="#333"/><circle cx="749" cy="983" r="14" fill="none" stroke="#e09040" stroke-width="1.2"/><circle cx="749" cy="983" r="6" fill="#fff0d0"/><circle cx="749" cy="981" r="2.5" fill="#333"/><circle cx="920" cy="983" r="14" fill="none" stroke="#e09040" stroke-width="1.2"/><circle cx="920" cy="983" r="6" fill="#fff0d0"/><circle cx="920" cy="981" r="2.5" fill="#333"/><circle cx="992" cy="983" r="14" fill="none" stroke="#e09040" stroke-width="1.2"/><circle cx="992" cy="983" r="6" fill="#fff0d0"/><circle cx="992" cy="981" r="2.5" fill="#333"/><circle cx="1131" cy="983" r="14" fill="none" stroke="#e09040" stroke-width="1.2"/><circle cx="1131" cy="983" r="6" fill="#fff0d0"/><circle cx="1131" cy="981" r="2.5" fill="#333"/><circle cx="1195" cy="983" r="14" fill="none" stroke="#e09040" stroke-width="1.2"/><circle cx="1195" cy="983" r="6" fill="#fff0d0"/><circle cx="1195" cy="981" r="2.5" fill="#333"/><circle cx="1353" cy="997" r="14" fill="none" stroke="#e09040" stroke-width="1.2"/><circle cx="1353" cy="997" r="6" fill="#fff0d0"/><circle cx="1353" cy="995" r="2.5" fill="#333"/><circle cx="1442" cy="997" r="14" fill="none" stroke="#e09040" stroke-width="1.2"/><circle cx="1442" cy="997" r="6" fill="#fff0d0"/><circle cx="1442" cy="995" r="2.5" fill="#333"/><circle cx="1090" cy="939" r="14" fill="none" stroke="#e09040" stroke-width="1.2"/><circle cx="1090" cy="939" r="6" fill="#fff0d0"/><circle cx="1090" cy="937" r="2.5" fill="#333"/></svg></div><svg class="a" style="left:0;top:0;pointer-events:none" width="1900" height="1100"><rect x="1852" y="113" width="39" height="40" fill="#f5cbbb" stroke="#dfa58e" stroke-width="1.5"/><path d="M1865 123 l0 18 l4 -4 l4 8 l3 -2 l-4 -7 l6 0z" fill="#4d4d4d"/><g stroke="#707070" stroke-width="1.5" fill="none"><path d="M1857 161 L1867 171 M1876 180 L1886 190 M1886 161 L1876 171 M1867 180 L1857 190"/><rect x="1867" y="171" width="9" height="9" fill="#fff"/></g><rect x="1856" y="197" width="30" height="2" fill="#dedede"/><g><path d="M1858 219 q-4 0 -4 5 v3 q-3 2 0 4 v3 q0 5 4 5" stroke="#555" stroke-width="1.5" fill="none"/><path d="M1885 219 q4 0 4 5 v3 q3 2 0 4 v3 q0 5 -4 5" stroke="#555" stroke-width="1.5" fill="none"/><rect x="1858" y="214" width="6" height="7" fill="#2f7fc0"/><rect x="1868" y="214" width="6" height="7" fill="#2f7fc0"/><rect x="1878" y="214" width="6" height="7" fill="#2f7fc0"/><rect x="1858" y="239" width="6" height="7" fill="#2f7fc0"/><rect x="1868" y="239" width="6" height="7" fill="#2f7fc0"/><rect x="1878" y="239" width="6" height="7" fill="#2f7fc0"/></g><g><path d="M1857 287 l6 -12 h12 l10 -14" stroke="#2f7fc0" stroke-width="2.5" fill="none"/><path d="M1882 292 l7 -6 v6z" fill="#222"/></g><g><path d="M1856 322 q2 -14 6 -2 q4 10 6 -2 q3 -12 6 0 q3 10 6 -2 q3 -12 6 2" stroke="#2f8fc0" stroke-width="2.5" fill="none"/><path d="M1882 334 l7 -6 v6z" fill="#222"/></g><circle cx="1871" cy="358" r="7" fill="none" stroke="#e8a020" stroke-width="5"/><path d="M1858 412 v-12 h10 v-10 h18 v22z" fill="#2f8fd0"/><circle cx="1880" cy="402" r="3" fill="#fff"/><g><path d="M1859 456 v-14 h8 v-12 h18 v26z" fill="#fff" stroke="#4d4d4d" stroke-width="1.8"/><path d="M1860 454 l8 -8 M1866 456 l18 -18 M1874 456 l10 -10 M1867 442 l10 -10" stroke="#4d4d4d" stroke-width="2.5"/></g><rect x="1856" y="468" width="30" height="2" fill="#dedede"/><path d="M1858 511 L1884 485" stroke="#4d4d4d" stroke-width="2.5"/><path d="M1858 555 q0 -26 26 -26" stroke="#4d4d4d" stroke-width="2.5" fill="none"/><rect x="1859" y="572" width="25" height="24" fill="#ccc" stroke="#4d4d4d" stroke-width="2.5"/><circle cx="1871" cy="627" r="12" fill="#ccc" stroke="#4d4d4d" stroke-width="2.5"/><path d="M1859 658 l24 6 l-4 12 l-20 8 l8 -12z" fill="#ccc" stroke="#4d4d4d" stroke-width="2.5"/><path d="M1858 720 q4 -10 12 -6 q8 4 14 -4" stroke="#2f7fc0" stroke-width="2" fill="none"/><path d="M1868 702 v10 M1876 706 v10" stroke="#2f7fc0" stroke-width="1.5"/><g><rect x="1859" y="742" width="25" height="25" rx="2" fill="#4d4d4d"/><path d="M1861 764 l8 -8 l5 5 l4 -4 l6 7z" fill="#fff"/><circle cx="1877" cy="750" r="3" fill="#fff"/></g><path d="M1860 787 h22 M1871 787 v24" stroke="#4d4d4d" stroke-width="4"/><rect x="1852" y="818" width="39" height="40" fill="#f8e0d8" stroke="#e0b0a0" stroke-width="1.5"/><g><rect x="1859" y="828" width="25" height="24" fill="none" stroke="#4d4d4d" stroke-width="2.5"/><path d="M1866 824 l0 20 l4 -4 l4 8 l3 -2 l-4 -7 l6 0z" fill="#333"/></g><g stroke="#4d4d4d" stroke-width="2" fill="none"><rect x="1857" y="870" width="29" height="26"/><path d="M1857 879 h29 M1857 888 h29 M1867 870 v26 M1876 870 v26"/></g><g><circle cx="1861" cy="914" r="3" fill="#2f7fc0"/><circle cx="1873" cy="937" r="3" fill="#2f7fc0"/><path d="M1861 914 h20 M1881 916 v18 M1873 937 h8" stroke="#555" stroke-width="1.5"/><path d="M1882 942 l7 -6 v6z" fill="#222"/></g><g><path d="M1860 955 l0 20 l4 -4 l4 8 l3 -2 l-4 -7 l6 0z" fill="#444"/><circle cx="1878" cy="975" r="7" fill="#c0303a"/><path d="M1875 972 l6 6 M1881 972 l-6 6" stroke="#fff" stroke-width="1.8"/></g><rect x="1856" y="996" width="30" height="2" fill="#dedede"/><g><circle cx="1859" cy="1011" r="2" fill="#4d4d4d"/><circle cx="1867" cy="1011" r="2" fill="#4d4d4d"/><circle cx="1875" cy="1011" r="2" fill="#4d4d4d"/><circle cx="1883" cy="1011" r="2" fill="#4d4d4d"/><circle cx="1859" cy="1019" r="2" fill="#4d4d4d"/><circle cx="1867" cy="1019" r="2" fill="#4d4d4d"/><circle cx="1875" cy="1019" r="2" fill="#4d4d4d"/><circle cx="1883" cy="1019" r="2" fill="#4d4d4d"/><circle cx="1859" cy="1027" r="2" fill="#4d4d4d"/><circle cx="1867" cy="1027" r="2" fill="#4d4d4d"/><circle cx="1875" cy="1027" r="2" fill="#4d4d4d"/><circle cx="1883" cy="1027" r="2" fill="#4d4d4d"/><circle cx="1859" cy="1035" r="2" fill="#4d4d4d"/><circle cx="1867" cy="1035" r="2" fill="#4d4d4d"/><circle cx="1875" cy="1035" r="2" fill="#4d4d4d"/><circle cx="1883" cy="1035" r="2" fill="#4d4d4d"/><path d="M1857 1027 h22 M1866 1010 v26" stroke="#2f7fc0" stroke-width="2.5"/><path d="M1882 1037 l7 -6 v6z" fill="#222"/></g><g><path d="M1859 1074 l22 -22 l6 6 l-22 22z" fill="none" stroke="#4d4d4d" stroke-width="3"/><path d="M1866 1066 l3 3 M1872 1060 l3 3" stroke="#4d4d4d" stroke-width="2"/></g></svg><div class="a" style="left:1893px;top:106px;width:663px;height:1237px;background:#ececec"></div><div class="a" style="left:2554px;top:106px;width:2px;height:1237px;background:#8a8a8a"></div><div class="a" style="left:1900px;top:107px;width:654px;height:22px;background:#c5c5c5"></div><div class="t" style="left:1904px;top:110px;font-size:17px;color:#555;">Appearance</div><div class="a" style="left:1900px;top:136px;width:654px;height:2px;background:#dcdcdc"></div><div class="a" style="left:1900px;top:138px;width:654px;height:48px;background:#e9e9e9"></div><div class="a" style="left:1900px;top:185px;width:654px;height:2px;background:#d8d8d8"></div><div class="t" style="left:1928px;top:148px;font-size:24px;color:#5a5a5a;">Layers</div><div class="t" style="left:2040px;top:148px;font-size:24px;color:#5a5a5a;">Objects</div><div class="t" style="left:2167px;top:148px;font-size:24px;color:#5a5a5a;">Nets</div><div class="a" style="left:1913px;top:182px;width:101px;height:4px;background:#e2632e;border-radius:2px"></div><div class="a" style="left:1901px;top:187px;width:653px;height:568px;background:#fefefe"></div><div class="a" style="left:1901px;top:188px;width:645px;height:29px;background:#efefef"></div><div class="a" style="left:2545px;top:190px;width:5px;height:360px;background:#e0e0e0;border-radius:2px"></div><svg class="a" style="left:1901px;top:187px" width="653" height="568"><defs><clipPath id="lc"><rect x="0" y="0" width="653" height="568"/></clipPath></defs><g clip-path="url(#lc)"><rect x="22" y="4.0" width="27" height="22" fill="#8a1010"/><circle cx="67" cy="15.0" r="10" fill="#555"/><ellipse cx="67" cy="15.0" rx="6.5" ry="4.5" fill="#e8e8e8"/><circle cx="67" cy="15.0" r="2.3" fill="#555"/><text x="85" y="23.5" font-size="23" fill="#5e5e5e" font-family="Liberation Sans">F.Cu</text><rect x="22" y="34.670000000000016" width="27" height="22" fill="#c9c634"/><circle cx="67" cy="45.670000000000016" r="10" fill="#555"/><ellipse cx="67" cy="45.670000000000016" rx="6.5" ry="4.5" fill="#e8e8e8"/><circle cx="67" cy="45.670000000000016" r="2.3" fill="#555"/><text x="85" y="54.170000000000016" font-size="23" fill="#5e5e5e" font-family="Liberation Sans">In1.Cu</text><rect x="22" y="65.34000000000003" width="27" height="22" fill="#c330c9"/><circle cx="67" cy="76.34000000000003" r="10" fill="#555"/><ellipse cx="67" cy="76.34000000000003" rx="6.5" ry="4.5" fill="#e8e8e8"/><circle cx="67" cy="76.34000000000003" r="2.3" fill="#555"/><text x="85" y="84.84000000000003" font-size="23" fill="#5e5e5e" font-family="Liberation Sans">In2.Cu</text><rect x="22" y="96.00999999999999" width="27" height="22" fill="#1f8a22"/><circle cx="67" cy="107.00999999999999" r="10" fill="#555"/><ellipse cx="67" cy="107.00999999999999" rx="6.5" ry="4.5" fill="#e8e8e8"/><circle cx="67" cy="107.00999999999999" r="2.3" fill="#555"/><text x="85" y="115.50999999999999" font-size="23" fill="#5e5e5e" font-family="Liberation Sans">B.Cu</text><rect x="22" y="126.68" width="27" height="22" fill="#84198f"/><circle cx="67" cy="137.68" r="10" fill="#555"/><ellipse cx="67" cy="137.68" rx="6.5" ry="4.5" fill="#e8e8e8"/><circle cx="67" cy="137.68" r="2.3" fill="#555"/><text x="85" y="146.18" font-size="23" fill="#5e5e5e" font-family="Liberation Sans">F.Adhesive</text><rect x="22" y="157.35000000000002" width="27" height="22" fill="#0b0c8c"/><circle cx="67" cy="168.35000000000002" r="10" fill="#555"/><ellipse cx="67" cy="168.35000000000002" rx="6.5" ry="4.5" fill="#e8e8e8"/><circle cx="67" cy="168.35000000000002" r="2.3" fill="#555"/><text x="85" y="176.85000000000002" font-size="23" fill="#5e5e5e" font-family="Liberation Sans">B.Adhesive</text><rect x="22" y="188.01999999999998" width="27" height="22" fill="#5a0a0e"/><circle cx="67" cy="199.01999999999998" r="10" fill="#555"/><ellipse cx="67" cy="199.01999999999998" rx="6.5" ry="4.5" fill="#e8e8e8"/><circle cx="67" cy="199.01999999999998" r="2.3" fill="#555"/><text x="85" y="207.51999999999998" font-size="23" fill="#5e5e5e" font-family="Liberation Sans">F.Paste</text><rect x="22" y="218.69" width="27" height="22" fill="#34c5c8"/><circle cx="67" cy="229.69" r="10" fill="#555"/><ellipse cx="67" cy="229.69" rx="6.5" ry="4.5" fill="#e8e8e8"/><circle cx="67" cy="229.69" r="2.3" fill="#555"/><text x="85" y="238.19" font-size="23" fill="#5e5e5e" font-family="Liberation Sans">B.Paste</text><rect x="22" y="249.36" width="27" height="22" fill="#1e8a8c"/><circle cx="67" cy="260.36" r="10" fill="#555"/><ellipse cx="67" cy="260.36" rx="6.5" ry="4.5" fill="#e8e8e8"/><circle cx="67" cy="260.36" r="2.3" fill="#555"/><text x="85" y="268.86" font-size="23" fill="#5e5e5e" font-family="Liberation Sans">F.Silkscreen</text><rect x="22" y="280.03000000000003" width="27" height="22" fill="#8a1a96"/><circle cx="67" cy="291.03000000000003" r="10" fill="#555"/><ellipse cx="67" cy="291.03000000000003" rx="6.5" ry="4.5" fill="#e8e8e8"/><circle cx="67" cy="291.03000000000003" r="2.3" fill="#555"/><text x="85" y="299.53000000000003" font-size="23" fill="#5e5e5e" font-family="Liberation Sans">B.Silkscreen</text><rect x="22" y="310.70000000000005" width="27" height="22" fill="#8c1496"/><circle cx="67" cy="321.70000000000005" r="10" fill="#555"/><ellipse cx="67" cy="321.70000000000005" rx="6.5" ry="4.5" fill="#e8e8e8"/><circle cx="67" cy="321.70000000000005" r="2.3" fill="#555"/><text x="85" y="330.20000000000005" font-size="23" fill="#5e5e5e" font-family="Liberation Sans">F.Mask</text><rect x="22" y="341.37" width="27" height="22" fill="#8a8a1e"/><circle cx="67" cy="352.37" r="10" fill="#555"/><ellipse cx="67" cy="352.37" rx="6.5" ry="4.5" fill="#e8e8e8"/><circle cx="67" cy="352.37" r="2.3" fill="#555"/><text x="85" y="360.87" font-size="23" fill="#5e5e5e" font-family="Liberation Sans">B.Mask</text><rect x="22" y="372.03999999999996" width="27" height="22" fill="#c8c8c8"/><circle cx="67" cy="383.03999999999996" r="10" fill="#555"/><ellipse cx="67" cy="383.03999999999996" rx="6.5" ry="4.5" fill="#e8e8e8"/><circle cx="67" cy="383.03999999999996" r="2.3" fill="#555"/><text x="85" y="391.53999999999996" font-size="23" fill="#5e5e5e" font-family="Liberation Sans">User.Drawings</text><rect x="22" y="402.71000000000004" width="27" height="22" fill="#0b0c8c"/><circle cx="67" cy="413.71000000000004" r="10" fill="#555"/><ellipse cx="67" cy="413.71000000000004" rx="6.5" ry="4.5" fill="#e8e8e8"/><circle cx="67" cy="413.71000000000004" r="2.3" fill="#555"/><text x="85" y="422.21000000000004" font-size="23" fill="#5e5e5e" font-family="Liberation Sans">User.Comments</text><rect x="22" y="433.38" width="27" height="22" fill="#1f8a22"/><circle cx="67" cy="444.38" r="10" fill="#555"/><ellipse cx="67" cy="444.38" rx="6.5" ry="4.5" fill="#e8e8e8"/><circle cx="67" cy="444.38" r="2.3" fill="#555"/><text x="85" y="452.88" font-size="23" fill="#5e5e5e" font-family="Liberation Sans">User.Eco1</text><rect x="22" y="464.04999999999995" width="27" height="22" fill="#c9c634"/><circle cx="67" cy="475.04999999999995" r="10" fill="#555"/><ellipse cx="67" cy="475.04999999999995" rx="6.5" ry="4.5" fill="#e8e8e8"/><circle cx="67" cy="475.04999999999995" r="2.3" fill="#555"/><text x="85" y="483.54999999999995" font-size="23" fill="#5e5e5e" font-family="Liberation Sans">User.Eco2</text><rect x="22" y="494.72" width="27" height="22" fill="#c9c634"/><circle cx="67" cy="505.72" r="10" fill="#555"/><ellipse cx="67" cy="505.72" rx="6.5" ry="4.5" fill="#e8e8e8"/><circle cx="67" cy="505.72" r="2.3" fill="#555"/><text x="85" y="514.22" font-size="23" fill="#5e5e5e" font-family="Liberation Sans">Edge.Cuts</text><rect x="22" y="525.39" width="27" height="22" fill="#c330c9"/><circle cx="67" cy="536.39" r="10" fill="#555"/><ellipse cx="67" cy="536.39" rx="6.5" ry="4.5" fill="#e8e8e8"/><circle cx="67" cy="536.39" r="2.3" fill="#555"/><text x="85" y="544.89" font-size="23" fill="#5e5e5e" font-family="Liberation Sans">Margin</text><rect x="22" y="556.0600000000001" width="27" height="22" fill="#c4c0c0"/><circle cx="67" cy="567.0600000000001" r="10" fill="#555"/><ellipse cx="67" cy="567.0600000000001" rx="6.5" ry="4.5" fill="#e8e8e8"/><circle cx="67" cy="567.0600000000001" r="2.3" fill="#555"/><text x="85" y="575.5600000000001" font-size="23" fill="#5e5e5e" font-family="Liberation Sans">F.Courtyard</text><path d="M7 9 l6 6 l-6 6z" fill="#5555cc" transform="translate(0,0)"/></g></svg><div class="a" style="left:1901px;top:754px;width:653px;height:2px;background:#e4e4e4"></div><div class="a" style="left:1901px;top:756px;width:653px;height:156px;background:#fdfdfd"></div><svg class="a" style="left:1913px;top:770px" width="20" height="14"><path d="M1 3 h14 l-7 8z" fill="#111"/></svg><div class="t" style="left:1935px;top:765px;font-size:22.5px;color:#505050;">Layer Display Options</div><div class="t" style="left:1909px;top:801px;font-size:22px;color:#5e5e5e;">Inactive layers (P):</div><svg class="a" style="left:1901px;top:825px" width="653" height="90"><circle cx="23" cy="20" r="10" fill="#fff" stroke="#cfcfcf" stroke-width="1.5"/><circle cx="257" cy="20" r="10" fill="#e2632e"/><circle cx="257" cy="20" r="4" fill="#fff"/><circle cx="460" cy="20" r="10" fill="#fff" stroke="#cfcfcf" stroke-width="1.5"/><rect x="10" y="43" width="630" height="2" fill="#e2e2e2"/><rect x="13" y="55" width="20" height="20" rx="3" fill="#fff" stroke="#cfcfcf" stroke-width="1.5"/></svg><div class="t" style="left:1940px;top:833px;font-size:23px;color:#5e5e5e;">Normal</div><div class="t" style="left:2175px;top:833px;font-size:23px;color:#5e5e5e;">Dim</div><div class="t" style="left:2377px;top:833px;font-size:23px;color:#5e5e5e;">Hide</div><div class="t" style="left:1940px;top:878px;font-size:23px;color:#5e5e5e;">Flip board view</div><div class="a" style="left:1901px;top:911px;width:653px;height:2px;background:#e0e0e0"></div><div class="t" style="left:1910px;top:930px;font-size:22px;color:#5e5e5e;">Presets (Ctrl+Tab):</div><div class="cb" style="left:1911px;top:959px;width:635px;height:49px;border-color:#dedede"></div><div class="t" style="left:1926px;top:972px;font-size:20px;color:#666;">---</div><svg class="a" style="left:2513px;top:977px" width="20" height="14"><path d="M3 3 l6 6 l6 -6" stroke="#666" stroke-width="2" fill="none"/></svg><div class="t" style="left:1910px;top:1014px;font-size:23px;color:#5e5e5e;">Viewports (Shift+Tab):</div><div class="cb" style="left:1911px;top:1044px;width:635px;height:49px;border-color:#dedede"></div><div class="t" style="left:1926px;top:1057px;font-size:20px;color:#666;">---</div><svg class="a" style="left:2513px;top:1062px" width="20" height="14"><path d="M3 3 l6 6 l6 -6" stroke="#666" stroke-width="2" fill="none"/></svg><div class="a" style="left:1901px;top:1108px;width:653px;height:22px;background:#c5c5c5"></div><div class="t" style="left:1904px;top:1111px;font-size:17px;color:#555;">Selection Filter</div><svg class="a" style="left:1901px;top:1130px" width="400" height="213"><rect x="11" y="13.0" width="21" height="21" rx="3" fill="#e2632e"/><path d="M16 23.0 l4 4 l7 -8" stroke="#fff" stroke-width="2.3" fill="none"/><rect x="178" y="13.0" width="21" height="21" rx="3" fill="#fff" stroke="#cfcfcf" stroke-width="1.5"/><rect x="11" y="46.40000000000009" width="21" height="21" rx="3" fill="#e2632e"/><path d="M16 56.40000000000009 l4 4 l7 -8" stroke="#fff" stroke-width="2.3" fill="none"/><rect x="178" y="46.40000000000009" width="21" height="21" rx="3" fill="#e2632e"/><path d="M183 56.40000000000009 l4 4 l7 -8" stroke="#fff" stroke-width="2.3" fill="none"/><rect x="11" y="79.79999999999995" width="21" height="21" rx="3" fill="#e2632e"/><path d="M16 89.79999999999995 l4 4 l7 -8" stroke="#fff" stroke-width="2.3" fill="none"/><rect x="178" y="79.79999999999995" width="21" height="21" rx="3" fill="#e2632e"/><path d="M183 89.79999999999995 l4 4 l7 -8" stroke="#fff" stroke-width="2.3" fill="none"/><rect x="11" y="113.20000000000005" width="21" height="21" rx="3" fill="#e2632e"/><path d="M16 123.20000000000005 l4 4 l7 -8" stroke="#fff" stroke-width="2.3" fill="none"/><rect x="178" y="113.20000000000005" width="21" height="21" rx="3" fill="#e2632e"/><path d="M183 123.20000000000005 l4 4 l7 -8" stroke="#fff" stroke-width="2.3" fill="none"/><rect x="11" y="146.5999999999999" width="21" height="21" rx="3" fill="#e2632e"/><path d="M16 156.5999999999999 l4 4 l7 -8" stroke="#fff" stroke-width="2.3" fill="none"/><rect x="178" y="146.5999999999999" width="21" height="21" rx="3" fill="#e2632e"/><path d="M183 156.5999999999999 l4 4 l7 -8" stroke="#fff" stroke-width="2.3" fill="none"/><rect x="11" y="180.0" width="21" height="21" rx="3" fill="#e2632e"/><path d="M16 190.0 l4 4 l7 -8" stroke="#fff" stroke-width="2.3" fill="none"/><rect x="178" y="180.0" width="21" height="21" rx="3" fill="#e2632e"/><path d="M183 190.0 l4 4 l7 -8" stroke="#fff" stroke-width="2.3" fill="none"/></svg><div class="t" style="left:1939px;top:1141.0px;font-size:23px;color:#5e5e5e;">All items</div><div class="t" style="left:2106px;top:1141.0px;font-size:23px;color:#5e5e5e;">Locked items</div><div class="t" style="left:1939px;top:1174.4px;font-size:23px;color:#5e5e5e;">Footprints</div><div class="t" style="left:2106px;top:1174.4px;font-size:23px;color:#5e5e5e;">Text</div><div class="t" style="left:1939px;top:1207.8px;font-size:23px;color:#5e5e5e;">Tracks</div><div class="t" style="left:2106px;top:1207.8px;font-size:23px;color:#5e5e5e;">Vias</div><div class="t" style="left:1939px;top:1241.2px;font-size:23px;color:#5e5e5e;">Pads</div><div class="t" style="left:2106px;top:1241.2px;font-size:23px;color:#5e5e5e;">Graphics</div><div class="t" style="left:1939px;top:1274.6px;font-size:23px;color:#5e5e5e;">Zones</div><div class="t" style="left:2106px;top:1274.6px;font-size:23px;color:#5e5e5e;">Rule Areas</div><div class="t" style="left:1939px;top:1308.0px;font-size:23px;color:#5e5e5e;">Dimensions</div><div class="t" style="left:2106px;top:1308.0px;font-size:23px;color:#5e5e5e;">Other items</div><div class="a" style="left:3px;top:1343px;width:2553px;height:62px;background:#fdfdfd"></div><div class="a" style="left:3px;top:1405px;width:2553px;height:35px;background:#efefef"></div><div class="t" style="left:26px;top:1346px;font-size:24px;color:#555">Pads</div><div class="t" style="left:26px;top:1377px;font-size:24px;color:#555">539</div><div class="t" style="left:565px;top:1346px;font-size:24px;color:#555">Unrouted</div><div class="t" style="left:565px;top:1377px;font-size:24px;color:#555">0</div><div class="t" style="left:10px;top:1413px;font-size:23.6px;color:#555">File '/home/k</div><div class="t" style="left:476px;top:1413px;font-size:23.6px;color:#555">Z 2.94</div><div class="t" style="left:616px;top:1413px;font-size:23.6px;color:#555">X 117.0000&nbsp; Y -63.5000</div><div class="t" style="left:937px;top:1413px;font-size:23.6px;color:#555">dx 50.8000&nbsp; dy -35.3000&nbsp; dist 61.8606</div><div class="t" style="left:1450px;top:1413px;font-size:23.6px;color:#555">grid 0.5000</div><div class="t" style="left:1818px;top:1413px;font-size:23.6px;color:#555">mm</div><div class="t" style="left:1930px;top:1413px;font-size:23.6px;color:#555">Select item(s)</div><div class="t" style="left:2265px;top:1413px;font-size:23.6px;color:#555">Constrain to H, V, ...</div><svg class="a" style="left:2520px;top:1405px" width="36" height="35"><path d="M34 12 L12 34 M34 20 L20 34 M34 28 L28 34" stroke="#bbb" stroke-width="1.5"/></svg><svg class="a" style="left:0;top:870px" width="610" height="570" viewBox="0 870 610 570"><defs><clipPath id="pc"><circle cx="298" cy="1174" r="296"/></clipPath><filter id="b1" x="-20%" y="-20%" width="140%" height="140%"><feGaussianBlur stdDeviation="1.2"/></filter><filter id="b2" x="-20%" y="-20%" width="140%" height="140%"><feGaussianBlur stdDeviation="2.5"/></filter><filter id="b4" x="-20%" y="-20%" width="140%" height="140%"><feGaussianBlur stdDeviation="4"/></filter><filter id="b8" x="-30%" y="-30%" width="160%" height="160%"><feGaussianBlur stdDeviation="7"/></filter><radialGradient id="skin" cx="0.42" cy="0.5" r="0.62"><stop offset="0" stop-color="#f4c8b0"/><stop offset="0.5" stop-color="#eab096"/><stop offset="0.85" stop-color="#d8987e"/><stop offset="1" stop-color="#b07868"/></radialGradient><linearGradient id="hl" x1="0" y1="0" x2="1" y2="0"><stop offset="0" stop-color="#a89e94"/><stop offset="0.3" stop-color="#8e8076"/><stop offset="0.6" stop-color="#a4988e"/><stop offset="1" stop-color="#6e5e56"/></linearGradient><linearGradient id="hr" x1="0" y1="0" x2="1" y2="0"><stop offset="0" stop-color="#5e5048"/><stop offset="0.35" stop-color="#9a8c80"/><stop offset="0.7" stop-color="#b0a498"/><stop offset="1" stop-color="#8a7c70"/></linearGradient></defs><g clip-path="url(#pc)"><rect x="0" y="870" width="610" height="570" fill="#56667a"/><g filter="url(#b8)"><path d="M0 870 H610 V1095 H470 L430 1040 H0Z" fill="#a8acaa"/><rect x="105" y="905" width="120" height="128" fill="#80888a"/><rect x="20" y="960" width="80" height="70" fill="#b8bab4"/><rect x="128" y="925" width="14" height="108" fill="#e8eae0"/><rect x="158" y="994" width="26" height="16" fill="#3a8a50"/><rect x="0" y="1034" width="240" height="124" fill="#1a2232"/><rect x="80" y="1076" width="45" height="10" fill="#9a9a80"/><rect x="10" y="1110" width="35" height="9" fill="#707a80"/><rect x="88" y="1110" width="40" height="9" fill="#808890"/><rect x="60" y="1046" width="8" height="110" fill="#2e3a4a"/><rect x="0" y="1158" width="180" height="200" fill="#5c6c80"/><rect x="0" y="1158" width="180" height="10" fill="#8a96a0"/><rect x="70" y="1186" width="30" height="12" fill="#e0e4e4"/><rect x="0" y="1186" width="25" height="12" fill="#c8d0d4"/><rect x="20" y="1210" width="20" height="120" fill="#2a4e80"/><rect x="70" y="1220" width="20" height="100" fill="#2a4878"/><rect x="0" y="1240" width="160" height="10" fill="#8a96a4"/><rect x="0" y="1280" width="160" height="10" fill="#7a8898"/><rect x="40" y="1300" width="140" height="60" fill="#3a68a8"/><rect x="465" y="1090" width="145" height="260" fill="#8a929c"/><rect x="480" y="1095" width="40" height="40" fill="#404a5a"/><rect x="525" y="1100" width="70" height="50" fill="#c4c8cc"/><rect x="545" y="1150" width="50" height="180" fill="#c0c4c8"/><rect x="520" y="1162" width="18" height="44" fill="#d47848"/><rect x="505" y="1230" width="40" height="120" fill="#50586a"/></g><g filter="url(#b4)"><path d="M185 1020 Q215 950 290 912 Q345 892 400 905 Q460 930 490 1000 Q508 1070 502 1160 Q505 1280 560 1440 L395 1440 Q420 1330 440 1200 Q455 1100 440 1040 Q405 985 330 975 Q255 985 228 1060 Q214 1150 240 1300 L268 1440 L70 1440 Q120 1330 140 1200 Q150 1080 185 1020Z" fill="#74685e"/><path d="M232 1150 L455 1150 L470 1440 L225 1440Z" fill="#6a5e54"/></g><g filter="url(#b2)"><path d="M230 1000 Q200 1200 251 1440" stroke="#54483e" stroke-width="8.6" fill="none" opacity="0.75"/><path d="M230 1002 Q199 1202 244 1440" stroke="#a49a90" stroke-width="8.5" fill="none" opacity="0.75"/><path d="M228 1003 Q196 1203 237 1440" stroke="#7a6c62" stroke-width="9.0" fill="none" opacity="0.75"/><path d="M226 1005 Q193 1205 235 1440" stroke="#8a7c70" stroke-width="6.0" fill="none" opacity="0.75"/><path d="M227 1006 Q194 1206 216 1440" stroke="#8c8076" stroke-width="8.3" fill="none" opacity="0.75"/><path d="M222 1008 Q188 1208 219 1440" stroke="#66584e" stroke-width="4.8" fill="none" opacity="0.75"/><path d="M224 1010 Q189 1210 198 1440" stroke="#a49a90" stroke-width="8.1" fill="none" opacity="0.75"/><path d="M216 1011 Q181 1211 201 1440" stroke="#74665c" stroke-width="7.6" fill="none" opacity="0.75"/><path d="M219 1013 Q183 1213 190 1440" stroke="#8a7c70" stroke-width="8.8" fill="none" opacity="0.75"/><path d="M211 1014 Q174 1214 183 1440" stroke="#a49a90" stroke-width="4.7" fill="none" opacity="0.75"/><path d="M210 1016 Q172 1216 187 1440" stroke="#74665c" stroke-width="7.9" fill="none" opacity="0.75"/><path d="M213 1018 Q174 1218 169 1440" stroke="#74665c" stroke-width="6.9" fill="none" opacity="0.75"/><path d="M208 1019 Q169 1219 162 1440" stroke="#7a6c62" stroke-width="8.5" fill="none" opacity="0.75"/><path d="M207 1021 Q167 1221 165 1440" stroke="#aaa096" stroke-width="9.0" fill="none" opacity="0.75"/><path d="M205 1022 Q164 1222 142 1440" stroke="#54483e" stroke-width="8.8" fill="none" opacity="0.75"/><path d="M205 1024 Q163 1224 143 1440" stroke="#7a6c62" stroke-width="7.2" fill="none" opacity="0.75"/><path d="M204 1026 Q161 1226 130 1440" stroke="#66584e" stroke-width="4.3" fill="none" opacity="0.75"/><path d="M201 1027 Q157 1227 137 1440" stroke="#66584e" stroke-width="5.7" fill="none" opacity="0.75"/><path d="M193 1029 Q148 1229 128 1440" stroke="#a49a90" stroke-width="5.5" fill="none" opacity="0.75"/><path d="M196 1030 Q151 1230 121 1440" stroke="#a49a90" stroke-width="7.0" fill="none" opacity="0.75"/><path d="M194 1032 Q148 1232 104 1440" stroke="#54483e" stroke-width="6.8" fill="none" opacity="0.75"/><path d="M193 1034 Q147 1234 94 1440" stroke="#7a6c62" stroke-width="9.0" fill="none" opacity="0.75"/><path d="M186 1035 Q139 1235 83 1440" stroke="#a49a90" stroke-width="8.7" fill="none" opacity="0.75"/><path d="M190 1037 Q141 1237 80 1440" stroke="#aaa096" stroke-width="4.8" fill="none" opacity="0.75"/><path d="M180 1038 Q131 1238 85 1440" stroke="#54483e" stroke-width="5.8" fill="none" opacity="0.75"/><path d="M179 1040 Q129 1240 77 1440" stroke="#74665c" stroke-width="6.3" fill="none" opacity="0.75"/><path d="M445 1000 Q455 1220 403 1440" stroke="#5a4c42" stroke-width="7.1" fill="none" opacity="0.75"/><path d="M451 1003 Q461 1223 408 1440" stroke="#726456" stroke-width="7.2" fill="none" opacity="0.75"/><path d="M451 1006 Q463 1226 423 1440" stroke="#726456" stroke-width="8.9" fill="none" opacity="0.75"/><path d="M452 1009 Q464 1229 423 1440" stroke="#a29684" stroke-width="7.9" fill="none" opacity="0.75"/><path d="M458 1013 Q470 1233 426 1440" stroke="#726456" stroke-width="7.1" fill="none" opacity="0.75"/><path d="M458 1016 Q471 1236 428 1440" stroke="#4a3e36" stroke-width="6.3" fill="none" opacity="0.75"/><path d="M461 1019 Q474 1239 441 1440" stroke="#ab9f90" stroke-width="7.7" fill="none" opacity="0.75"/><path d="M458 1022 Q471 1242 443 1440" stroke="#a29684" stroke-width="8.8" fill="none" opacity="0.75"/><path d="M462 1025 Q476 1245 458 1440" stroke="#4a3e36" stroke-width="4.9" fill="none" opacity="0.75"/><path d="M464 1028 Q479 1248 471 1440" stroke="#ab9f90" stroke-width="5.5" fill="none" opacity="0.75"/><path d="M468 1032 Q483 1252 479 1440" stroke="#a29684" stroke-width="8.9" fill="none" opacity="0.75"/><path d="M473 1035 Q488 1255 474 1440" stroke="#7e7062" stroke-width="7.3" fill="none" opacity="0.75"/><path d="M472 1038 Q488 1258 485 1440" stroke="#726456" stroke-width="7.2" fill="none" opacity="0.75"/><path d="M473 1041 Q489 1261 498 1440" stroke="#4a3e36" stroke-width="7.4" fill="none" opacity="0.75"/><path d="M476 1044 Q493 1264 509 1440" stroke="#948676" stroke-width="4.4" fill="none" opacity="0.75"/><path d="M482 1047 Q500 1267 505 1440" stroke="#8a7c6c" stroke-width="5.4" fill="none" opacity="0.75"/><path d="M485 1051 Q504 1271 509 1440" stroke="#7e7062" stroke-width="5.6" fill="none" opacity="0.75"/><path d="M488 1054 Q507 1274 527 1440" stroke="#ab9f90" stroke-width="5.7" fill="none" opacity="0.75"/><path d="M490 1057 Q510 1277 524 1440" stroke="#4a3e36" stroke-width="6.9" fill="none" opacity="0.75"/><path d="M489 1060 Q509 1280 540 1440" stroke="#ab9f90" stroke-width="6.3" fill="none" opacity="0.75"/><path d="M205 1070 Q235 966 330 905 Q425 915 480 1080" stroke="#5e544c" stroke-width="6.7" fill="none" opacity="0.7"/><path d="M206 1069 Q236 964 330 909 Q425 919 479 1079" stroke="#7a7068" stroke-width="7.3" fill="none" opacity="0.7"/><path d="M207 1069 Q236 962 330 913 Q425 922 478 1079" stroke="#8a8078" stroke-width="8.7" fill="none" opacity="0.7"/><path d="M208 1068 Q237 960 330 917 Q425 926 477 1078" stroke="#6a6058" stroke-width="5.8" fill="none" opacity="0.7"/><path d="M209 1067 Q238 958 330 921 Q425 930 476 1077" stroke="#7a7068" stroke-width="8.8" fill="none" opacity="0.7"/><path d="M210 1067 Q238 956 330 925 Q425 933 475 1077" stroke="#4a4038" stroke-width="8.9" fill="none" opacity="0.7"/><path d="M211 1066 Q239 954 330 929 Q425 937 474 1076" stroke="#7a7068" stroke-width="7.2" fill="none" opacity="0.7"/><path d="M212 1065 Q240 952 330 933 Q425 941 473 1075" stroke="#5e544c" stroke-width="5.9" fill="none" opacity="0.7"/><path d="M213 1065 Q240 951 330 937 Q425 944 472 1075" stroke="#5e544c" stroke-width="6.8" fill="none" opacity="0.7"/><path d="M214 1064 Q241 949 330 941 Q425 948 471 1074" stroke="#5e544c" stroke-width="8.0" fill="none" opacity="0.7"/><path d="M215 1063 Q242 947 330 945 Q425 952 470 1073" stroke="#5a5048" stroke-width="7.2" fill="none" opacity="0.7"/><path d="M216 1063 Q242 945 330 949 Q425 955 469 1073" stroke="#6a6058" stroke-width="8.4" fill="none" opacity="0.7"/><path d="M217 1062 Q243 943 330 953 Q425 959 468 1072" stroke="#4a4038" stroke-width="8.9" fill="none" opacity="0.7"/><path d="M218 1061 Q244 941 330 957 Q425 963 467 1071" stroke="#8a8078" stroke-width="8.2" fill="none" opacity="0.7"/><path d="M219 1061 Q244 939 330 961 Q425 966 466 1071" stroke="#8a8078" stroke-width="5.1" fill="none" opacity="0.7"/><path d="M220 1060 Q245 937 330 965 Q425 970 465 1070" stroke="#5e544c" stroke-width="7.0" fill="none" opacity="0.7"/></g><g filter="url(#b4)"><path d="M300 945 Q390 930 450 985 Q488 1040 486 1110 L462 1110 Q458 1040 425 1000 Q375 968 310 975Z" fill="#4e443c" opacity="0.85"/><path d="M280 925 Q330 902 380 905 Q340 918 300 935Z" fill="#d0cac2" opacity="0.6"/></g><g filter="url(#b4)"><path d="M230 1045 Q268 982 335 976 Q405 978 442 1040 Q458 1090 456 1140 Q450 1210 428 1262 Q405 1318 372 1338 Q335 1350 300 1336 Q262 1310 246 1262 Q225 1200 220 1140 Q218 1080 230 1045Z" fill="url(#skin)"/><ellipse cx="207" cy="1145" rx="13" ry="38" fill="#d89880"/><path d="M275 1310 Q330 1360 395 1315 L392 1400 L280 1400Z" fill="#b88470"/></g><g filter="url(#b8)"><ellipse cx="300" cy="1040" rx="50" ry="30" fill="#f8d4c4" opacity="0.35"/><ellipse cx="270" cy="1200" rx="40" ry="60" fill="#f6cdb4" opacity="0.6"/><path d="M420 1030 Q460 1120 440 1250 L420 1260 Q440 1140 405 1040Z" fill="#b87c68" opacity="0.5"/><ellipse cx="340" cy="1340" rx="70" ry="14" fill="#a87868" opacity="0.6"/><ellipse cx="300" cy="1140" rx="30" ry="12" fill="#c89080" opacity="0.5"/><ellipse cx="405" cy="1145" rx="28" ry="12" fill="#c89080" opacity="0.5"/></g><g filter="url(#b4)"><ellipse cx="296" cy="1112" rx="34" ry="14" fill="#b07868" opacity="0.55"/><ellipse cx="403" cy="1118" rx="32" ry="14" fill="#b07868" opacity="0.55"/><ellipse cx="300" cy="1140" rx="26" ry="9" fill="#c08878" opacity="0.45"/><ellipse cx="405" cy="1146" rx="24" ry="9" fill="#c08878" opacity="0.45"/><path d="M338 1130 Q324 1170 318 1192 L328 1196 Q338 1160 346 1130Z" fill="#c48670" opacity="0.4"/><path d="M366 1130 Q380 1170 386 1192 L376 1196 Q368 1160 358 1130Z" fill="#bc7e6a" opacity="0.45"/><ellipse cx="352" cy="1160" rx="9" ry="30" fill="#f6d0bc" opacity="0.6"/><ellipse cx="350" cy="1225" rx="45" ry="10" fill="#c49080" opacity="0.5"/><ellipse cx="345" cy="1305" rx="55" ry="18" fill="#d8a890" opacity="0.5"/></g><g filter="url(#b2)"><path d="M250 1088 Q290 1070 342 1082 L340 1092 Q292 1085 254 1098Z" fill="#6a4a40"/><path d="M372 1087 Q412 1074 448 1090 L446 1098 Q412 1088 376 1096Z" fill="#6a4a40"/></g><g filter="url(#b2)"><path d="M272 1115 Q296 1102 322 1115 Q296 1126 272 1115Z" fill="#a88a80"/><circle cx="296" cy="1115" r="7.5" fill="#6a7e94"/><circle cx="296" cy="1115" r="3" fill="#223"/><path d="M268 1114 Q296 1100 326 1113" stroke="#6a4a40" stroke-width="3" fill="none" opacity="0.8"/><path d="M376 1121 Q402 1109 430 1121 Q402 1133 376 1121Z" fill="#a4867c"/><circle cx="400" cy="1122" r="7.5" fill="#66788c"/><circle cx="400" cy="1122" r="3" fill="#223"/><path d="M372 1119 Q402 1105 434 1119" stroke="#6a4a40" stroke-width="3" fill="none" opacity="0.8"/></g><g filter="url(#b2)"><ellipse cx="330" cy="1196" rx="9" ry="4" fill="#8a5048" opacity="0.8"/><ellipse cx="373" cy="1198" rx="9" ry="4" fill="#8a5048" opacity="0.8"/><path d="M350 1210 V1236" stroke="#9a6458" stroke-width="3" opacity="0.6"/><path d="M298 1246 Q320 1230 350 1234 Q380 1230 398 1246 Q350 1252 298 1246Z" fill="#c8847c"/><path d="M304 1246 Q350 1238 392 1246 Q350 1264 304 1246Z" fill="#604440"/><path d="M310 1251 Q350 1266 390 1251 Q372 1282 342 1280 Q318 1274 310 1251Z" fill="#d89890"/></g><g filter="url(#b2)"><path d="M262 1386 Q330 1400 402 1384 L412 1440 L252 1440Z" fill="#141414"/></g><circle cx="450" cy="1202" r="5" fill="none" stroke="#e8e0d8" stroke-width="2.5"/></g></svg></div></body></html>
